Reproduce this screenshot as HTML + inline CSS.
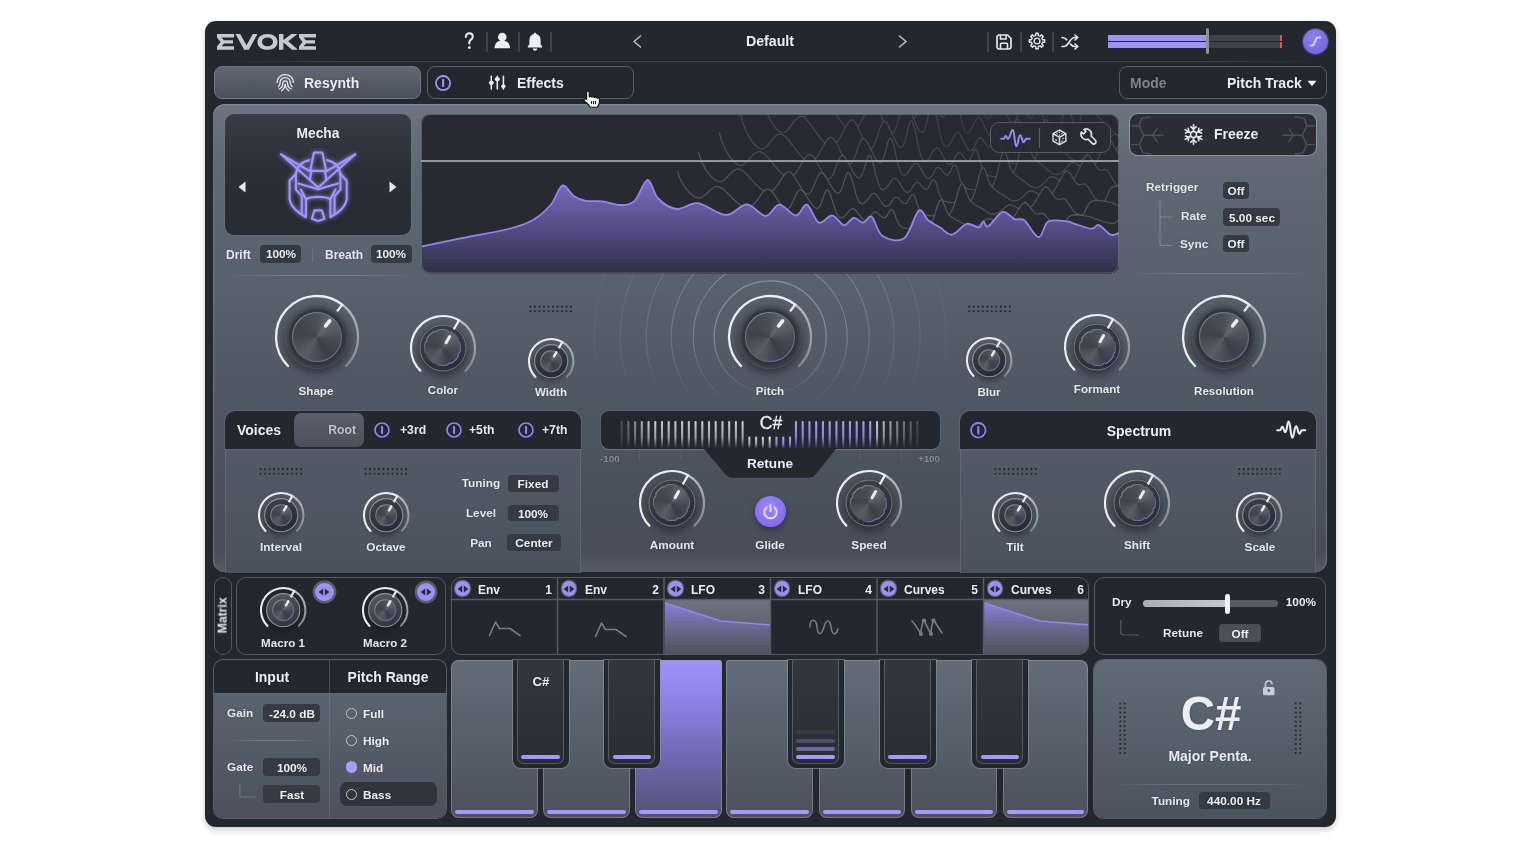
<!DOCTYPE html>
<html><head><meta charset="utf-8"><style>
*{box-sizing:border-box;margin:0;padding:0}
html,body{width:1540px;height:850px;background:#fff;overflow:hidden;font-family:"Liberation Sans",sans-serif;}
.a{position:absolute}
svg.a{overflow:visible}
.kb{border-radius:50%}
.t{position:absolute;color:#e8e9ee;font-weight:bold;white-space:nowrap;line-height:1;will-change:transform;text-shadow:0 0 2px rgba(20,22,28,.35)}
.hsep{position:absolute;width:1.6px;height:20px;background:#3f454e;top:31.5px}
.tab{position:absolute;top:66px;height:33px;border-radius:8px}
.dark{position:absolute;background:#2b2d34;border-radius:9px}
.mx{position:absolute;border:1.5px solid #555b64;border-radius:10px;background:#23272e}
</style></head><body>
<div id="win" class="a" style="left:205px;top:21px;width:1131px;height:806px;background:#23272e;border-radius:11px;box-shadow:0 3px 6px rgba(0,0,0,.2)"></div>
<div class="hsep" style="left:486px"></div>
<div class="hsep" style="left:518px"></div>
<div class="hsep" style="left:550px"></div>
<div class="hsep" style="left:987px"></div>
<div class="hsep" style="left:1020px"></div>
<div class="hsep" style="left:1052px"></div>
<div class="a" style="left:213px;top:60.8px;width:1114px;height:1.3px;background:linear-gradient(90deg,rgba(61,67,76,0),#3d434c 12%,#3d434c 88%,rgba(61,67,76,0))"></div>
<svg class="a" style="left:217px;top:33.8px;overflow:visible;" width="100" height="16" viewBox="0 0 100 16"><g fill="#c6c9d2"><path d="M0,0 H17 V3.6 H4.5 L7,6.2 H16 V9.6 H7 L4.5,12.2 H17 V15.8 H0 V12.4 L3.6,7.9 L0,3.4 Z"/><path d="M18.5,0 H23.2 L29.5,11.2 L35.8,0 H40.5 L31.8,15.8 H27.2 Z"/><path d="M50.5,0 C56.5,0 60.5,3.2 60.5,7.9 C60.5,12.6 56.5,15.8 50.5,15.8 C44.5,15.8 40.5,12.6 40.5,7.9 C40.5,3.2 44.5,0 50.5,0 Z M50.5,3.6 C47,3.6 45,5.4 45,7.9 C45,10.4 47,12.2 50.5,12.2 C54,12.2 56,10.4 56,7.9 C56,5.4 54,3.6 50.5,3.6 Z"/><path d="M62,0 H66.4 V6 L74.5,0 H80.5 L71.2,7.3 L81,15.8 H75 L66.4,8.6 V15.8 H62 Z"/><path d="M82,0 H99 V3.6 H86.5 L89,6.2 H98 V9.6 H89 L86.5,12.2 H99 V15.8 H82 V12.4 L85.6,7.9 L82,3.4 Z"/></g></svg>
<svg class="a" style="left:460px;top:30px;overflow:visible;" width="20" height="22" viewBox="0 0 20 22"><path d="M5.8,7 C5.8,4.5 7.5,3.3 9.3,3.3 C11.3,3.3 12.8,4.6 12.8,6.6 C12.8,8.6 11.3,9.3 10.3,10.2 C9.6,10.8 9.3,11.5 9.3,12.6 V13.6" fill="none" stroke="#eceef2" stroke-width="2" stroke-linecap="round"/><circle cx="9.3" cy="17.6" r="1.35" fill="#eceef2"/></svg>
<svg class="a" style="left:494px;top:32px;overflow:visible;" width="17" height="17" viewBox="0 0 17 17"><circle cx="8.3" cy="5" r="4.3" fill="#eceef2"/><path d="M0.5,16.3 C0.8,10.5 4,8.8 8.3,8.8 C12.6,8.8 15.8,10.5 16.1,16.3 Z" fill="#eceef2"/></svg>
<svg class="a" style="left:527px;top:32px;overflow:visible;" width="16" height="19" viewBox="0 0 16 19"><path d="M8,0.8 C8.9,0.8 9.3,1.4 9.3,2 C12.4,2.8 13.6,5.3 13.6,8.6 V12.2 L15.2,14.6 V15.6 H0.8 V14.6 L2.4,12.2 V8.6 C2.4,5.3 3.6,2.8 6.7,2 C6.7,1.4 7.1,0.8 8,0.8 Z" fill="#eceef2"/><path d="M5.8,16.6 H10.2 C10,18 9.2,18.8 8,18.8 C6.8,18.8 6,18 5.8,16.6 Z" fill="#eceef2"/></svg>
<svg class="a" style="left:632px;top:35px;overflow:visible;" width="10" height="13" viewBox="0 0 10 13"><path d="M8.5,1 L2,6.5 L8.5,12" fill="none" stroke="#b9bec6" stroke-width="1.6" stroke-linecap="round" stroke-linejoin="round"/></svg>
<svg class="a" style="left:898px;top:35px;overflow:visible;" width="10" height="13" viewBox="0 0 10 13"><path d="M1.5,1 L8,6.5 L1.5,12" fill="none" stroke="#b9bec6" stroke-width="1.6" stroke-linecap="round" stroke-linejoin="round"/></svg>
<div class="t" style="left:570.00px;width:400px;text-align:center;top:33.55px;font-size:14.2px;color:#eceef2;font-weight:bold;">Default</div>
<svg class="a" style="left:996px;top:34px;overflow:visible;" width="16" height="16" viewBox="0 0 16 16"><path d="M2.5,1 H11.5 L15,4.5 V12.8 C15,14.1 14.1,15 12.8,15 H3.2 C1.9,15 1,14.1 1,12.8 V3.2 C1,1.9 1.9,1 3.2,1 Z" fill="none" stroke="#e6e8ec" stroke-width="1.7" stroke-linejoin="round"/><path d="M4.5,1.2 V5 H10 V1.2" fill="none" stroke="#e6e8ec" stroke-width="1.6"/><path d="M4.5,15 V10.3 C4.5,9.7 5,9.3 5.5,9.3 H10.5 C11,9.3 11.5,9.7 11.5,10.3 V15" fill="none" stroke="#e6e8ec" stroke-width="1.6"/></svg>
<svg class="a" style="left:1028.7px;top:33.2px;overflow:visible;" width="17" height="17" viewBox="0 0 17 17"><path d="M13.17,5.86 L13.55,6.72 L15.70,6.78 L15.70,9.22 L13.55,9.28 L13.17,10.14 L12.83,11.02 L14.31,12.58 L12.58,14.31 L11.02,12.83 L10.14,13.17 L9.28,13.55 L9.22,15.70 L6.78,15.70 L6.72,13.55 L5.86,13.17 L4.98,12.83 L3.42,14.31 L1.69,12.58 L3.17,11.02 L2.83,10.14 L2.45,9.28 L0.30,9.22 L0.30,6.78 L2.45,6.72 L2.83,5.86 L3.17,4.98 L1.69,3.42 L3.42,1.69 L4.98,3.17 L5.86,2.83 L6.72,2.45 L6.78,0.30 L9.22,0.30 L9.28,2.45 L10.14,2.83 L11.02,3.17 L12.58,1.69 L14.31,3.42 L12.83,4.98 Z" fill="none" stroke="#e6e8ec" stroke-width="1.4" stroke-linejoin="round"/><circle cx="8" cy="8" r="2.9" fill="none" stroke="#e6e8ec" stroke-width="1.4"/></svg>
<svg class="a" style="left:1060.5px;top:34px;overflow:visible;" width="18" height="16" viewBox="0 0 18 16"><g fill="none" stroke="#e6e8ec" stroke-width="1.6" stroke-linecap="round" stroke-linejoin="round"><path d="M1,12.5 H3 C7.5,12.5 9,3.5 13.5,3.5 H16.5"/><path d="M1,3.5 C3,3.5 4.5,4 5.8,5.8"/><path d="M9.3,10 C10.5,11.8 12,12.5 14,12.5 H16.5"/><path d="M14,1 L16.8,3.5 L14,6"/><path d="M14,10 L16.8,12.5 L14,15"/></g></svg>
<div class="a" style="left:1108px;top:34.5px;width:174px;height:6px;background:#3c414a;border-radius:1px"></div>
<div class="a" style="left:1108px;top:42.3px;width:174px;height:6px;background:#3c414a;border-radius:1px"></div>
<div class="a" style="left:1108px;top:34.5px;width:101px;height:6px;background:#9d92f5"></div>
<div class="a" style="left:1108px;top:42.3px;width:101px;height:6px;background:#9d92f5"></div>
<div class="a" style="left:1279.5px;top:34.5px;width:2.5px;height:6px;background:#e0524f"></div>
<div class="a" style="left:1279.5px;top:42.3px;width:2.5px;height:6px;background:#e0524f"></div>
<div class="a" style="left:1205.8px;top:28px;width:3.4px;height:26.3px;background:#8b9199;border-radius:2px"></div>
<div class="a kb" style="left:1303px;top:29px;width:25px;height:25px;background:radial-gradient(circle at 40% 30%,#8c80ee,#6e60dc);box-shadow:0 0 0 1px rgba(120,110,220,.4)"></div>
<svg class="a" style="left:1308px;top:35px;overflow:visible;" width="15" height="13" viewBox="0 0 15 13"><path d="M2.5,10.5 H5.2 L9,2.5 H12.5" fill="none" stroke="#eceaff" stroke-width="1.6" stroke-linecap="round" stroke-linejoin="round"/></svg>
<div class="tab" style="left:214px;width:207px;background:linear-gradient(#606875,#49505c);border:1px solid #6f7783"></div>
<svg class="a" style="left:270px;top:70px;overflow:visible;" width="30" height="26" viewBox="0 0 30 26"><g fill="none" stroke="#e2e5ea" stroke-width="1.35" stroke-linecap="round"><path d="M7.2,12.4 C7.2,7.6 10.8,4.6 15.2,4.6 C19.6,4.6 23.4,7.6 23.4,12.4"/><path d="M8.4,16.6 C9.6,15.8 10,14.6 10,12.8 C10,9.8 12.2,7.6 15.2,7.6 C18.2,7.6 20.4,9.8 20.4,12.8 C20.4,14.6 20.9,15.8 22.2,16.6"/><path d="M9.2,19 C11.6,18 12.8,16.4 12.8,13.6 C12.8,12 13.8,10.8 15.2,10.8 C16.6,10.8 17.6,12 17.6,13.6 C17.6,16.4 18.8,18 21.2,19"/><path d="M11.6,20.8 C13.8,19.2 15.1,16.8 15.2,13.8 C15.3,16.8 16.6,19.2 18.8,20.8"/></g></svg>
<div class="t" style="left:304.00px;top:75.58px;font-size:14px;color:#eceef2;font-weight:bold;">Resynth</div>
<div class="tab" style="left:426.5px;width:207.5px;border:1.5px solid #5b616b"></div>
<svg class="a" style="left:433.896px;top:73.596px;overflow:visible;" width="18.208" height="18.208" viewBox="0 0 18.208 18.208"><circle cx="9.10" cy="9.10" r="7.10" fill="none" stroke="#a094fa" stroke-width="1.8"/><line x1="9.10" y1="5.20" x2="9.10" y2="13.01" stroke="#a094fa" stroke-width="2.1"/></svg>
<svg class="a" style="left:484px;top:70px;overflow:visible;" width="30" height="26" viewBox="0 0 30 26"><g stroke="#eceef2" stroke-width="1.5" stroke-linecap="round"><line x1="7.3" y1="6.2" x2="7.3" y2="19"/><line x1="13.3" y1="6.2" x2="13.3" y2="19"/><line x1="19.4" y1="6.2" x2="19.4" y2="19"/></g><g fill="#eceef2"><ellipse cx="7.3" cy="12.8" rx="2.5" ry="2.1"/><ellipse cx="13.3" cy="9.2" rx="2.5" ry="2.1"/><path d="M16.9,16.2 L19.4,13.6 L21.9,16.2 L19.4,19.2 Z"/></g></svg>
<div class="t" style="left:517.00px;top:75.58px;font-size:14px;color:#eceef2;font-weight:bold;">Effects</div>
<div class="tab" style="left:1118.7px;width:208px;border:1.5px solid #565c66"></div>
<div class="t" style="left:1130.00px;top:75.58px;font-size:14px;color:#7f858e;font-weight:bold;">Mode</div>
<div class="t" style="left:1227.00px;top:75.58px;font-size:14px;color:#eceef2;font-weight:bold;">Pitch Track</div>
<svg class="a" style="left:1307px;top:80px;overflow:visible;" width="10" height="7" viewBox="0 0 10 7"><path d="M0.5,0.8 H9.5 L5,6.2 Z" fill="#eceef2"/></svg>
<div class="a" style="left:213px;top:104px;width:1114px;height:468px;border-radius:12px;background:linear-gradient(#6d7582,#5f6875 14%,#57606d 40%,#4f5764 63%,#474e5a 96%,#565d69);box-shadow:inset 0 1.5px 0 #7f8793, inset 1.2px 0 0 #6a717d, inset -1.2px 0 0 #6a717d"></div>
<svg class="a" style="left:0;top:0" width="1540" height="850"><defs><clipPath id="sonar"><rect x="590" y="273" width="360" height="135"/></clipPath><linearGradient id="sfade" gradientUnits="userSpaceOnUse" x1="0" y1="273" x2="0" y2="405"><stop offset="0" stop-color="#fff"/><stop offset="0.45" stop-color="#fff"/><stop offset="1" stop-color="#000"/></linearGradient><mask id="smask"><rect x="590" y="273" width="360" height="135" fill="url(#sfade)"/></mask></defs><g clip-path="url(#sonar)" mask="url(#smask)"><circle cx="770.2" cy="336.8" r="56" fill="none" stroke="rgba(205,210,218,0.42)" stroke-width="1.2"/><circle cx="770.2" cy="336.8" r="77" fill="none" stroke="rgba(205,210,218,0.32)" stroke-width="1.2"/><circle cx="770.2" cy="336.8" r="99" fill="none" stroke="rgba(205,210,218,0.24)" stroke-width="1.2"/><circle cx="770.2" cy="336.8" r="124" fill="none" stroke="rgba(205,210,218,0.17)" stroke-width="1.2"/><circle cx="770.2" cy="336.8" r="150" fill="none" stroke="rgba(205,210,218,0.11)" stroke-width="1.2"/><circle cx="770.2" cy="336.8" r="176" fill="none" stroke="rgba(205,210,218,0.06)" stroke-width="1.2"/></g></svg>
<div class="dark" style="left:225px;top:114px;width:186px;height:121px;background:linear-gradient(#383c46,#2c2f37 45%,#282b32);box-shadow:0 0 0 1px rgba(120,128,138,.35)"></div>
<div class="t" style="left:117.50px;width:400px;text-align:center;top:127.31px;font-size:13.8px;color:#eceef2;font-weight:bold;">Mecha</div>
<svg class="a" style="left:238px;top:181px;overflow:visible;" width="8" height="12" viewBox="0 0 8 12"><path d="M7.5,0.5 V11.5 L0.5,6 Z" fill="#e6e8ec"/></svg>
<svg class="a" style="left:388.5px;top:181px;overflow:visible;" width="8" height="12" viewBox="0 0 8 12"><path d="M0.5,0.5 V11.5 L7.5,6 Z" fill="#e6e8ec"/></svg>
<svg class="a" style="left:270px;top:140px" width="96" height="90" viewBox="0 0 907 850"><defs><filter id="glow" x="-20%" y="-20%" width="140%" height="140%"><feGaussianBlur stdDeviation="22"/></filter></defs><g opacity=".9" filter="url(#glow)"><g fill="none" stroke="#a295ff" stroke-width="20" stroke-linejoin="round" stroke-linecap="round"><path d="M105,135 L455,448 L805,135"/><path d="M105,135 L385,300"/><path d="M805,135 L525,300"/><path d="M415,118 H495 L530,292 H380 Z"/><path d="M390,300 L378,372"/><path d="M520,300 L532,372"/><path d="M245,318 C255,250 300,205 370,190"/><path d="M665,318 C655,250 610,205 540,190"/><path d="M268,410 L455,465 L642,410"/><path d="M245,318 L185,385 V560 C195,625 260,690 340,730 V560 L292,468"/><path d="M665,318 L725,385 V560 C715,625 650,690 570,730 V560 L618,468"/><path d="M245,318 V470 L300,530 V700"/><path d="M665,318 V470 L610,530 V700"/><path d="M340,560 C380,530 530,530 570,560"/><path d="M420,665 H490 L515,745 L455,765 L395,745 Z"/></g></g><g fill="none" stroke="#a295ff" stroke-width="20" stroke-linejoin="round" stroke-linecap="round"><path d="M105,135 L455,448 L805,135"/><path d="M105,135 L385,300"/><path d="M805,135 L525,300"/><path d="M415,118 H495 L530,292 H380 Z"/><path d="M390,300 L378,372"/><path d="M520,300 L532,372"/><path d="M245,318 C255,250 300,205 370,190"/><path d="M665,318 C655,250 610,205 540,190"/><path d="M268,410 L455,465 L642,410"/><path d="M245,318 L185,385 V560 C195,625 260,690 340,730 V560 L292,468"/><path d="M665,318 L725,385 V560 C715,625 650,690 570,730 V560 L618,468"/><path d="M245,318 V470 L300,530 V700"/><path d="M665,318 V470 L610,530 V700"/><path d="M340,560 C380,530 530,530 570,560"/><path d="M420,665 H490 L515,745 L455,765 L395,745 Z"/></g></svg>
<div class="t" style="left:225.50px;top:248.60px;font-size:12px;color:#e6e8ec;font-weight:bold;">Drift</div>
<div class="a" style="left:260px;top:244.6px;width:41px;height:18.4px;background:#353a43;border-radius:4px"></div>
<div class="t" style="left:80.50px;width:400px;text-align:center;top:249.47px;font-size:11.8px;color:#eef0f3;font-weight:bold;">100%</div>
<div class="a" style="left:312px;top:247.5px;width:1px;height:14px;background:#6b727c"></div>
<div class="t" style="left:325.00px;top:248.60px;font-size:12px;color:#e6e8ec;font-weight:bold;">Breath</div>
<div class="a" style="left:371px;top:244.6px;width:40.5px;height:18.4px;background:#353a43;border-radius:4px"></div>
<div class="t" style="left:191.25px;width:400px;text-align:center;top:249.47px;font-size:11.8px;color:#eef0f3;font-weight:bold;">100%</div>
<div class="a" style="left:225px;top:274.5px;width:190px;height:1px;background:linear-gradient(90deg,rgba(150,157,167,0),rgba(150,157,167,.45) 30%,rgba(150,157,167,.45) 70%,rgba(150,157,167,0))"></div>
<div class="a" style="left:1130px;top:273px;width:180px;height:1px;background:linear-gradient(90deg,rgba(150,157,167,0),rgba(150,157,167,.4) 30%,rgba(150,157,167,.4) 70%,rgba(150,157,167,0))"></div>
<svg class="a" style="left:0;top:0" width="1540" height="850"><defs>
<clipPath id="spc"><rect x="421" y="114" width="698" height="159.5" rx="9"/></clipPath>
<linearGradient id="spg" gradientUnits="userSpaceOnUse" x1="0" y1="180" x2="0" y2="273"><stop offset="0" stop-color="#7a6cc2"/><stop offset="0.55" stop-color="#524a80"/><stop offset="1" stop-color="#302f46"/></linearGradient>
</defs>
<rect x="421" y="114" width="698" height="159.5" rx="9" fill="#292932"/>
<g clip-path="url(#spc)">
<path d="M824.4,36.9 L826.1,46.1 L828.0,53.2 L830.1,59.9 L832.4,66.0 L834.8,71.4 L837.3,75.9 L839.8,79.5 L842.3,82.1 L844.8,83.6 L847.3,83.4 L849.7,81.3 L852.2,78.0 L854.7,73.9 L857.3,69.7 L860.0,66.2 L862.8,64.0 L865.8,64.0 L869.0,66.8 L872.5,71.8 L876.1,78.1 L879.8,84.7 L883.6,90.8 L887.2,95.8 L890.7,99.2 L893.9,100.6 L896.9,99.5 L899.7,96.3 L902.4,91.4 L905.0,85.5 L907.5,79.2 L910.0,73.5 L912.4,69.4 L914.9,67.9 L917.4,69.9 L919.9,74.5 L922.3,80.6 L924.7,87.3 L927.1,93.5 L929.3,98.6 L931.5,102.1 L933.6,103.4 L935.5,102.2 L937.3,98.9 L938.9,94.0 L940.5,87.9 L942.1,81.5 L943.7,75.5 L945.4,71.1 L947.2,69.3 L949.2,70.9 L951.3,75.0 L953.5,80.7 L955.8,86.9 L958.0,92.8 L960.1,97.6 L962.2,100.9 L964.0,102.1 L965.6,100.8 L967.1,97.2 L968.5,91.9 L969.8,85.6 L971.0,79.1 L972.2,73.4 L973.5,69.8 L974.9,69.3 L976.3,73.0 L977.8,79.7 L979.3,88.0 L980.8,96.8 L982.3,104.7 L983.8,111.3 L985.3,115.9 L986.9,118.4 L988.5,118.7 L990.1,117.5 L991.8,115.2 L993.5,112.0 L995.2,108.5 L996.9,105.2 L998.5,102.8 L1000.1,102.1 L1001.7,103.4 L1003.2,106.2 L1004.8,109.7 L1006.3,113.5 L1007.8,117.0 L1009.3,119.9 L1010.7,121.9 L1012.1,122.7 L1013.4,122.4 L1014.7,121.2 L1015.9,119.1 L1017.1,116.6 L1018.2,113.8 L1019.4,111.2 L1020.5,109.1 L1021.7,108.1 L1022.9,108.3 L1024.1,109.5 L1025.4,111.3 L1026.6,113.3 L1027.8,115.3 L1029.0,116.9 L1030.2,118.0 L1031.3,118.4 L1032.4,117.6 L1033.4,115.7 L1034.4,113.1 L1035.4,110.1 L1036.4,107.3 L1037.5,105.1 L1038.5,104.2 L1039.7,105.2 L1040.9,108.3 L1042.0,113.1 L1043.1,118.6 L1044.3,124.0 L1045.5,128.6 L1047.0,132.1 L1048.6,134.5 L1050.5,135.9 L1052.7,136.7 L1055.3,137.2 L1058.2,137.6 L1061.1,137.8 L1064.1,137.8 L1067.0,137.8 L1069.8,137.6 L1072.2,137.1 L1074.4,135.9 L1076.4,133.0 L1078.3,128.1 L1080.2,120.9 L1081.9,112.0 L1083.5,102.6 L1085.1,94.2 L1086.6,88.8 L1088.0,87.1 L1089.3,88.3 L1090.4,91.7 L1091.6,96.3 L1092.6,101.5 L1093.7,106.4 L1094.9,110.5 L1096.2,113.5 L1097.6,115.6 L1099.0,117.5 L1100.5,119.3 L1102.1,120.9 L1103.6,122.4 L1105.1,123.9 L1106.7,125.2 L1108.2,126.6 L1109.7,128.1 L1111.1,129.7 L1112.6,131.2 L1114.1,132.6 L1115.5,133.7 L1117.0,134.5 L1118.6,134.9 L1120.2,134.9 L1121.9,134.4 L1123.7,133.3 L1125.5,131.6 L1127.4,129.4 L1129.3,126.9 L1131.1,124.3 L1132.9,122.0 L1134.6,120.6 L1136.3,120.3 L1137.9,120.8 L1139.6,121.9 L1141.2,123.3 L1142.7,124.6 L1144.2,125.7 L1145.5,126.5 L1146.6,126.6 L1147.5,126.0 L1148.3,124.9 L1148.9,123.4 L1149.4,121.6 L1149.9,119.7 L1150.4,117.9 L1150.8,116.6 L1151.4,116.0 L1151.9,116.4 L1152.4,117.8 L1152.8,119.6 L1153.2,121.6 L1153.8,123.3 L1154.4,124.6 L1155.2,125.1 L1156.3,124.7 L1157.7,123.0 L1159.3,120.0 L1161.1,115.7 L1163.1,110.5 L1165.1,104.8 L1167.0,99.3 L1168.9,94.9 L1170.7,92.3 L1172.3,92.1 L1173.9,93.5 L1175.5,96.2 L1177.0,99.6 L1178.5,103.1 L1179.9,106.4 L1181.3,109.1 L1182.7,110.8 L1184.0,111.6 L1185.2,111.6 L1186.3,111.3 L1187.3,110.8 L1188.5,110.5 L1189.6,110.7 L1190.9,111.6 L1192.3,113.5 L1193.9,116.8 L1195.7,121.1 L1197.6,125.7 L1199.5,129.8 L1201.4,133.0 L1203.3,135.1 L1205.1,136.2 L1206.7,136.6 L1208.1,136.3 L1209.2,135.3 L1210.2,133.4 L1211.2,130.5 L1212.2,126.9 L1213.3,122.7 L1214.7,118.8 L1216.3,116.0 L1218.3,114.4 L1220.7,113.6 L1223.3,113.4 L1226.0,113.6 L1228.7,114.2 L1231.3,114.9 L1233.6,115.5 L1235.5,116.0 L1236.9,116.3 L1237.9,116.7 L1238.7,117.2 L1239.3,117.8 L1239.9,118.4 L1240.6,119.1 L1241.5,119.8 L1242.8,120.6 L1244.5,121.6 L1246.6,122.8 L1248.8,124.1 L1251.2,125.3 L1253.6,126.5 L1255.9,127.4 L1257.9,128.0 L1259.6,128.3 L1260.9,128.1 L1262.0,127.5 L1262.8,126.4 L1263.5,125.2 L1264.2,124.0 L1264.9,123.0 L1265.7,122.5 L1266.8,122.7 L1268.1,123.8 L1269.6,125.6 L1271.1,127.7 L1272.7,129.8 L1274.4,131.7 L1276.0,133.2 L1277.4,134.3 L1278.8,134.9 L1280.1,135.2 L1281.3,135.2 L1282.5,135.0 L1283.6,134.7 L1284.7,134.3 L1285.6,133.9 L1286.4,133.6 L1286.4,300 L824.4,300 Z" fill="#292932" stroke="none"/><path d="M824.4,36.9 L826.1,46.1 L828.0,53.2 L830.1,59.9 L832.4,66.0 L834.8,71.4 L837.3,75.9 L839.8,79.5 L842.3,82.1 L844.8,83.6 L847.3,83.4 L849.7,81.3 L852.2,78.0 L854.7,73.9 L857.3,69.7 L860.0,66.2 L862.8,64.0 L865.8,64.0 L869.0,66.8 L872.5,71.8 L876.1,78.1 L879.8,84.7 L883.6,90.8 L887.2,95.8 L890.7,99.2 L893.9,100.6 L896.9,99.5 L899.7,96.3 L902.4,91.4 L905.0,85.5 L907.5,79.2 L910.0,73.5 L912.4,69.4 L914.9,67.9 L917.4,69.9 L919.9,74.5 L922.3,80.6 L924.7,87.3 L927.1,93.5 L929.3,98.6 L931.5,102.1 L933.6,103.4 L935.5,102.2 L937.3,98.9 L938.9,94.0 L940.5,87.9 L942.1,81.5 L943.7,75.5 L945.4,71.1 L947.2,69.3 L949.2,70.9 L951.3,75.0 L953.5,80.7 L955.8,86.9 L958.0,92.8 L960.1,97.6 L962.2,100.9 L964.0,102.1 L965.6,100.8 L967.1,97.2 L968.5,91.9 L969.8,85.6 L971.0,79.1 L972.2,73.4 L973.5,69.8 L974.9,69.3 L976.3,73.0 L977.8,79.7 L979.3,88.0 L980.8,96.8 L982.3,104.7 L983.8,111.3 L985.3,115.9 L986.9,118.4 L988.5,118.7 L990.1,117.5 L991.8,115.2 L993.5,112.0 L995.2,108.5 L996.9,105.2 L998.5,102.8 L1000.1,102.1 L1001.7,103.4 L1003.2,106.2 L1004.8,109.7 L1006.3,113.5 L1007.8,117.0 L1009.3,119.9 L1010.7,121.9 L1012.1,122.7 L1013.4,122.4 L1014.7,121.2 L1015.9,119.1 L1017.1,116.6 L1018.2,113.8 L1019.4,111.2 L1020.5,109.1 L1021.7,108.1 L1022.9,108.3 L1024.1,109.5 L1025.4,111.3 L1026.6,113.3 L1027.8,115.3 L1029.0,116.9 L1030.2,118.0 L1031.3,118.4 L1032.4,117.6 L1033.4,115.7 L1034.4,113.1 L1035.4,110.1 L1036.4,107.3 L1037.5,105.1 L1038.5,104.2 L1039.7,105.2 L1040.9,108.3 L1042.0,113.1 L1043.1,118.6 L1044.3,124.0 L1045.5,128.6 L1047.0,132.1 L1048.6,134.5 L1050.5,135.9 L1052.7,136.7 L1055.3,137.2 L1058.2,137.6 L1061.1,137.8 L1064.1,137.8 L1067.0,137.8 L1069.8,137.6 L1072.2,137.1 L1074.4,135.9 L1076.4,133.0 L1078.3,128.1 L1080.2,120.9 L1081.9,112.0 L1083.5,102.6 L1085.1,94.2 L1086.6,88.8 L1088.0,87.1 L1089.3,88.3 L1090.4,91.7 L1091.6,96.3 L1092.6,101.5 L1093.7,106.4 L1094.9,110.5 L1096.2,113.5 L1097.6,115.6 L1099.0,117.5 L1100.5,119.3 L1102.1,120.9 L1103.6,122.4 L1105.1,123.9 L1106.7,125.2 L1108.2,126.6 L1109.7,128.1 L1111.1,129.7 L1112.6,131.2 L1114.1,132.6 L1115.5,133.7 L1117.0,134.5 L1118.6,134.9 L1120.2,134.9 L1121.9,134.4 L1123.7,133.3 L1125.5,131.6 L1127.4,129.4 L1129.3,126.9 L1131.1,124.3 L1132.9,122.0 L1134.6,120.6 L1136.3,120.3 L1137.9,120.8 L1139.6,121.9 L1141.2,123.3 L1142.7,124.6 L1144.2,125.7 L1145.5,126.5 L1146.6,126.6 L1147.5,126.0 L1148.3,124.9 L1148.9,123.4 L1149.4,121.6 L1149.9,119.7 L1150.4,117.9 L1150.8,116.6 L1151.4,116.0 L1151.9,116.4 L1152.4,117.8 L1152.8,119.6 L1153.2,121.6 L1153.8,123.3 L1154.4,124.6 L1155.2,125.1 L1156.3,124.7 L1157.7,123.0 L1159.3,120.0 L1161.1,115.7 L1163.1,110.5 L1165.1,104.8 L1167.0,99.3 L1168.9,94.9 L1170.7,92.3 L1172.3,92.1 L1173.9,93.5 L1175.5,96.2 L1177.0,99.6 L1178.5,103.1 L1179.9,106.4 L1181.3,109.1 L1182.7,110.8 L1184.0,111.6 L1185.2,111.6 L1186.3,111.3 L1187.3,110.8 L1188.5,110.5 L1189.6,110.7 L1190.9,111.6 L1192.3,113.5 L1193.9,116.8 L1195.7,121.1 L1197.6,125.7 L1199.5,129.8 L1201.4,133.0 L1203.3,135.1 L1205.1,136.2 L1206.7,136.6 L1208.1,136.3 L1209.2,135.3 L1210.2,133.4 L1211.2,130.5 L1212.2,126.9 L1213.3,122.7 L1214.7,118.8 L1216.3,116.0 L1218.3,114.4 L1220.7,113.6 L1223.3,113.4 L1226.0,113.6 L1228.7,114.2 L1231.3,114.9 L1233.6,115.5 L1235.5,116.0 L1236.9,116.3 L1237.9,116.7 L1238.7,117.2 L1239.3,117.8 L1239.9,118.4 L1240.6,119.1 L1241.5,119.8 L1242.8,120.6 L1244.5,121.6 L1246.6,122.8 L1248.8,124.1 L1251.2,125.3 L1253.6,126.5 L1255.9,127.4 L1257.9,128.0 L1259.6,128.3 L1260.9,128.1 L1262.0,127.5 L1262.8,126.4 L1263.5,125.2 L1264.2,124.0 L1264.9,123.0 L1265.7,122.5 L1266.8,122.7 L1268.1,123.8 L1269.6,125.6 L1271.1,127.7 L1272.7,129.8 L1274.4,131.7 L1276.0,133.2 L1277.4,134.3 L1278.8,134.9 L1280.1,135.2 L1281.3,135.2 L1282.5,135.0 L1283.6,134.7 L1284.7,134.3 L1285.6,133.9 L1286.4,133.6" fill="none" stroke="rgba(128,131,139,0.20)" stroke-width="1.3" stroke-linejoin="round"/><path d="M803.4,56.1 L805.1,64.7 L807.0,71.4 L809.1,77.7 L811.4,83.4 L813.8,88.4 L816.3,92.7 L818.8,96.1 L821.3,98.5 L823.8,99.9 L826.3,99.7 L828.7,97.8 L831.2,94.7 L833.7,90.8 L836.3,86.9 L839.0,83.6 L841.8,81.5 L844.8,81.5 L848.0,84.2 L851.5,88.9 L855.1,94.8 L858.8,101.0 L862.6,106.7 L866.2,111.4 L869.7,114.6 L872.9,115.9 L875.9,114.9 L878.7,111.8 L881.4,107.2 L884.0,101.7 L886.5,95.8 L889.0,90.4 L891.4,86.6 L893.9,85.2 L896.4,87.1 L898.9,91.4 L901.3,97.1 L903.7,103.4 L906.1,109.2 L908.3,114.1 L910.5,117.3 L912.6,118.5 L914.5,117.4 L916.3,114.3 L917.9,109.7 L919.5,104.0 L921.1,97.9 L922.7,92.4 L924.4,88.2 L926.2,86.6 L928.2,88.0 L930.3,91.9 L932.5,97.2 L934.8,103.0 L937.0,108.6 L939.1,113.1 L941.2,116.2 L943.0,117.3 L944.6,116.1 L946.1,112.7 L947.5,107.8 L948.8,101.8 L950.0,95.7 L951.2,90.4 L952.5,86.9 L953.9,86.6 L955.3,89.9 L956.8,96.2 L958.3,104.1 L959.8,112.3 L961.3,119.8 L962.8,125.9 L964.3,130.3 L965.9,132.6 L967.5,132.9 L969.1,131.8 L970.8,129.6 L972.5,126.6 L974.2,123.3 L975.9,120.2 L977.5,118.0 L979.1,117.3 L980.7,118.6 L982.2,121.1 L983.8,124.4 L985.3,128.0 L986.8,131.3 L988.3,134.0 L989.7,135.8 L991.1,136.7 L992.4,136.4 L993.7,135.2 L994.9,133.3 L996.1,130.9 L997.2,128.3 L998.4,125.8 L999.5,123.9 L1000.7,122.9 L1001.9,123.1 L1003.1,124.2 L1004.4,125.9 L1005.6,127.8 L1006.8,129.7 L1008.0,131.2 L1009.2,132.3 L1010.3,132.6 L1011.4,131.8 L1012.4,130.1 L1013.4,127.6 L1014.4,124.8 L1015.4,122.2 L1016.5,120.1 L1017.5,119.3 L1018.7,120.2 L1019.9,123.2 L1021.0,127.7 L1022.1,132.8 L1023.3,137.8 L1024.5,142.2 L1026.0,145.5 L1027.6,147.7 L1029.5,149.0 L1031.7,149.7 L1034.3,150.3 L1037.2,150.6 L1040.1,150.8 L1043.1,150.8 L1046.0,150.8 L1048.8,150.6 L1051.2,150.2 L1053.4,149.0 L1055.4,146.3 L1057.3,141.7 L1059.2,134.9 L1060.9,126.6 L1062.5,117.8 L1064.1,109.9 L1065.6,104.8 L1067.0,103.2 L1068.3,104.4 L1069.4,107.5 L1070.6,111.9 L1071.6,116.7 L1072.7,121.3 L1073.9,125.2 L1075.2,128.0 L1076.6,130.0 L1078.0,131.8 L1079.5,133.4 L1081.1,134.9 L1082.6,136.4 L1084.1,137.7 L1085.7,139.0 L1087.2,140.3 L1088.7,141.7 L1090.1,143.2 L1091.6,144.7 L1093.1,145.9 L1094.5,147.0 L1096.0,147.7 L1097.6,148.1 L1099.2,148.1 L1100.9,147.6 L1102.7,146.6 L1104.5,145.0 L1106.4,143.0 L1108.3,140.6 L1110.1,138.1 L1111.9,136.0 L1113.6,134.7 L1115.3,134.4 L1116.9,134.9 L1118.6,135.9 L1120.2,137.2 L1121.7,138.4 L1123.2,139.5 L1124.5,140.2 L1125.6,140.3 L1126.5,139.8 L1127.3,138.7 L1127.9,137.3 L1128.4,135.6 L1128.9,133.8 L1129.4,132.1 L1129.8,130.9 L1130.4,130.3 L1130.9,130.7 L1131.4,132.0 L1131.8,133.7 L1132.2,135.6 L1132.8,137.2 L1133.4,138.4 L1134.2,138.9 L1135.3,138.5 L1136.7,137.0 L1138.3,134.1 L1140.1,130.1 L1142.1,125.2 L1144.1,119.9 L1146.0,114.7 L1147.9,110.5 L1149.7,108.1 L1151.3,107.9 L1152.9,109.3 L1154.5,111.8 L1156.0,114.9 L1157.5,118.3 L1158.9,121.4 L1160.3,123.9 L1161.7,125.5 L1163.0,126.2 L1164.2,126.2 L1165.3,125.9 L1166.3,125.5 L1167.5,125.2 L1168.6,125.4 L1169.9,126.2 L1171.3,128.0 L1172.9,131.1 L1174.7,135.2 L1176.6,139.5 L1178.5,143.3 L1180.4,146.3 L1182.3,148.2 L1184.1,149.3 L1185.7,149.7 L1187.1,149.4 L1188.2,148.5 L1189.2,146.7 L1190.2,144.0 L1191.2,140.5 L1192.3,136.7 L1193.7,133.0 L1195.3,130.3 L1197.3,128.8 L1199.7,128.1 L1202.3,127.9 L1205.0,128.1 L1207.7,128.6 L1210.3,129.3 L1212.6,129.9 L1214.5,130.3 L1215.9,130.7 L1216.9,131.0 L1217.7,131.5 L1218.3,132.0 L1218.9,132.6 L1219.6,133.2 L1220.5,133.9 L1221.8,134.7 L1223.5,135.6 L1225.6,136.7 L1227.8,137.9 L1230.2,139.1 L1232.6,140.2 L1234.9,141.0 L1236.9,141.6 L1238.6,141.9 L1239.9,141.7 L1241.0,141.1 L1241.8,140.1 L1242.5,139.0 L1243.2,137.9 L1243.9,137.0 L1244.7,136.5 L1245.8,136.7 L1247.1,137.7 L1248.6,139.3 L1250.1,141.3 L1251.7,143.3 L1253.4,145.0 L1255.0,146.5 L1256.4,147.5 L1257.8,148.1 L1259.1,148.3 L1260.3,148.3 L1261.5,148.2 L1262.6,147.9 L1263.7,147.5 L1264.6,147.2 L1265.4,146.9 L1265.4,300 L803.4,300 Z" fill="#292932" stroke="none"/><path d="M803.4,56.1 L805.1,64.7 L807.0,71.4 L809.1,77.7 L811.4,83.4 L813.8,88.4 L816.3,92.7 L818.8,96.1 L821.3,98.5 L823.8,99.9 L826.3,99.7 L828.7,97.8 L831.2,94.7 L833.7,90.8 L836.3,86.9 L839.0,83.6 L841.8,81.5 L844.8,81.5 L848.0,84.2 L851.5,88.9 L855.1,94.8 L858.8,101.0 L862.6,106.7 L866.2,111.4 L869.7,114.6 L872.9,115.9 L875.9,114.9 L878.7,111.8 L881.4,107.2 L884.0,101.7 L886.5,95.8 L889.0,90.4 L891.4,86.6 L893.9,85.2 L896.4,87.1 L898.9,91.4 L901.3,97.1 L903.7,103.4 L906.1,109.2 L908.3,114.1 L910.5,117.3 L912.6,118.5 L914.5,117.4 L916.3,114.3 L917.9,109.7 L919.5,104.0 L921.1,97.9 L922.7,92.4 L924.4,88.2 L926.2,86.6 L928.2,88.0 L930.3,91.9 L932.5,97.2 L934.8,103.0 L937.0,108.6 L939.1,113.1 L941.2,116.2 L943.0,117.3 L944.6,116.1 L946.1,112.7 L947.5,107.8 L948.8,101.8 L950.0,95.7 L951.2,90.4 L952.5,86.9 L953.9,86.6 L955.3,89.9 L956.8,96.2 L958.3,104.1 L959.8,112.3 L961.3,119.8 L962.8,125.9 L964.3,130.3 L965.9,132.6 L967.5,132.9 L969.1,131.8 L970.8,129.6 L972.5,126.6 L974.2,123.3 L975.9,120.2 L977.5,118.0 L979.1,117.3 L980.7,118.6 L982.2,121.1 L983.8,124.4 L985.3,128.0 L986.8,131.3 L988.3,134.0 L989.7,135.8 L991.1,136.7 L992.4,136.4 L993.7,135.2 L994.9,133.3 L996.1,130.9 L997.2,128.3 L998.4,125.8 L999.5,123.9 L1000.7,122.9 L1001.9,123.1 L1003.1,124.2 L1004.4,125.9 L1005.6,127.8 L1006.8,129.7 L1008.0,131.2 L1009.2,132.3 L1010.3,132.6 L1011.4,131.8 L1012.4,130.1 L1013.4,127.6 L1014.4,124.8 L1015.4,122.2 L1016.5,120.1 L1017.5,119.3 L1018.7,120.2 L1019.9,123.2 L1021.0,127.7 L1022.1,132.8 L1023.3,137.8 L1024.5,142.2 L1026.0,145.5 L1027.6,147.7 L1029.5,149.0 L1031.7,149.7 L1034.3,150.3 L1037.2,150.6 L1040.1,150.8 L1043.1,150.8 L1046.0,150.8 L1048.8,150.6 L1051.2,150.2 L1053.4,149.0 L1055.4,146.3 L1057.3,141.7 L1059.2,134.9 L1060.9,126.6 L1062.5,117.8 L1064.1,109.9 L1065.6,104.8 L1067.0,103.2 L1068.3,104.4 L1069.4,107.5 L1070.6,111.9 L1071.6,116.7 L1072.7,121.3 L1073.9,125.2 L1075.2,128.0 L1076.6,130.0 L1078.0,131.8 L1079.5,133.4 L1081.1,134.9 L1082.6,136.4 L1084.1,137.7 L1085.7,139.0 L1087.2,140.3 L1088.7,141.7 L1090.1,143.2 L1091.6,144.7 L1093.1,145.9 L1094.5,147.0 L1096.0,147.7 L1097.6,148.1 L1099.2,148.1 L1100.9,147.6 L1102.7,146.6 L1104.5,145.0 L1106.4,143.0 L1108.3,140.6 L1110.1,138.1 L1111.9,136.0 L1113.6,134.7 L1115.3,134.4 L1116.9,134.9 L1118.6,135.9 L1120.2,137.2 L1121.7,138.4 L1123.2,139.5 L1124.5,140.2 L1125.6,140.3 L1126.5,139.8 L1127.3,138.7 L1127.9,137.3 L1128.4,135.6 L1128.9,133.8 L1129.4,132.1 L1129.8,130.9 L1130.4,130.3 L1130.9,130.7 L1131.4,132.0 L1131.8,133.7 L1132.2,135.6 L1132.8,137.2 L1133.4,138.4 L1134.2,138.9 L1135.3,138.5 L1136.7,137.0 L1138.3,134.1 L1140.1,130.1 L1142.1,125.2 L1144.1,119.9 L1146.0,114.7 L1147.9,110.5 L1149.7,108.1 L1151.3,107.9 L1152.9,109.3 L1154.5,111.8 L1156.0,114.9 L1157.5,118.3 L1158.9,121.4 L1160.3,123.9 L1161.7,125.5 L1163.0,126.2 L1164.2,126.2 L1165.3,125.9 L1166.3,125.5 L1167.5,125.2 L1168.6,125.4 L1169.9,126.2 L1171.3,128.0 L1172.9,131.1 L1174.7,135.2 L1176.6,139.5 L1178.5,143.3 L1180.4,146.3 L1182.3,148.2 L1184.1,149.3 L1185.7,149.7 L1187.1,149.4 L1188.2,148.5 L1189.2,146.7 L1190.2,144.0 L1191.2,140.5 L1192.3,136.7 L1193.7,133.0 L1195.3,130.3 L1197.3,128.8 L1199.7,128.1 L1202.3,127.9 L1205.0,128.1 L1207.7,128.6 L1210.3,129.3 L1212.6,129.9 L1214.5,130.3 L1215.9,130.7 L1216.9,131.0 L1217.7,131.5 L1218.3,132.0 L1218.9,132.6 L1219.6,133.2 L1220.5,133.9 L1221.8,134.7 L1223.5,135.6 L1225.6,136.7 L1227.8,137.9 L1230.2,139.1 L1232.6,140.2 L1234.9,141.0 L1236.9,141.6 L1238.6,141.9 L1239.9,141.7 L1241.0,141.1 L1241.8,140.1 L1242.5,139.0 L1243.2,137.9 L1243.9,137.0 L1244.7,136.5 L1245.8,136.7 L1247.1,137.7 L1248.6,139.3 L1250.1,141.3 L1251.7,143.3 L1253.4,145.0 L1255.0,146.5 L1256.4,147.5 L1257.8,148.1 L1259.1,148.3 L1260.3,148.3 L1261.5,148.2 L1262.6,147.9 L1263.7,147.5 L1264.6,147.2 L1265.4,146.9" fill="none" stroke="rgba(128,131,139,0.24)" stroke-width="1.3" stroke-linejoin="round"/><path d="M782.4,75.3 L784.1,83.3 L786.0,89.6 L788.1,95.5 L790.4,100.8 L792.8,105.5 L795.3,109.5 L797.8,112.7 L800.3,114.9 L802.8,116.3 L805.3,116.1 L807.7,114.3 L810.2,111.3 L812.7,107.8 L815.3,104.1 L818.0,101.0 L820.8,99.1 L823.8,99.1 L827.0,101.5 L830.5,105.9 L834.1,111.4 L837.8,117.2 L841.6,122.6 L845.2,127.0 L848.7,130.0 L851.9,131.2 L854.9,130.2 L857.7,127.4 L860.4,123.1 L863.0,117.9 L865.5,112.4 L868.0,107.4 L870.4,103.8 L872.9,102.5 L875.4,104.2 L877.9,108.3 L880.3,113.7 L882.7,119.5 L885.1,125.0 L887.3,129.5 L889.5,132.5 L891.6,133.7 L893.5,132.6 L895.3,129.7 L896.9,125.4 L898.5,120.1 L900.1,114.4 L901.7,109.2 L903.4,105.3 L905.2,103.8 L907.2,105.1 L909.3,108.7 L911.5,113.7 L913.8,119.2 L916.0,124.3 L918.1,128.6 L920.2,131.5 L922.0,132.5 L923.6,131.4 L925.1,128.2 L926.5,123.6 L927.8,118.0 L929.0,112.3 L930.2,107.3 L931.5,104.1 L932.9,103.8 L934.3,106.9 L935.8,112.8 L937.3,120.2 L938.8,127.8 L940.3,134.8 L941.8,140.5 L943.3,144.6 L944.9,146.8 L946.5,147.1 L948.1,146.0 L949.8,144.0 L951.5,141.2 L953.2,138.1 L954.9,135.2 L956.5,133.1 L958.1,132.5 L959.7,133.7 L961.2,136.1 L962.8,139.2 L964.3,142.5 L965.8,145.6 L967.3,148.1 L968.7,149.8 L970.1,150.6 L971.4,150.3 L972.7,149.2 L973.9,147.4 L975.1,145.2 L976.2,142.8 L977.4,140.5 L978.5,138.6 L979.7,137.7 L980.9,137.9 L982.1,139.0 L983.4,140.5 L984.6,142.3 L985.8,144.1 L987.0,145.5 L988.2,146.5 L989.3,146.8 L990.4,146.1 L991.4,144.4 L992.4,142.2 L993.4,139.5 L994.4,137.0 L995.5,135.1 L996.5,134.3 L997.7,135.2 L998.9,138.0 L1000.0,142.2 L1001.1,147.0 L1002.3,151.7 L1003.5,155.7 L1005.0,158.8 L1006.6,160.9 L1008.5,162.1 L1010.7,162.8 L1013.3,163.3 L1016.2,163.6 L1019.1,163.8 L1022.1,163.8 L1025.0,163.8 L1027.8,163.7 L1030.2,163.3 L1032.4,162.1 L1034.4,159.6 L1036.3,155.3 L1038.2,149.0 L1039.9,141.2 L1041.5,133.0 L1043.1,125.6 L1044.6,120.8 L1046.0,119.3 L1047.3,120.4 L1048.4,123.4 L1049.6,127.4 L1050.6,131.9 L1051.7,136.3 L1052.9,139.9 L1054.2,142.5 L1055.6,144.3 L1057.0,146.0 L1058.5,147.6 L1060.1,149.0 L1061.6,150.3 L1063.1,151.6 L1064.7,152.8 L1066.2,154.0 L1067.7,155.3 L1069.1,156.7 L1070.6,158.1 L1072.1,159.3 L1073.5,160.2 L1075.0,160.9 L1076.6,161.3 L1078.2,161.3 L1079.9,160.9 L1081.7,159.9 L1083.5,158.4 L1085.4,156.5 L1087.3,154.2 L1089.1,151.9 L1090.9,150.0 L1092.6,148.8 L1094.3,148.5 L1095.9,148.9 L1097.6,149.9 L1099.2,151.1 L1100.7,152.2 L1102.2,153.2 L1103.5,153.9 L1104.6,154.0 L1105.5,153.5 L1106.3,152.5 L1106.9,151.2 L1107.4,149.6 L1107.9,147.9 L1108.4,146.4 L1108.8,145.2 L1109.4,144.7 L1109.9,145.1 L1110.4,146.2 L1110.8,147.9 L1111.2,149.6 L1111.8,151.1 L1112.4,152.2 L1113.2,152.7 L1114.3,152.4 L1115.7,150.9 L1117.3,148.2 L1119.1,144.4 L1121.1,139.9 L1123.1,134.9 L1125.0,130.1 L1126.9,126.2 L1128.7,123.9 L1130.3,123.7 L1131.9,125.0 L1133.5,127.3 L1135.0,130.3 L1136.5,133.4 L1137.9,136.3 L1139.3,138.6 L1140.7,140.2 L1142.0,140.8 L1143.2,140.9 L1144.3,140.6 L1145.3,140.1 L1146.5,139.9 L1147.6,140.0 L1148.9,140.8 L1150.3,142.5 L1151.9,145.4 L1153.7,149.2 L1155.6,153.2 L1157.5,156.8 L1159.4,159.6 L1161.3,161.4 L1163.1,162.4 L1164.7,162.8 L1166.1,162.5 L1167.2,161.6 L1168.2,160.0 L1169.2,157.5 L1170.2,154.2 L1171.3,150.6 L1172.7,147.2 L1174.3,144.7 L1176.3,143.3 L1178.7,142.5 L1181.3,142.4 L1184.0,142.6 L1186.7,143.1 L1189.3,143.7 L1191.6,144.3 L1193.5,144.7 L1194.9,145.0 L1195.9,145.3 L1196.7,145.8 L1197.3,146.3 L1197.9,146.8 L1198.6,147.4 L1199.5,148.1 L1200.8,148.8 L1202.5,149.6 L1204.6,150.7 L1206.8,151.8 L1209.2,152.9 L1211.6,153.9 L1213.9,154.7 L1215.9,155.2 L1217.6,155.5 L1218.9,155.3 L1220.0,154.7 L1220.8,153.8 L1221.5,152.8 L1222.2,151.7 L1222.9,150.9 L1223.7,150.4 L1224.8,150.6 L1226.1,151.6 L1227.6,153.1 L1229.1,154.9 L1230.7,156.8 L1232.4,158.4 L1234.0,159.8 L1235.4,160.7 L1236.8,161.3 L1238.1,161.5 L1239.3,161.5 L1240.5,161.4 L1241.6,161.1 L1242.7,160.8 L1243.6,160.4 L1244.4,160.1 L1244.4,300 L782.4,300 Z" fill="#292932" stroke="none"/><path d="M782.4,75.3 L784.1,83.3 L786.0,89.6 L788.1,95.5 L790.4,100.8 L792.8,105.5 L795.3,109.5 L797.8,112.7 L800.3,114.9 L802.8,116.3 L805.3,116.1 L807.7,114.3 L810.2,111.3 L812.7,107.8 L815.3,104.1 L818.0,101.0 L820.8,99.1 L823.8,99.1 L827.0,101.5 L830.5,105.9 L834.1,111.4 L837.8,117.2 L841.6,122.6 L845.2,127.0 L848.7,130.0 L851.9,131.2 L854.9,130.2 L857.7,127.4 L860.4,123.1 L863.0,117.9 L865.5,112.4 L868.0,107.4 L870.4,103.8 L872.9,102.5 L875.4,104.2 L877.9,108.3 L880.3,113.7 L882.7,119.5 L885.1,125.0 L887.3,129.5 L889.5,132.5 L891.6,133.7 L893.5,132.6 L895.3,129.7 L896.9,125.4 L898.5,120.1 L900.1,114.4 L901.7,109.2 L903.4,105.3 L905.2,103.8 L907.2,105.1 L909.3,108.7 L911.5,113.7 L913.8,119.2 L916.0,124.3 L918.1,128.6 L920.2,131.5 L922.0,132.5 L923.6,131.4 L925.1,128.2 L926.5,123.6 L927.8,118.0 L929.0,112.3 L930.2,107.3 L931.5,104.1 L932.9,103.8 L934.3,106.9 L935.8,112.8 L937.3,120.2 L938.8,127.8 L940.3,134.8 L941.8,140.5 L943.3,144.6 L944.9,146.8 L946.5,147.1 L948.1,146.0 L949.8,144.0 L951.5,141.2 L953.2,138.1 L954.9,135.2 L956.5,133.1 L958.1,132.5 L959.7,133.7 L961.2,136.1 L962.8,139.2 L964.3,142.5 L965.8,145.6 L967.3,148.1 L968.7,149.8 L970.1,150.6 L971.4,150.3 L972.7,149.2 L973.9,147.4 L975.1,145.2 L976.2,142.8 L977.4,140.5 L978.5,138.6 L979.7,137.7 L980.9,137.9 L982.1,139.0 L983.4,140.5 L984.6,142.3 L985.8,144.1 L987.0,145.5 L988.2,146.5 L989.3,146.8 L990.4,146.1 L991.4,144.4 L992.4,142.2 L993.4,139.5 L994.4,137.0 L995.5,135.1 L996.5,134.3 L997.7,135.2 L998.9,138.0 L1000.0,142.2 L1001.1,147.0 L1002.3,151.7 L1003.5,155.7 L1005.0,158.8 L1006.6,160.9 L1008.5,162.1 L1010.7,162.8 L1013.3,163.3 L1016.2,163.6 L1019.1,163.8 L1022.1,163.8 L1025.0,163.8 L1027.8,163.7 L1030.2,163.3 L1032.4,162.1 L1034.4,159.6 L1036.3,155.3 L1038.2,149.0 L1039.9,141.2 L1041.5,133.0 L1043.1,125.6 L1044.6,120.8 L1046.0,119.3 L1047.3,120.4 L1048.4,123.4 L1049.6,127.4 L1050.6,131.9 L1051.7,136.3 L1052.9,139.9 L1054.2,142.5 L1055.6,144.3 L1057.0,146.0 L1058.5,147.6 L1060.1,149.0 L1061.6,150.3 L1063.1,151.6 L1064.7,152.8 L1066.2,154.0 L1067.7,155.3 L1069.1,156.7 L1070.6,158.1 L1072.1,159.3 L1073.5,160.2 L1075.0,160.9 L1076.6,161.3 L1078.2,161.3 L1079.9,160.9 L1081.7,159.9 L1083.5,158.4 L1085.4,156.5 L1087.3,154.2 L1089.1,151.9 L1090.9,150.0 L1092.6,148.8 L1094.3,148.5 L1095.9,148.9 L1097.6,149.9 L1099.2,151.1 L1100.7,152.2 L1102.2,153.2 L1103.5,153.9 L1104.6,154.0 L1105.5,153.5 L1106.3,152.5 L1106.9,151.2 L1107.4,149.6 L1107.9,147.9 L1108.4,146.4 L1108.8,145.2 L1109.4,144.7 L1109.9,145.1 L1110.4,146.2 L1110.8,147.9 L1111.2,149.6 L1111.8,151.1 L1112.4,152.2 L1113.2,152.7 L1114.3,152.4 L1115.7,150.9 L1117.3,148.2 L1119.1,144.4 L1121.1,139.9 L1123.1,134.9 L1125.0,130.1 L1126.9,126.2 L1128.7,123.9 L1130.3,123.7 L1131.9,125.0 L1133.5,127.3 L1135.0,130.3 L1136.5,133.4 L1137.9,136.3 L1139.3,138.6 L1140.7,140.2 L1142.0,140.8 L1143.2,140.9 L1144.3,140.6 L1145.3,140.1 L1146.5,139.9 L1147.6,140.0 L1148.9,140.8 L1150.3,142.5 L1151.9,145.4 L1153.7,149.2 L1155.6,153.2 L1157.5,156.8 L1159.4,159.6 L1161.3,161.4 L1163.1,162.4 L1164.7,162.8 L1166.1,162.5 L1167.2,161.6 L1168.2,160.0 L1169.2,157.5 L1170.2,154.2 L1171.3,150.6 L1172.7,147.2 L1174.3,144.7 L1176.3,143.3 L1178.7,142.5 L1181.3,142.4 L1184.0,142.6 L1186.7,143.1 L1189.3,143.7 L1191.6,144.3 L1193.5,144.7 L1194.9,145.0 L1195.9,145.3 L1196.7,145.8 L1197.3,146.3 L1197.9,146.8 L1198.6,147.4 L1199.5,148.1 L1200.8,148.8 L1202.5,149.6 L1204.6,150.7 L1206.8,151.8 L1209.2,152.9 L1211.6,153.9 L1213.9,154.7 L1215.9,155.2 L1217.6,155.5 L1218.9,155.3 L1220.0,154.7 L1220.8,153.8 L1221.5,152.8 L1222.2,151.7 L1222.9,150.9 L1223.7,150.4 L1224.8,150.6 L1226.1,151.6 L1227.6,153.1 L1229.1,154.9 L1230.7,156.8 L1232.4,158.4 L1234.0,159.8 L1235.4,160.7 L1236.8,161.3 L1238.1,161.5 L1239.3,161.5 L1240.5,161.4 L1241.6,161.1 L1242.7,160.8 L1243.6,160.4 L1244.4,160.1" fill="none" stroke="rgba(128,131,139,0.28)" stroke-width="1.3" stroke-linejoin="round"/><path d="M761.4,94.5 L763.1,101.9 L765.0,107.8 L767.1,113.3 L769.4,118.2 L771.8,122.6 L774.3,126.3 L776.8,129.2 L779.3,131.4 L781.8,132.6 L784.3,132.4 L786.7,130.8 L789.2,128.0 L791.7,124.7 L794.3,121.3 L797.0,118.4 L799.8,116.6 L802.8,116.6 L806.0,118.9 L809.5,123.0 L813.1,128.1 L816.8,133.5 L820.6,138.5 L824.2,142.6 L827.7,145.3 L830.9,146.5 L833.9,145.6 L836.7,142.9 L839.4,139.0 L842.0,134.1 L844.5,129.0 L847.0,124.3 L849.4,121.0 L851.9,119.8 L854.4,121.4 L856.9,125.2 L859.3,130.2 L861.7,135.6 L864.1,140.7 L866.3,144.9 L868.5,147.7 L870.6,148.8 L872.5,147.8 L874.3,145.1 L875.9,141.1 L877.5,136.1 L879.1,130.9 L880.7,126.0 L882.4,122.4 L884.2,121.0 L886.2,122.2 L888.3,125.6 L890.5,130.2 L892.8,135.3 L895.0,140.1 L897.1,144.1 L899.2,146.7 L901.0,147.7 L902.6,146.6 L904.1,143.7 L905.5,139.4 L906.8,134.2 L908.0,128.9 L909.2,124.3 L910.5,121.3 L911.9,121.0 L913.3,123.9 L914.8,129.4 L916.3,136.2 L917.8,143.3 L919.3,149.9 L920.8,155.2 L922.3,159.0 L923.9,161.0 L925.5,161.3 L927.1,160.3 L928.8,158.4 L930.5,155.8 L932.2,152.9 L933.9,150.2 L935.5,148.3 L937.1,147.7 L938.7,148.8 L940.2,151.0 L941.8,153.9 L943.3,157.0 L944.8,159.8 L946.3,162.2 L947.7,163.8 L949.1,164.5 L950.4,164.3 L951.7,163.3 L952.9,161.6 L954.1,159.5 L955.2,157.3 L956.4,155.1 L957.5,153.4 L958.7,152.6 L959.9,152.8 L961.1,153.7 L962.4,155.2 L963.6,156.8 L964.8,158.5 L966.0,159.8 L967.2,160.7 L968.3,161.0 L969.4,160.3 L970.4,158.8 L971.4,156.7 L972.4,154.3 L973.4,151.9 L974.5,150.1 L975.5,149.4 L976.7,150.2 L977.9,152.8 L979.0,156.7 L980.1,161.2 L981.3,165.6 L982.5,169.3 L984.0,172.2 L985.6,174.2 L987.5,175.3 L989.7,175.9 L992.3,176.4 L995.2,176.7 L998.1,176.8 L1001.1,176.9 L1004.0,176.8 L1006.8,176.7 L1009.2,176.3 L1011.4,175.3 L1013.4,172.9 L1015.3,168.9 L1017.2,163.0 L1018.9,155.8 L1020.5,148.1 L1022.1,141.3 L1023.6,136.8 L1025.0,135.5 L1026.3,136.4 L1027.4,139.2 L1028.6,143.0 L1029.6,147.2 L1030.7,151.2 L1031.9,154.6 L1033.2,157.0 L1034.6,158.7 L1036.0,160.3 L1037.5,161.7 L1039.1,163.0 L1040.6,164.3 L1042.1,165.5 L1043.7,166.6 L1045.2,167.7 L1046.7,168.9 L1048.1,170.2 L1049.6,171.5 L1051.1,172.6 L1052.5,173.5 L1054.0,174.1 L1055.6,174.4 L1057.2,174.5 L1058.9,174.1 L1060.7,173.2 L1062.5,171.8 L1064.4,170.0 L1066.3,167.9 L1068.1,165.8 L1069.9,164.0 L1071.6,162.8 L1073.3,162.6 L1074.9,163.0 L1076.6,163.9 L1078.2,165.0 L1079.7,166.1 L1081.2,167.0 L1082.5,167.6 L1083.6,167.7 L1084.5,167.2 L1085.3,166.3 L1085.9,165.1 L1086.4,163.6 L1086.9,162.0 L1087.4,160.6 L1087.8,159.5 L1088.4,159.0 L1088.9,159.4 L1089.4,160.5 L1089.8,162.0 L1090.2,163.6 L1090.8,165.0 L1091.4,166.0 L1092.2,166.5 L1093.3,166.2 L1094.7,164.8 L1096.3,162.3 L1098.1,158.8 L1100.1,154.5 L1102.1,149.9 L1104.0,145.4 L1105.9,141.8 L1107.7,139.7 L1109.3,139.5 L1110.9,140.7 L1112.5,142.9 L1114.0,145.6 L1115.5,148.5 L1116.9,151.2 L1118.3,153.4 L1119.7,154.8 L1121.0,155.4 L1122.2,155.5 L1123.3,155.2 L1124.3,154.8 L1125.5,154.6 L1126.6,154.7 L1127.9,155.4 L1129.3,157.0 L1130.9,159.7 L1132.7,163.2 L1134.6,167.0 L1136.5,170.3 L1138.4,172.9 L1140.3,174.6 L1142.1,175.5 L1143.7,175.9 L1145.1,175.6 L1146.2,174.8 L1147.2,173.2 L1148.2,170.9 L1149.2,167.9 L1150.3,164.5 L1151.7,161.3 L1153.3,159.0 L1155.3,157.7 L1157.7,157.0 L1160.3,156.9 L1163.0,157.1 L1165.7,157.6 L1168.3,158.1 L1170.6,158.7 L1172.5,159.0 L1173.9,159.3 L1174.9,159.6 L1175.7,160.0 L1176.3,160.5 L1176.9,161.0 L1177.6,161.6 L1178.5,162.2 L1179.8,162.8 L1181.5,163.6 L1183.6,164.6 L1185.8,165.6 L1188.2,166.7 L1190.6,167.6 L1192.9,168.3 L1194.9,168.9 L1196.6,169.1 L1197.9,168.9 L1199.0,168.4 L1199.8,167.6 L1200.5,166.6 L1201.2,165.6 L1201.9,164.8 L1202.7,164.4 L1203.8,164.5 L1205.1,165.4 L1206.6,166.9 L1208.1,168.6 L1209.7,170.3 L1211.4,171.8 L1213.0,173.1 L1214.4,174.0 L1215.8,174.5 L1217.1,174.7 L1218.3,174.7 L1219.5,174.5 L1220.6,174.3 L1221.7,174.0 L1222.6,173.7 L1223.4,173.4 L1223.4,300 L761.4,300 Z" fill="#292932" stroke="none"/><path d="M761.4,94.5 L763.1,101.9 L765.0,107.8 L767.1,113.3 L769.4,118.2 L771.8,122.6 L774.3,126.3 L776.8,129.2 L779.3,131.4 L781.8,132.6 L784.3,132.4 L786.7,130.8 L789.2,128.0 L791.7,124.7 L794.3,121.3 L797.0,118.4 L799.8,116.6 L802.8,116.6 L806.0,118.9 L809.5,123.0 L813.1,128.1 L816.8,133.5 L820.6,138.5 L824.2,142.6 L827.7,145.3 L830.9,146.5 L833.9,145.6 L836.7,142.9 L839.4,139.0 L842.0,134.1 L844.5,129.0 L847.0,124.3 L849.4,121.0 L851.9,119.8 L854.4,121.4 L856.9,125.2 L859.3,130.2 L861.7,135.6 L864.1,140.7 L866.3,144.9 L868.5,147.7 L870.6,148.8 L872.5,147.8 L874.3,145.1 L875.9,141.1 L877.5,136.1 L879.1,130.9 L880.7,126.0 L882.4,122.4 L884.2,121.0 L886.2,122.2 L888.3,125.6 L890.5,130.2 L892.8,135.3 L895.0,140.1 L897.1,144.1 L899.2,146.7 L901.0,147.7 L902.6,146.6 L904.1,143.7 L905.5,139.4 L906.8,134.2 L908.0,128.9 L909.2,124.3 L910.5,121.3 L911.9,121.0 L913.3,123.9 L914.8,129.4 L916.3,136.2 L917.8,143.3 L919.3,149.9 L920.8,155.2 L922.3,159.0 L923.9,161.0 L925.5,161.3 L927.1,160.3 L928.8,158.4 L930.5,155.8 L932.2,152.9 L933.9,150.2 L935.5,148.3 L937.1,147.7 L938.7,148.8 L940.2,151.0 L941.8,153.9 L943.3,157.0 L944.8,159.8 L946.3,162.2 L947.7,163.8 L949.1,164.5 L950.4,164.3 L951.7,163.3 L952.9,161.6 L954.1,159.5 L955.2,157.3 L956.4,155.1 L957.5,153.4 L958.7,152.6 L959.9,152.8 L961.1,153.7 L962.4,155.2 L963.6,156.8 L964.8,158.5 L966.0,159.8 L967.2,160.7 L968.3,161.0 L969.4,160.3 L970.4,158.8 L971.4,156.7 L972.4,154.3 L973.4,151.9 L974.5,150.1 L975.5,149.4 L976.7,150.2 L977.9,152.8 L979.0,156.7 L980.1,161.2 L981.3,165.6 L982.5,169.3 L984.0,172.2 L985.6,174.2 L987.5,175.3 L989.7,175.9 L992.3,176.4 L995.2,176.7 L998.1,176.8 L1001.1,176.9 L1004.0,176.8 L1006.8,176.7 L1009.2,176.3 L1011.4,175.3 L1013.4,172.9 L1015.3,168.9 L1017.2,163.0 L1018.9,155.8 L1020.5,148.1 L1022.1,141.3 L1023.6,136.8 L1025.0,135.5 L1026.3,136.4 L1027.4,139.2 L1028.6,143.0 L1029.6,147.2 L1030.7,151.2 L1031.9,154.6 L1033.2,157.0 L1034.6,158.7 L1036.0,160.3 L1037.5,161.7 L1039.1,163.0 L1040.6,164.3 L1042.1,165.5 L1043.7,166.6 L1045.2,167.7 L1046.7,168.9 L1048.1,170.2 L1049.6,171.5 L1051.1,172.6 L1052.5,173.5 L1054.0,174.1 L1055.6,174.4 L1057.2,174.5 L1058.9,174.1 L1060.7,173.2 L1062.5,171.8 L1064.4,170.0 L1066.3,167.9 L1068.1,165.8 L1069.9,164.0 L1071.6,162.8 L1073.3,162.6 L1074.9,163.0 L1076.6,163.9 L1078.2,165.0 L1079.7,166.1 L1081.2,167.0 L1082.5,167.6 L1083.6,167.7 L1084.5,167.2 L1085.3,166.3 L1085.9,165.1 L1086.4,163.6 L1086.9,162.0 L1087.4,160.6 L1087.8,159.5 L1088.4,159.0 L1088.9,159.4 L1089.4,160.5 L1089.8,162.0 L1090.2,163.6 L1090.8,165.0 L1091.4,166.0 L1092.2,166.5 L1093.3,166.2 L1094.7,164.8 L1096.3,162.3 L1098.1,158.8 L1100.1,154.5 L1102.1,149.9 L1104.0,145.4 L1105.9,141.8 L1107.7,139.7 L1109.3,139.5 L1110.9,140.7 L1112.5,142.9 L1114.0,145.6 L1115.5,148.5 L1116.9,151.2 L1118.3,153.4 L1119.7,154.8 L1121.0,155.4 L1122.2,155.5 L1123.3,155.2 L1124.3,154.8 L1125.5,154.6 L1126.6,154.7 L1127.9,155.4 L1129.3,157.0 L1130.9,159.7 L1132.7,163.2 L1134.6,167.0 L1136.5,170.3 L1138.4,172.9 L1140.3,174.6 L1142.1,175.5 L1143.7,175.9 L1145.1,175.6 L1146.2,174.8 L1147.2,173.2 L1148.2,170.9 L1149.2,167.9 L1150.3,164.5 L1151.7,161.3 L1153.3,159.0 L1155.3,157.7 L1157.7,157.0 L1160.3,156.9 L1163.0,157.1 L1165.7,157.6 L1168.3,158.1 L1170.6,158.7 L1172.5,159.0 L1173.9,159.3 L1174.9,159.6 L1175.7,160.0 L1176.3,160.5 L1176.9,161.0 L1177.6,161.6 L1178.5,162.2 L1179.8,162.8 L1181.5,163.6 L1183.6,164.6 L1185.8,165.6 L1188.2,166.7 L1190.6,167.6 L1192.9,168.3 L1194.9,168.9 L1196.6,169.1 L1197.9,168.9 L1199.0,168.4 L1199.8,167.6 L1200.5,166.6 L1201.2,165.6 L1201.9,164.8 L1202.7,164.4 L1203.8,164.5 L1205.1,165.4 L1206.6,166.9 L1208.1,168.6 L1209.7,170.3 L1211.4,171.8 L1213.0,173.1 L1214.4,174.0 L1215.8,174.5 L1217.1,174.7 L1218.3,174.7 L1219.5,174.5 L1220.6,174.3 L1221.7,174.0 L1222.6,173.7 L1223.4,173.4" fill="none" stroke="rgba(128,131,139,0.32)" stroke-width="1.3" stroke-linejoin="round"/><path d="M740.4,113.7 L742.1,120.6 L744.0,126.0 L746.1,131.0 L748.4,135.6 L750.8,139.7 L753.3,143.1 L755.8,145.8 L758.3,147.8 L760.8,148.9 L763.3,148.8 L765.7,147.2 L768.2,144.7 L770.7,141.6 L773.3,138.5 L776.0,135.8 L778.8,134.1 L781.8,134.1 L785.0,136.2 L788.5,140.0 L792.1,144.8 L795.8,149.7 L799.6,154.4 L803.2,158.1 L806.7,160.7 L809.9,161.7 L812.9,160.9 L815.7,158.5 L818.4,154.8 L821.0,150.3 L823.5,145.6 L826.0,141.3 L828.4,138.2 L830.9,137.1 L833.4,138.6 L835.9,142.0 L838.3,146.7 L840.7,151.7 L843.1,156.4 L845.3,160.3 L847.5,162.9 L849.6,163.9 L851.5,163.0 L853.3,160.5 L854.9,156.8 L856.5,152.2 L858.1,147.3 L859.7,142.8 L861.4,139.5 L863.2,138.2 L865.2,139.3 L867.3,142.4 L869.5,146.7 L871.8,151.4 L874.0,155.9 L876.1,159.5 L878.2,162.0 L880.0,162.9 L881.6,161.9 L883.1,159.2 L884.5,155.2 L885.8,150.4 L887.0,145.5 L888.2,141.2 L889.5,138.5 L890.9,138.2 L892.3,140.9 L893.8,146.0 L895.3,152.3 L896.8,158.9 L898.3,164.9 L899.8,169.8 L901.3,173.3 L902.9,175.2 L904.5,175.5 L906.1,174.6 L907.8,172.8 L909.5,170.4 L911.2,167.7 L912.9,165.2 L914.5,163.4 L916.1,162.9 L917.7,163.9 L919.2,166.0 L920.8,168.6 L922.3,171.5 L923.8,174.1 L925.3,176.3 L926.7,177.8 L928.1,178.5 L929.4,178.2 L930.7,177.3 L931.9,175.8 L933.1,173.8 L934.2,171.7 L935.4,169.7 L936.5,168.2 L937.7,167.4 L938.9,167.6 L940.1,168.5 L941.4,169.8 L942.6,171.4 L943.8,172.9 L945.0,174.1 L946.2,174.9 L947.3,175.2 L948.4,174.6 L949.4,173.2 L950.4,171.2 L951.4,169.0 L952.4,166.8 L953.5,165.2 L954.5,164.5 L955.7,165.2 L956.9,167.6 L958.0,171.2 L959.1,175.4 L960.3,179.4 L961.5,182.9 L963.0,185.6 L964.6,187.4 L966.5,188.4 L968.7,189.0 L971.3,189.4 L974.2,189.7 L977.1,189.8 L980.1,189.9 L983.0,189.8 L985.8,189.7 L988.2,189.4 L990.4,188.4 L992.4,186.2 L994.3,182.5 L996.2,177.1 L997.9,170.4 L999.5,163.3 L1001.1,157.0 L1002.6,152.9 L1004.0,151.6 L1005.3,152.5 L1006.4,155.0 L1007.6,158.5 L1008.6,162.4 L1009.7,166.1 L1010.9,169.2 L1012.2,171.5 L1013.6,173.1 L1015.0,174.5 L1016.5,175.9 L1018.1,177.1 L1019.6,178.2 L1021.1,179.3 L1022.7,180.4 L1024.2,181.4 L1025.7,182.5 L1027.1,183.7 L1028.6,184.9 L1030.1,185.9 L1031.5,186.8 L1033.0,187.3 L1034.6,187.6 L1036.2,187.7 L1037.9,187.3 L1039.7,186.5 L1041.5,185.2 L1043.4,183.5 L1045.3,181.6 L1047.1,179.6 L1048.9,177.9 L1050.6,176.9 L1052.3,176.6 L1053.9,177.0 L1055.6,177.8 L1057.2,178.9 L1058.7,179.9 L1060.2,180.7 L1061.5,181.3 L1062.6,181.4 L1063.5,181.0 L1064.3,180.1 L1064.9,179.0 L1065.4,177.6 L1065.9,176.2 L1066.4,174.8 L1066.8,173.8 L1067.4,173.4 L1067.9,173.7 L1068.4,174.7 L1068.8,176.1 L1069.2,177.6 L1069.8,178.9 L1070.4,179.9 L1071.2,180.3 L1072.3,180.0 L1073.7,178.7 L1075.3,176.4 L1077.1,173.2 L1079.1,169.2 L1081.1,164.9 L1083.0,160.8 L1084.9,157.4 L1086.7,155.5 L1088.3,155.3 L1089.9,156.4 L1091.5,158.5 L1093.0,161.0 L1094.5,163.7 L1095.9,166.2 L1097.3,168.2 L1098.7,169.5 L1100.0,170.0 L1101.2,170.1 L1102.3,169.8 L1103.3,169.5 L1104.5,169.3 L1105.6,169.4 L1106.9,170.1 L1108.3,171.5 L1109.9,174.0 L1111.7,177.3 L1113.6,180.7 L1115.5,183.8 L1117.4,186.2 L1119.3,187.8 L1121.1,188.7 L1122.7,188.9 L1124.1,188.7 L1125.2,188.0 L1126.2,186.5 L1127.2,184.4 L1128.2,181.6 L1129.3,178.5 L1130.7,175.5 L1132.3,173.4 L1134.3,172.2 L1136.7,171.5 L1139.3,171.4 L1142.0,171.6 L1144.7,172.0 L1147.3,172.5 L1149.6,173.0 L1151.5,173.4 L1152.9,173.6 L1153.9,173.9 L1154.7,174.3 L1155.3,174.7 L1155.9,175.2 L1156.6,175.7 L1157.5,176.3 L1158.8,176.9 L1160.5,177.6 L1162.6,178.5 L1164.8,179.5 L1167.2,180.4 L1169.6,181.3 L1171.9,182.0 L1173.9,182.5 L1175.6,182.7 L1176.9,182.5 L1178.0,182.0 L1178.8,181.3 L1179.5,180.3 L1180.2,179.4 L1180.9,178.7 L1181.7,178.3 L1182.8,178.5 L1184.1,179.3 L1185.6,180.6 L1187.1,182.2 L1188.7,183.8 L1190.4,185.2 L1192.0,186.4 L1193.4,187.2 L1194.8,187.7 L1196.1,187.9 L1197.3,187.9 L1198.5,187.7 L1199.6,187.5 L1200.7,187.2 L1201.6,186.9 L1202.4,186.7 L1202.4,300 L740.4,300 Z" fill="#292932" stroke="none"/><path d="M740.4,113.7 L742.1,120.6 L744.0,126.0 L746.1,131.0 L748.4,135.6 L750.8,139.7 L753.3,143.1 L755.8,145.8 L758.3,147.8 L760.8,148.9 L763.3,148.8 L765.7,147.2 L768.2,144.7 L770.7,141.6 L773.3,138.5 L776.0,135.8 L778.8,134.1 L781.8,134.1 L785.0,136.2 L788.5,140.0 L792.1,144.8 L795.8,149.7 L799.6,154.4 L803.2,158.1 L806.7,160.7 L809.9,161.7 L812.9,160.9 L815.7,158.5 L818.4,154.8 L821.0,150.3 L823.5,145.6 L826.0,141.3 L828.4,138.2 L830.9,137.1 L833.4,138.6 L835.9,142.0 L838.3,146.7 L840.7,151.7 L843.1,156.4 L845.3,160.3 L847.5,162.9 L849.6,163.9 L851.5,163.0 L853.3,160.5 L854.9,156.8 L856.5,152.2 L858.1,147.3 L859.7,142.8 L861.4,139.5 L863.2,138.2 L865.2,139.3 L867.3,142.4 L869.5,146.7 L871.8,151.4 L874.0,155.9 L876.1,159.5 L878.2,162.0 L880.0,162.9 L881.6,161.9 L883.1,159.2 L884.5,155.2 L885.8,150.4 L887.0,145.5 L888.2,141.2 L889.5,138.5 L890.9,138.2 L892.3,140.9 L893.8,146.0 L895.3,152.3 L896.8,158.9 L898.3,164.9 L899.8,169.8 L901.3,173.3 L902.9,175.2 L904.5,175.5 L906.1,174.6 L907.8,172.8 L909.5,170.4 L911.2,167.7 L912.9,165.2 L914.5,163.4 L916.1,162.9 L917.7,163.9 L919.2,166.0 L920.8,168.6 L922.3,171.5 L923.8,174.1 L925.3,176.3 L926.7,177.8 L928.1,178.5 L929.4,178.2 L930.7,177.3 L931.9,175.8 L933.1,173.8 L934.2,171.7 L935.4,169.7 L936.5,168.2 L937.7,167.4 L938.9,167.6 L940.1,168.5 L941.4,169.8 L942.6,171.4 L943.8,172.9 L945.0,174.1 L946.2,174.9 L947.3,175.2 L948.4,174.6 L949.4,173.2 L950.4,171.2 L951.4,169.0 L952.4,166.8 L953.5,165.2 L954.5,164.5 L955.7,165.2 L956.9,167.6 L958.0,171.2 L959.1,175.4 L960.3,179.4 L961.5,182.9 L963.0,185.6 L964.6,187.4 L966.5,188.4 L968.7,189.0 L971.3,189.4 L974.2,189.7 L977.1,189.8 L980.1,189.9 L983.0,189.8 L985.8,189.7 L988.2,189.4 L990.4,188.4 L992.4,186.2 L994.3,182.5 L996.2,177.1 L997.9,170.4 L999.5,163.3 L1001.1,157.0 L1002.6,152.9 L1004.0,151.6 L1005.3,152.5 L1006.4,155.0 L1007.6,158.5 L1008.6,162.4 L1009.7,166.1 L1010.9,169.2 L1012.2,171.5 L1013.6,173.1 L1015.0,174.5 L1016.5,175.9 L1018.1,177.1 L1019.6,178.2 L1021.1,179.3 L1022.7,180.4 L1024.2,181.4 L1025.7,182.5 L1027.1,183.7 L1028.6,184.9 L1030.1,185.9 L1031.5,186.8 L1033.0,187.3 L1034.6,187.6 L1036.2,187.7 L1037.9,187.3 L1039.7,186.5 L1041.5,185.2 L1043.4,183.5 L1045.3,181.6 L1047.1,179.6 L1048.9,177.9 L1050.6,176.9 L1052.3,176.6 L1053.9,177.0 L1055.6,177.8 L1057.2,178.9 L1058.7,179.9 L1060.2,180.7 L1061.5,181.3 L1062.6,181.4 L1063.5,181.0 L1064.3,180.1 L1064.9,179.0 L1065.4,177.6 L1065.9,176.2 L1066.4,174.8 L1066.8,173.8 L1067.4,173.4 L1067.9,173.7 L1068.4,174.7 L1068.8,176.1 L1069.2,177.6 L1069.8,178.9 L1070.4,179.9 L1071.2,180.3 L1072.3,180.0 L1073.7,178.7 L1075.3,176.4 L1077.1,173.2 L1079.1,169.2 L1081.1,164.9 L1083.0,160.8 L1084.9,157.4 L1086.7,155.5 L1088.3,155.3 L1089.9,156.4 L1091.5,158.5 L1093.0,161.0 L1094.5,163.7 L1095.9,166.2 L1097.3,168.2 L1098.7,169.5 L1100.0,170.0 L1101.2,170.1 L1102.3,169.8 L1103.3,169.5 L1104.5,169.3 L1105.6,169.4 L1106.9,170.1 L1108.3,171.5 L1109.9,174.0 L1111.7,177.3 L1113.6,180.7 L1115.5,183.8 L1117.4,186.2 L1119.3,187.8 L1121.1,188.7 L1122.7,188.9 L1124.1,188.7 L1125.2,188.0 L1126.2,186.5 L1127.2,184.4 L1128.2,181.6 L1129.3,178.5 L1130.7,175.5 L1132.3,173.4 L1134.3,172.2 L1136.7,171.5 L1139.3,171.4 L1142.0,171.6 L1144.7,172.0 L1147.3,172.5 L1149.6,173.0 L1151.5,173.4 L1152.9,173.6 L1153.9,173.9 L1154.7,174.3 L1155.3,174.7 L1155.9,175.2 L1156.6,175.7 L1157.5,176.3 L1158.8,176.9 L1160.5,177.6 L1162.6,178.5 L1164.8,179.5 L1167.2,180.4 L1169.6,181.3 L1171.9,182.0 L1173.9,182.5 L1175.6,182.7 L1176.9,182.5 L1178.0,182.0 L1178.8,181.3 L1179.5,180.3 L1180.2,179.4 L1180.9,178.7 L1181.7,178.3 L1182.8,178.5 L1184.1,179.3 L1185.6,180.6 L1187.1,182.2 L1188.7,183.8 L1190.4,185.2 L1192.0,186.4 L1193.4,187.2 L1194.8,187.7 L1196.1,187.9 L1197.3,187.9 L1198.5,187.7 L1199.6,187.5 L1200.7,187.2 L1201.6,186.9 L1202.4,186.7" fill="none" stroke="rgba(128,131,139,0.36)" stroke-width="1.3" stroke-linejoin="round"/><path d="M719.4,132.9 L721.1,139.2 L723.0,144.2 L725.1,148.8 L727.4,153.0 L729.8,156.8 L732.3,159.9 L734.8,162.4 L737.3,164.2 L739.8,165.3 L742.3,165.1 L744.7,163.7 L747.2,161.4 L749.7,158.5 L752.3,155.6 L755.0,153.2 L757.8,151.7 L760.8,151.7 L764.0,153.6 L767.5,157.1 L771.1,161.4 L774.8,166.0 L778.6,170.3 L782.2,173.7 L785.7,176.1 L788.9,177.0 L791.9,176.3 L794.7,174.0 L797.4,170.7 L800.0,166.5 L802.5,162.2 L805.0,158.2 L807.4,155.4 L809.9,154.4 L812.4,155.7 L814.9,158.9 L817.3,163.2 L819.7,167.8 L822.1,172.1 L824.3,175.7 L826.5,178.1 L828.6,179.0 L830.5,178.2 L832.3,175.9 L833.9,172.4 L835.5,168.3 L837.1,163.8 L838.7,159.7 L840.4,156.6 L842.2,155.4 L844.2,156.4 L846.3,159.3 L848.5,163.2 L850.8,167.5 L853.0,171.6 L855.1,175.0 L857.2,177.3 L859.0,178.1 L860.6,177.2 L862.1,174.7 L863.5,171.0 L864.8,166.7 L866.0,162.1 L867.2,158.2 L868.5,155.7 L869.9,155.4 L871.3,157.9 L872.8,162.5 L874.3,168.3 L875.8,174.4 L877.3,179.9 L878.8,184.5 L880.3,187.7 L881.9,189.4 L883.5,189.6 L885.1,188.8 L886.8,187.2 L888.5,185.0 L890.2,182.5 L891.9,180.2 L893.5,178.6 L895.1,178.1 L896.7,179.0 L898.2,180.9 L899.8,183.4 L901.3,186.0 L902.8,188.4 L904.3,190.4 L905.7,191.8 L907.1,192.4 L908.4,192.2 L909.7,191.3 L910.9,189.9 L912.1,188.1 L913.2,186.2 L914.4,184.4 L915.5,182.9 L916.7,182.2 L917.9,182.4 L919.1,183.2 L920.4,184.5 L921.6,185.9 L922.8,187.2 L924.0,188.4 L925.2,189.2 L926.3,189.4 L927.4,188.8 L928.4,187.5 L929.4,185.7 L930.4,183.7 L931.4,181.7 L932.5,180.2 L933.5,179.6 L934.7,180.2 L935.9,182.4 L937.0,185.7 L938.1,189.6 L939.3,193.3 L940.5,196.5 L942.0,198.9 L943.6,200.6 L945.5,201.5 L947.7,202.1 L950.3,202.5 L953.2,202.7 L956.1,202.8 L959.1,202.9 L962.0,202.9 L964.8,202.7 L967.2,202.4 L969.4,201.5 L971.4,199.5 L973.3,196.1 L975.2,191.1 L976.9,185.0 L978.5,178.4 L980.1,172.6 L981.6,168.9 L983.0,167.7 L984.3,168.5 L985.4,170.9 L986.6,174.1 L987.6,177.7 L988.7,181.1 L989.9,183.9 L991.2,186.0 L992.6,187.5 L994.0,188.8 L995.5,190.0 L997.1,191.1 L998.6,192.2 L1000.1,193.2 L1001.7,194.1 L1003.2,195.1 L1004.7,196.1 L1006.1,197.2 L1007.6,198.3 L1009.1,199.3 L1010.5,200.0 L1012.0,200.5 L1013.6,200.8 L1015.2,200.9 L1016.9,200.5 L1018.7,199.8 L1020.5,198.6 L1022.4,197.1 L1024.3,195.3 L1026.1,193.5 L1027.9,191.9 L1029.6,190.9 L1031.3,190.7 L1032.9,191.1 L1034.6,191.8 L1036.2,192.8 L1037.7,193.7 L1039.2,194.5 L1040.5,195.0 L1041.6,195.1 L1042.5,194.7 L1043.3,193.9 L1043.9,192.9 L1044.4,191.6 L1044.9,190.3 L1045.4,189.1 L1045.8,188.1 L1046.4,187.7 L1046.9,188.0 L1047.4,189.0 L1047.8,190.2 L1048.2,191.6 L1048.8,192.8 L1049.4,193.7 L1050.2,194.1 L1051.3,193.8 L1052.7,192.6 L1054.3,190.5 L1056.1,187.5 L1058.1,183.9 L1060.1,180.0 L1062.0,176.2 L1063.9,173.1 L1065.7,171.3 L1067.3,171.1 L1068.9,172.1 L1070.5,174.0 L1072.0,176.4 L1073.5,178.8 L1074.9,181.1 L1076.3,182.9 L1077.7,184.1 L1079.0,184.7 L1080.2,184.7 L1081.3,184.5 L1082.3,184.1 L1083.5,183.9 L1084.6,184.0 L1085.9,184.7 L1087.3,186.0 L1088.9,188.3 L1090.7,191.3 L1092.6,194.5 L1094.5,197.3 L1096.4,199.5 L1098.3,201.0 L1100.1,201.8 L1101.7,202.0 L1103.1,201.8 L1104.2,201.1 L1105.2,199.8 L1106.2,197.8 L1107.2,195.3 L1108.3,192.4 L1109.7,189.7 L1111.3,187.7 L1113.3,186.6 L1115.7,186.0 L1118.3,185.9 L1121.0,186.1 L1123.7,186.5 L1126.3,187.0 L1128.6,187.4 L1130.5,187.7 L1131.9,188.0 L1132.9,188.3 L1133.7,188.6 L1134.3,189.0 L1134.9,189.4 L1135.6,189.9 L1136.5,190.4 L1137.8,190.9 L1139.5,191.6 L1141.6,192.4 L1143.8,193.3 L1146.2,194.2 L1148.6,195.0 L1150.9,195.6 L1152.9,196.1 L1154.6,196.3 L1155.9,196.2 L1157.0,195.7 L1157.8,195.0 L1158.5,194.1 L1159.2,193.3 L1159.9,192.6 L1160.7,192.3 L1161.8,192.4 L1163.1,193.2 L1164.6,194.4 L1166.1,195.8 L1167.7,197.3 L1169.4,198.6 L1171.0,199.7 L1172.4,200.4 L1173.8,200.9 L1175.1,201.0 L1176.3,201.0 L1177.5,200.9 L1178.6,200.7 L1179.7,200.4 L1180.6,200.2 L1181.4,199.9 L1181.4,300 L719.4,300 Z" fill="#292932" stroke="none"/><path d="M719.4,132.9 L721.1,139.2 L723.0,144.2 L725.1,148.8 L727.4,153.0 L729.8,156.8 L732.3,159.9 L734.8,162.4 L737.3,164.2 L739.8,165.3 L742.3,165.1 L744.7,163.7 L747.2,161.4 L749.7,158.5 L752.3,155.6 L755.0,153.2 L757.8,151.7 L760.8,151.7 L764.0,153.6 L767.5,157.1 L771.1,161.4 L774.8,166.0 L778.6,170.3 L782.2,173.7 L785.7,176.1 L788.9,177.0 L791.9,176.3 L794.7,174.0 L797.4,170.7 L800.0,166.5 L802.5,162.2 L805.0,158.2 L807.4,155.4 L809.9,154.4 L812.4,155.7 L814.9,158.9 L817.3,163.2 L819.7,167.8 L822.1,172.1 L824.3,175.7 L826.5,178.1 L828.6,179.0 L830.5,178.2 L832.3,175.9 L833.9,172.4 L835.5,168.3 L837.1,163.8 L838.7,159.7 L840.4,156.6 L842.2,155.4 L844.2,156.4 L846.3,159.3 L848.5,163.2 L850.8,167.5 L853.0,171.6 L855.1,175.0 L857.2,177.3 L859.0,178.1 L860.6,177.2 L862.1,174.7 L863.5,171.0 L864.8,166.7 L866.0,162.1 L867.2,158.2 L868.5,155.7 L869.9,155.4 L871.3,157.9 L872.8,162.5 L874.3,168.3 L875.8,174.4 L877.3,179.9 L878.8,184.5 L880.3,187.7 L881.9,189.4 L883.5,189.6 L885.1,188.8 L886.8,187.2 L888.5,185.0 L890.2,182.5 L891.9,180.2 L893.5,178.6 L895.1,178.1 L896.7,179.0 L898.2,180.9 L899.8,183.4 L901.3,186.0 L902.8,188.4 L904.3,190.4 L905.7,191.8 L907.1,192.4 L908.4,192.2 L909.7,191.3 L910.9,189.9 L912.1,188.1 L913.2,186.2 L914.4,184.4 L915.5,182.9 L916.7,182.2 L917.9,182.4 L919.1,183.2 L920.4,184.5 L921.6,185.9 L922.8,187.2 L924.0,188.4 L925.2,189.2 L926.3,189.4 L927.4,188.8 L928.4,187.5 L929.4,185.7 L930.4,183.7 L931.4,181.7 L932.5,180.2 L933.5,179.6 L934.7,180.2 L935.9,182.4 L937.0,185.7 L938.1,189.6 L939.3,193.3 L940.5,196.5 L942.0,198.9 L943.6,200.6 L945.5,201.5 L947.7,202.1 L950.3,202.5 L953.2,202.7 L956.1,202.8 L959.1,202.9 L962.0,202.9 L964.8,202.7 L967.2,202.4 L969.4,201.5 L971.4,199.5 L973.3,196.1 L975.2,191.1 L976.9,185.0 L978.5,178.4 L980.1,172.6 L981.6,168.9 L983.0,167.7 L984.3,168.5 L985.4,170.9 L986.6,174.1 L987.6,177.7 L988.7,181.1 L989.9,183.9 L991.2,186.0 L992.6,187.5 L994.0,188.8 L995.5,190.0 L997.1,191.1 L998.6,192.2 L1000.1,193.2 L1001.7,194.1 L1003.2,195.1 L1004.7,196.1 L1006.1,197.2 L1007.6,198.3 L1009.1,199.3 L1010.5,200.0 L1012.0,200.5 L1013.6,200.8 L1015.2,200.9 L1016.9,200.5 L1018.7,199.8 L1020.5,198.6 L1022.4,197.1 L1024.3,195.3 L1026.1,193.5 L1027.9,191.9 L1029.6,190.9 L1031.3,190.7 L1032.9,191.1 L1034.6,191.8 L1036.2,192.8 L1037.7,193.7 L1039.2,194.5 L1040.5,195.0 L1041.6,195.1 L1042.5,194.7 L1043.3,193.9 L1043.9,192.9 L1044.4,191.6 L1044.9,190.3 L1045.4,189.1 L1045.8,188.1 L1046.4,187.7 L1046.9,188.0 L1047.4,189.0 L1047.8,190.2 L1048.2,191.6 L1048.8,192.8 L1049.4,193.7 L1050.2,194.1 L1051.3,193.8 L1052.7,192.6 L1054.3,190.5 L1056.1,187.5 L1058.1,183.9 L1060.1,180.0 L1062.0,176.2 L1063.9,173.1 L1065.7,171.3 L1067.3,171.1 L1068.9,172.1 L1070.5,174.0 L1072.0,176.4 L1073.5,178.8 L1074.9,181.1 L1076.3,182.9 L1077.7,184.1 L1079.0,184.7 L1080.2,184.7 L1081.3,184.5 L1082.3,184.1 L1083.5,183.9 L1084.6,184.0 L1085.9,184.7 L1087.3,186.0 L1088.9,188.3 L1090.7,191.3 L1092.6,194.5 L1094.5,197.3 L1096.4,199.5 L1098.3,201.0 L1100.1,201.8 L1101.7,202.0 L1103.1,201.8 L1104.2,201.1 L1105.2,199.8 L1106.2,197.8 L1107.2,195.3 L1108.3,192.4 L1109.7,189.7 L1111.3,187.7 L1113.3,186.6 L1115.7,186.0 L1118.3,185.9 L1121.0,186.1 L1123.7,186.5 L1126.3,187.0 L1128.6,187.4 L1130.5,187.7 L1131.9,188.0 L1132.9,188.3 L1133.7,188.6 L1134.3,189.0 L1134.9,189.4 L1135.6,189.9 L1136.5,190.4 L1137.8,190.9 L1139.5,191.6 L1141.6,192.4 L1143.8,193.3 L1146.2,194.2 L1148.6,195.0 L1150.9,195.6 L1152.9,196.1 L1154.6,196.3 L1155.9,196.2 L1157.0,195.7 L1157.8,195.0 L1158.5,194.1 L1159.2,193.3 L1159.9,192.6 L1160.7,192.3 L1161.8,192.4 L1163.1,193.2 L1164.6,194.4 L1166.1,195.8 L1167.7,197.3 L1169.4,198.6 L1171.0,199.7 L1172.4,200.4 L1173.8,200.9 L1175.1,201.0 L1176.3,201.0 L1177.5,200.9 L1178.6,200.7 L1179.7,200.4 L1180.6,200.2 L1181.4,199.9" fill="none" stroke="rgba(128,131,139,0.40)" stroke-width="1.3" stroke-linejoin="round"/><path d="M698.4,152.1 L700.1,157.8 L702.0,162.4 L704.1,166.6 L706.4,170.5 L708.8,173.8 L711.3,176.7 L713.8,179.0 L716.3,180.6 L718.8,181.6 L721.3,181.5 L723.7,180.2 L726.2,178.0 L728.7,175.5 L731.3,172.8 L734.0,170.6 L736.8,169.2 L739.8,169.2 L743.0,171.0 L746.5,174.1 L750.1,178.1 L753.8,182.3 L757.6,186.1 L761.2,189.3 L764.7,191.5 L767.9,192.3 L770.9,191.6 L773.7,189.6 L776.4,186.5 L779.0,182.8 L781.5,178.8 L784.0,175.2 L786.4,172.6 L788.9,171.7 L791.4,172.9 L793.9,175.8 L796.3,179.7 L798.7,183.9 L801.1,187.9 L803.3,191.1 L805.5,193.3 L807.6,194.1 L809.5,193.4 L811.3,191.3 L812.9,188.1 L814.5,184.3 L816.1,180.2 L817.7,176.5 L819.4,173.7 L821.2,172.6 L823.2,173.5 L825.3,176.2 L827.5,179.7 L829.8,183.7 L832.0,187.4 L834.1,190.5 L836.2,192.5 L838.0,193.3 L839.6,192.5 L841.1,190.2 L842.5,186.9 L843.8,182.9 L845.0,178.7 L846.2,175.1 L847.5,172.8 L848.9,172.6 L850.3,174.8 L851.8,179.1 L853.3,184.4 L854.8,189.9 L856.3,195.0 L857.8,199.1 L859.3,202.0 L860.9,203.6 L862.5,203.8 L864.1,203.1 L865.8,201.6 L867.5,199.6 L869.2,197.3 L870.9,195.2 L872.5,193.7 L874.1,193.3 L875.7,194.1 L877.2,195.9 L878.8,198.1 L880.3,200.5 L881.8,202.7 L883.3,204.5 L884.7,205.8 L886.1,206.3 L887.4,206.2 L888.7,205.3 L889.9,204.1 L891.1,202.5 L892.2,200.7 L893.4,199.0 L894.5,197.7 L895.7,197.1 L896.9,197.2 L898.1,198.0 L899.4,199.1 L900.6,200.4 L901.8,201.6 L903.0,202.7 L904.2,203.4 L905.3,203.6 L906.4,203.1 L907.4,201.9 L908.4,200.2 L909.4,198.4 L910.4,196.6 L911.5,195.2 L912.5,194.6 L913.7,195.2 L914.9,197.2 L916.0,200.3 L917.1,203.7 L918.3,207.1 L919.5,210.0 L921.0,212.3 L922.6,213.8 L924.5,214.7 L926.7,215.2 L929.3,215.5 L932.2,215.7 L935.1,215.8 L938.1,215.9 L941.0,215.9 L943.8,215.8 L946.2,215.5 L948.4,214.7 L950.4,212.9 L952.3,209.7 L954.2,205.2 L955.9,199.6 L957.5,193.6 L959.1,188.3 L960.6,184.9 L962.0,183.8 L963.3,184.6 L964.4,186.7 L965.6,189.6 L966.6,192.9 L967.7,196.0 L968.9,198.6 L970.2,200.5 L971.6,201.8 L973.0,203.0 L974.5,204.2 L976.1,205.2 L977.6,206.1 L979.1,207.0 L980.7,207.9 L982.2,208.8 L983.7,209.7 L985.1,210.7 L986.6,211.7 L988.1,212.6 L989.5,213.3 L991.0,213.8 L992.6,214.0 L994.2,214.0 L995.9,213.7 L997.7,213.0 L999.5,212.0 L1001.4,210.6 L1003.3,209.0 L1005.1,207.3 L1006.9,205.9 L1008.6,205.0 L1010.3,204.8 L1011.9,205.1 L1013.6,205.8 L1015.2,206.7 L1016.7,207.5 L1018.2,208.2 L1019.5,208.7 L1020.6,208.8 L1021.5,208.4 L1022.3,207.7 L1022.9,206.8 L1023.4,205.6 L1023.9,204.4 L1024.4,203.3 L1024.8,202.5 L1025.4,202.1 L1025.9,202.3 L1026.4,203.2 L1026.8,204.4 L1027.2,205.6 L1027.8,206.7 L1028.4,207.5 L1029.2,207.9 L1030.3,207.6 L1031.7,206.5 L1033.3,204.6 L1035.1,201.9 L1037.1,198.6 L1039.1,195.0 L1041.0,191.5 L1042.9,188.7 L1044.7,187.1 L1046.3,186.9 L1047.9,187.9 L1049.5,189.6 L1051.0,191.7 L1052.5,193.9 L1053.9,196.0 L1055.3,197.7 L1056.7,198.8 L1058.0,199.3 L1059.2,199.3 L1060.3,199.1 L1061.3,198.8 L1062.5,198.6 L1063.6,198.7 L1064.9,199.3 L1066.3,200.5 L1067.9,202.6 L1069.7,205.3 L1071.6,208.2 L1073.5,210.8 L1075.4,212.8 L1077.3,214.1 L1079.1,214.9 L1080.7,215.1 L1082.1,214.9 L1083.2,214.3 L1084.2,213.1 L1085.2,211.3 L1086.2,208.9 L1087.3,206.3 L1088.7,203.9 L1090.3,202.1 L1092.3,201.1 L1094.7,200.5 L1097.3,200.4 L1100.0,200.6 L1102.7,200.9 L1105.3,201.4 L1107.6,201.8 L1109.5,202.1 L1110.9,202.3 L1111.9,202.6 L1112.7,202.9 L1113.3,203.2 L1113.9,203.6 L1114.6,204.0 L1115.5,204.5 L1116.8,205.0 L1118.5,205.6 L1120.6,206.4 L1122.8,207.2 L1125.2,208.0 L1127.6,208.7 L1129.9,209.3 L1131.9,209.7 L1133.6,209.9 L1134.9,209.8 L1136.0,209.3 L1136.8,208.7 L1137.5,207.9 L1138.2,207.1 L1138.9,206.5 L1139.7,206.2 L1140.8,206.3 L1142.1,207.0 L1143.6,208.1 L1145.1,209.5 L1146.7,210.8 L1148.4,212.0 L1150.0,213.0 L1151.4,213.6 L1152.8,214.0 L1154.1,214.2 L1155.3,214.2 L1156.5,214.1 L1157.6,213.9 L1158.7,213.7 L1159.6,213.4 L1160.4,213.2 L1160.4,300 L698.4,300 Z" fill="#292932" stroke="none"/><path d="M698.4,152.1 L700.1,157.8 L702.0,162.4 L704.1,166.6 L706.4,170.5 L708.8,173.8 L711.3,176.7 L713.8,179.0 L716.3,180.6 L718.8,181.6 L721.3,181.5 L723.7,180.2 L726.2,178.0 L728.7,175.5 L731.3,172.8 L734.0,170.6 L736.8,169.2 L739.8,169.2 L743.0,171.0 L746.5,174.1 L750.1,178.1 L753.8,182.3 L757.6,186.1 L761.2,189.3 L764.7,191.5 L767.9,192.3 L770.9,191.6 L773.7,189.6 L776.4,186.5 L779.0,182.8 L781.5,178.8 L784.0,175.2 L786.4,172.6 L788.9,171.7 L791.4,172.9 L793.9,175.8 L796.3,179.7 L798.7,183.9 L801.1,187.9 L803.3,191.1 L805.5,193.3 L807.6,194.1 L809.5,193.4 L811.3,191.3 L812.9,188.1 L814.5,184.3 L816.1,180.2 L817.7,176.5 L819.4,173.7 L821.2,172.6 L823.2,173.5 L825.3,176.2 L827.5,179.7 L829.8,183.7 L832.0,187.4 L834.1,190.5 L836.2,192.5 L838.0,193.3 L839.6,192.5 L841.1,190.2 L842.5,186.9 L843.8,182.9 L845.0,178.7 L846.2,175.1 L847.5,172.8 L848.9,172.6 L850.3,174.8 L851.8,179.1 L853.3,184.4 L854.8,189.9 L856.3,195.0 L857.8,199.1 L859.3,202.0 L860.9,203.6 L862.5,203.8 L864.1,203.1 L865.8,201.6 L867.5,199.6 L869.2,197.3 L870.9,195.2 L872.5,193.7 L874.1,193.3 L875.7,194.1 L877.2,195.9 L878.8,198.1 L880.3,200.5 L881.8,202.7 L883.3,204.5 L884.7,205.8 L886.1,206.3 L887.4,206.2 L888.7,205.3 L889.9,204.1 L891.1,202.5 L892.2,200.7 L893.4,199.0 L894.5,197.7 L895.7,197.1 L896.9,197.2 L898.1,198.0 L899.4,199.1 L900.6,200.4 L901.8,201.6 L903.0,202.7 L904.2,203.4 L905.3,203.6 L906.4,203.1 L907.4,201.9 L908.4,200.2 L909.4,198.4 L910.4,196.6 L911.5,195.2 L912.5,194.6 L913.7,195.2 L914.9,197.2 L916.0,200.3 L917.1,203.7 L918.3,207.1 L919.5,210.0 L921.0,212.3 L922.6,213.8 L924.5,214.7 L926.7,215.2 L929.3,215.5 L932.2,215.7 L935.1,215.8 L938.1,215.9 L941.0,215.9 L943.8,215.8 L946.2,215.5 L948.4,214.7 L950.4,212.9 L952.3,209.7 L954.2,205.2 L955.9,199.6 L957.5,193.6 L959.1,188.3 L960.6,184.9 L962.0,183.8 L963.3,184.6 L964.4,186.7 L965.6,189.6 L966.6,192.9 L967.7,196.0 L968.9,198.6 L970.2,200.5 L971.6,201.8 L973.0,203.0 L974.5,204.2 L976.1,205.2 L977.6,206.1 L979.1,207.0 L980.7,207.9 L982.2,208.8 L983.7,209.7 L985.1,210.7 L986.6,211.7 L988.1,212.6 L989.5,213.3 L991.0,213.8 L992.6,214.0 L994.2,214.0 L995.9,213.7 L997.7,213.0 L999.5,212.0 L1001.4,210.6 L1003.3,209.0 L1005.1,207.3 L1006.9,205.9 L1008.6,205.0 L1010.3,204.8 L1011.9,205.1 L1013.6,205.8 L1015.2,206.7 L1016.7,207.5 L1018.2,208.2 L1019.5,208.7 L1020.6,208.8 L1021.5,208.4 L1022.3,207.7 L1022.9,206.8 L1023.4,205.6 L1023.9,204.4 L1024.4,203.3 L1024.8,202.5 L1025.4,202.1 L1025.9,202.3 L1026.4,203.2 L1026.8,204.4 L1027.2,205.6 L1027.8,206.7 L1028.4,207.5 L1029.2,207.9 L1030.3,207.6 L1031.7,206.5 L1033.3,204.6 L1035.1,201.9 L1037.1,198.6 L1039.1,195.0 L1041.0,191.5 L1042.9,188.7 L1044.7,187.1 L1046.3,186.9 L1047.9,187.9 L1049.5,189.6 L1051.0,191.7 L1052.5,193.9 L1053.9,196.0 L1055.3,197.7 L1056.7,198.8 L1058.0,199.3 L1059.2,199.3 L1060.3,199.1 L1061.3,198.8 L1062.5,198.6 L1063.6,198.7 L1064.9,199.3 L1066.3,200.5 L1067.9,202.6 L1069.7,205.3 L1071.6,208.2 L1073.5,210.8 L1075.4,212.8 L1077.3,214.1 L1079.1,214.9 L1080.7,215.1 L1082.1,214.9 L1083.2,214.3 L1084.2,213.1 L1085.2,211.3 L1086.2,208.9 L1087.3,206.3 L1088.7,203.9 L1090.3,202.1 L1092.3,201.1 L1094.7,200.5 L1097.3,200.4 L1100.0,200.6 L1102.7,200.9 L1105.3,201.4 L1107.6,201.8 L1109.5,202.1 L1110.9,202.3 L1111.9,202.6 L1112.7,202.9 L1113.3,203.2 L1113.9,203.6 L1114.6,204.0 L1115.5,204.5 L1116.8,205.0 L1118.5,205.6 L1120.6,206.4 L1122.8,207.2 L1125.2,208.0 L1127.6,208.7 L1129.9,209.3 L1131.9,209.7 L1133.6,209.9 L1134.9,209.8 L1136.0,209.3 L1136.8,208.7 L1137.5,207.9 L1138.2,207.1 L1138.9,206.5 L1139.7,206.2 L1140.8,206.3 L1142.1,207.0 L1143.6,208.1 L1145.1,209.5 L1146.7,210.8 L1148.4,212.0 L1150.0,213.0 L1151.4,213.6 L1152.8,214.0 L1154.1,214.2 L1155.3,214.2 L1156.5,214.1 L1157.6,213.9 L1158.7,213.7 L1159.6,213.4 L1160.4,213.2" fill="none" stroke="rgba(128,131,139,0.44)" stroke-width="1.3" stroke-linejoin="round"/><path d="M677.4,171.3 L679.1,176.5 L681.0,180.5 L683.1,184.4 L685.4,187.9 L687.8,190.9 L690.3,193.5 L692.8,195.6 L695.3,197.1 L697.8,197.9 L700.3,197.8 L702.7,196.6 L705.2,194.7 L707.7,192.4 L710.3,190.0 L713.0,188.0 L715.8,186.7 L718.8,186.7 L722.0,188.3 L725.5,191.2 L729.1,194.8 L732.8,198.5 L736.6,202.0 L740.2,204.9 L743.7,206.8 L746.9,207.6 L749.9,207.0 L752.7,205.2 L755.4,202.4 L758.0,199.0 L760.5,195.4 L763.0,192.1 L765.4,189.8 L767.9,189.0 L770.4,190.1 L772.9,192.7 L775.3,196.2 L777.7,200.0 L780.1,203.6 L782.3,206.5 L784.5,208.5 L786.6,209.2 L788.5,208.6 L790.3,206.7 L791.9,203.8 L793.5,200.4 L795.1,196.7 L796.7,193.3 L798.4,190.8 L800.2,189.8 L802.2,190.6 L804.3,193.0 L806.5,196.2 L808.8,199.8 L811.0,203.2 L813.1,205.9 L815.2,207.8 L817.0,208.5 L818.6,207.7 L820.1,205.7 L821.5,202.7 L822.8,199.1 L824.0,195.3 L825.2,192.1 L826.5,190.0 L827.9,189.8 L829.3,191.8 L830.8,195.7 L832.3,200.5 L833.8,205.4 L835.3,210.0 L836.8,213.7 L838.3,216.4 L839.9,217.8 L841.5,218.0 L843.1,217.3 L844.8,216.0 L846.5,214.1 L848.2,212.1 L849.9,210.3 L851.5,208.9 L853.1,208.5 L854.7,209.3 L856.2,210.8 L857.8,212.8 L859.3,215.0 L860.8,217.0 L862.3,218.6 L863.7,219.8 L865.1,220.3 L866.4,220.1 L867.7,219.4 L868.9,218.2 L870.1,216.8 L871.2,215.2 L872.4,213.7 L873.5,212.5 L874.7,211.9 L875.9,212.0 L877.1,212.7 L878.4,213.7 L879.6,214.9 L880.8,216.0 L882.0,217.0 L883.2,217.6 L884.3,217.8 L885.4,217.3 L886.4,216.3 L887.4,214.8 L888.4,213.1 L889.4,211.4 L890.5,210.2 L891.5,209.7 L892.7,210.2 L893.9,212.1 L895.0,214.8 L896.1,217.9 L897.3,221.0 L898.5,223.6 L900.0,225.6 L901.6,227.0 L903.5,227.8 L905.7,228.2 L908.3,228.6 L911.2,228.8 L914.1,228.9 L917.1,228.9 L920.0,228.9 L922.8,228.8 L925.2,228.5 L927.4,227.8 L929.4,226.2 L931.3,223.3 L933.2,219.2 L934.9,214.2 L936.5,208.8 L938.1,204.0 L939.6,200.9 L941.0,199.9 L942.3,200.6 L943.4,202.5 L944.6,205.2 L945.6,208.1 L946.7,210.9 L947.9,213.3 L949.2,215.0 L950.6,216.2 L952.0,217.3 L953.5,218.3 L955.1,219.2 L956.6,220.1 L958.1,220.9 L959.7,221.7 L961.2,222.5 L962.7,223.3 L964.1,224.2 L965.6,225.1 L967.1,225.9 L968.5,226.5 L970.0,227.0 L971.6,227.2 L973.2,227.2 L974.9,227.0 L976.7,226.3 L978.5,225.4 L980.4,224.1 L982.3,222.6 L984.1,221.2 L985.9,219.9 L987.6,219.1 L989.3,218.9 L990.9,219.2 L992.6,219.8 L994.2,220.6 L995.7,221.3 L997.2,222.0 L998.5,222.4 L999.6,222.5 L1000.5,222.2 L1001.3,221.5 L1001.9,220.7 L1002.4,219.6 L1002.9,218.5 L1003.4,217.5 L1003.8,216.8 L1004.4,216.4 L1004.9,216.7 L1005.4,217.4 L1005.8,218.5 L1006.3,219.6 L1006.8,220.6 L1007.4,221.3 L1008.2,221.6 L1009.3,221.4 L1010.7,220.5 L1012.3,218.7 L1014.1,216.3 L1016.1,213.3 L1018.1,210.0 L1020.0,206.9 L1021.9,204.4 L1023.7,202.9 L1025.3,202.7 L1026.9,203.6 L1028.5,205.1 L1030.0,207.1 L1031.5,209.1 L1032.9,211.0 L1034.3,212.5 L1035.7,213.5 L1037.0,213.9 L1038.2,213.9 L1039.3,213.7 L1040.3,213.5 L1041.5,213.3 L1042.6,213.4 L1043.9,213.9 L1045.3,215.0 L1046.9,216.9 L1048.7,219.4 L1050.6,222.0 L1052.5,224.3 L1054.4,226.1 L1056.3,227.3 L1058.1,228.0 L1059.7,228.2 L1061.1,228.0 L1062.2,227.5 L1063.2,226.4 L1064.2,224.7 L1065.2,222.6 L1066.3,220.3 L1067.7,218.0 L1069.3,216.4 L1071.3,215.5 L1073.7,215.0 L1076.3,214.9 L1079.0,215.1 L1081.7,215.4 L1084.3,215.8 L1086.6,216.2 L1088.5,216.4 L1089.9,216.6 L1090.9,216.9 L1091.7,217.1 L1092.3,217.4 L1092.9,217.8 L1093.6,218.2 L1094.5,218.6 L1095.8,219.1 L1097.5,219.6 L1099.6,220.3 L1101.8,221.0 L1104.2,221.8 L1106.6,222.4 L1108.9,222.9 L1110.9,223.3 L1112.6,223.5 L1113.9,223.4 L1115.0,223.0 L1115.8,222.4 L1116.5,221.7 L1117.2,221.0 L1117.9,220.4 L1118.7,220.2 L1119.8,220.3 L1121.1,220.9 L1122.6,221.9 L1124.1,223.1 L1125.7,224.3 L1127.4,225.4 L1129.0,226.2 L1130.4,226.9 L1131.8,227.2 L1133.1,227.4 L1134.3,227.4 L1135.5,227.3 L1136.6,227.1 L1137.7,226.9 L1138.6,226.7 L1139.4,226.5 L1139.4,300 L677.4,300 Z" fill="#292932" stroke="none"/><path d="M677.4,171.3 L679.1,176.5 L681.0,180.5 L683.1,184.4 L685.4,187.9 L687.8,190.9 L690.3,193.5 L692.8,195.6 L695.3,197.1 L697.8,197.9 L700.3,197.8 L702.7,196.6 L705.2,194.7 L707.7,192.4 L710.3,190.0 L713.0,188.0 L715.8,186.7 L718.8,186.7 L722.0,188.3 L725.5,191.2 L729.1,194.8 L732.8,198.5 L736.6,202.0 L740.2,204.9 L743.7,206.8 L746.9,207.6 L749.9,207.0 L752.7,205.2 L755.4,202.4 L758.0,199.0 L760.5,195.4 L763.0,192.1 L765.4,189.8 L767.9,189.0 L770.4,190.1 L772.9,192.7 L775.3,196.2 L777.7,200.0 L780.1,203.6 L782.3,206.5 L784.5,208.5 L786.6,209.2 L788.5,208.6 L790.3,206.7 L791.9,203.8 L793.5,200.4 L795.1,196.7 L796.7,193.3 L798.4,190.8 L800.2,189.8 L802.2,190.6 L804.3,193.0 L806.5,196.2 L808.8,199.8 L811.0,203.2 L813.1,205.9 L815.2,207.8 L817.0,208.5 L818.6,207.7 L820.1,205.7 L821.5,202.7 L822.8,199.1 L824.0,195.3 L825.2,192.1 L826.5,190.0 L827.9,189.8 L829.3,191.8 L830.8,195.7 L832.3,200.5 L833.8,205.4 L835.3,210.0 L836.8,213.7 L838.3,216.4 L839.9,217.8 L841.5,218.0 L843.1,217.3 L844.8,216.0 L846.5,214.1 L848.2,212.1 L849.9,210.3 L851.5,208.9 L853.1,208.5 L854.7,209.3 L856.2,210.8 L857.8,212.8 L859.3,215.0 L860.8,217.0 L862.3,218.6 L863.7,219.8 L865.1,220.3 L866.4,220.1 L867.7,219.4 L868.9,218.2 L870.1,216.8 L871.2,215.2 L872.4,213.7 L873.5,212.5 L874.7,211.9 L875.9,212.0 L877.1,212.7 L878.4,213.7 L879.6,214.9 L880.8,216.0 L882.0,217.0 L883.2,217.6 L884.3,217.8 L885.4,217.3 L886.4,216.3 L887.4,214.8 L888.4,213.1 L889.4,211.4 L890.5,210.2 L891.5,209.7 L892.7,210.2 L893.9,212.1 L895.0,214.8 L896.1,217.9 L897.3,221.0 L898.5,223.6 L900.0,225.6 L901.6,227.0 L903.5,227.8 L905.7,228.2 L908.3,228.6 L911.2,228.8 L914.1,228.9 L917.1,228.9 L920.0,228.9 L922.8,228.8 L925.2,228.5 L927.4,227.8 L929.4,226.2 L931.3,223.3 L933.2,219.2 L934.9,214.2 L936.5,208.8 L938.1,204.0 L939.6,200.9 L941.0,199.9 L942.3,200.6 L943.4,202.5 L944.6,205.2 L945.6,208.1 L946.7,210.9 L947.9,213.3 L949.2,215.0 L950.6,216.2 L952.0,217.3 L953.5,218.3 L955.1,219.2 L956.6,220.1 L958.1,220.9 L959.7,221.7 L961.2,222.5 L962.7,223.3 L964.1,224.2 L965.6,225.1 L967.1,225.9 L968.5,226.5 L970.0,227.0 L971.6,227.2 L973.2,227.2 L974.9,227.0 L976.7,226.3 L978.5,225.4 L980.4,224.1 L982.3,222.6 L984.1,221.2 L985.9,219.9 L987.6,219.1 L989.3,218.9 L990.9,219.2 L992.6,219.8 L994.2,220.6 L995.7,221.3 L997.2,222.0 L998.5,222.4 L999.6,222.5 L1000.5,222.2 L1001.3,221.5 L1001.9,220.7 L1002.4,219.6 L1002.9,218.5 L1003.4,217.5 L1003.8,216.8 L1004.4,216.4 L1004.9,216.7 L1005.4,217.4 L1005.8,218.5 L1006.3,219.6 L1006.8,220.6 L1007.4,221.3 L1008.2,221.6 L1009.3,221.4 L1010.7,220.5 L1012.3,218.7 L1014.1,216.3 L1016.1,213.3 L1018.1,210.0 L1020.0,206.9 L1021.9,204.4 L1023.7,202.9 L1025.3,202.7 L1026.9,203.6 L1028.5,205.1 L1030.0,207.1 L1031.5,209.1 L1032.9,211.0 L1034.3,212.5 L1035.7,213.5 L1037.0,213.9 L1038.2,213.9 L1039.3,213.7 L1040.3,213.5 L1041.5,213.3 L1042.6,213.4 L1043.9,213.9 L1045.3,215.0 L1046.9,216.9 L1048.7,219.4 L1050.6,222.0 L1052.5,224.3 L1054.4,226.1 L1056.3,227.3 L1058.1,228.0 L1059.7,228.2 L1061.1,228.0 L1062.2,227.5 L1063.2,226.4 L1064.2,224.7 L1065.2,222.6 L1066.3,220.3 L1067.7,218.0 L1069.3,216.4 L1071.3,215.5 L1073.7,215.0 L1076.3,214.9 L1079.0,215.1 L1081.7,215.4 L1084.3,215.8 L1086.6,216.2 L1088.5,216.4 L1089.9,216.6 L1090.9,216.9 L1091.7,217.1 L1092.3,217.4 L1092.9,217.8 L1093.6,218.2 L1094.5,218.6 L1095.8,219.1 L1097.5,219.6 L1099.6,220.3 L1101.8,221.0 L1104.2,221.8 L1106.6,222.4 L1108.9,222.9 L1110.9,223.3 L1112.6,223.5 L1113.9,223.4 L1115.0,223.0 L1115.8,222.4 L1116.5,221.7 L1117.2,221.0 L1117.9,220.4 L1118.7,220.2 L1119.8,220.3 L1121.1,220.9 L1122.6,221.9 L1124.1,223.1 L1125.7,224.3 L1127.4,225.4 L1129.0,226.2 L1130.4,226.9 L1131.8,227.2 L1133.1,227.4 L1134.3,227.4 L1135.5,227.3 L1136.6,227.1 L1137.7,226.9 L1138.6,226.7 L1139.4,226.5" fill="none" stroke="rgba(128,131,139,0.48)" stroke-width="1.3" stroke-linejoin="round"/>
<path d="M422.0,246.4 C428.6,245.0 447.4,241.1 461.8,238.2 C476.2,235.3 496.6,232.0 508.5,229.0 C520.4,226.0 525.9,224.1 533.0,220.0 C540.1,215.9 546.1,210.2 551.0,204.5 C555.9,198.8 558.5,187.0 562.3,185.6 C566.1,184.2 570.1,193.7 574.0,196.2 C577.9,198.7 580.9,200.0 585.6,200.8 C590.3,201.7 596.1,200.6 602.0,201.3 C607.9,202.0 615.2,205.1 620.7,205.0 C626.2,204.9 630.2,205.0 634.7,200.8 C639.2,196.6 643.7,180.2 647.6,179.8 C651.5,179.4 653.2,193.6 658.1,198.5 C663.0,203.4 670.2,208.2 676.8,209.0 C683.4,209.8 689.6,202.2 697.8,203.2 C706.0,204.2 717.7,214.7 725.9,214.9 C734.1,215.1 740.3,204.1 746.9,204.3 C753.5,204.5 760.2,215.9 765.6,216.0 C771.0,216.1 774.1,204.8 779.2,204.7 C784.3,204.6 791.4,215.5 796.0,215.5 C800.6,215.5 803.1,203.5 806.9,204.7 C810.7,205.9 814.7,220.9 818.9,222.7 C823.1,224.5 827.9,215.1 832.1,215.5 C836.3,215.9 840.5,224.7 844.1,225.1 C847.7,225.5 850.5,218.3 853.7,217.9 C856.9,217.5 860.3,222.9 863.3,222.7 C866.3,222.5 868.5,214.5 871.7,216.7 C874.9,218.9 877.1,232.4 882.5,236.0 C887.9,239.6 898.2,242.5 904.2,238.3 C910.2,234.1 914.6,213.7 918.6,210.7 C922.6,207.7 924.6,217.5 928.2,220.3 C931.8,223.1 936.2,225.1 940.2,227.5 C944.2,229.9 947.8,235.3 952.2,234.7 C956.6,234.1 962.2,225.1 966.6,223.9 C971.0,222.7 975.8,227.9 978.6,227.5 C981.4,227.1 981.8,221.7 983.4,221.5 C985.0,221.3 985.1,227.9 988.3,226.3 C991.5,224.7 998.3,213.1 1002.7,211.9 C1007.1,210.7 1011.1,217.7 1014.7,219.1 C1018.3,220.5 1020.3,217.3 1024.3,220.3 C1028.3,223.3 1034.7,237.0 1038.7,237.2 C1042.7,237.4 1043.5,224.1 1048.3,221.5 C1053.1,218.9 1063.1,221.1 1067.5,221.5 C1071.9,221.9 1070.8,222.7 1074.8,223.9 C1078.8,225.1 1087.6,228.5 1091.6,228.7 C1095.6,228.9 1095.6,224.1 1098.8,225.1 C1102.0,226.1 1107.4,233.4 1110.8,234.7 C1114.2,236.0 1117.6,233.3 1119.0,233.0 L1119,274 L421,274 Z" fill="url(#spg)"/>
<path d="M422.0,246.4 C428.6,245.0 447.4,241.1 461.8,238.2 C476.2,235.3 496.6,232.0 508.5,229.0 C520.4,226.0 525.9,224.1 533.0,220.0 C540.1,215.9 546.1,210.2 551.0,204.5 C555.9,198.8 558.5,187.0 562.3,185.6 C566.1,184.2 570.1,193.7 574.0,196.2 C577.9,198.7 580.9,200.0 585.6,200.8 C590.3,201.7 596.1,200.6 602.0,201.3 C607.9,202.0 615.2,205.1 620.7,205.0 C626.2,204.9 630.2,205.0 634.7,200.8 C639.2,196.6 643.7,180.2 647.6,179.8 C651.5,179.4 653.2,193.6 658.1,198.5 C663.0,203.4 670.2,208.2 676.8,209.0 C683.4,209.8 689.6,202.2 697.8,203.2 C706.0,204.2 717.7,214.7 725.9,214.9 C734.1,215.1 740.3,204.1 746.9,204.3 C753.5,204.5 760.2,215.9 765.6,216.0 C771.0,216.1 774.1,204.8 779.2,204.7 C784.3,204.6 791.4,215.5 796.0,215.5 C800.6,215.5 803.1,203.5 806.9,204.7 C810.7,205.9 814.7,220.9 818.9,222.7 C823.1,224.5 827.9,215.1 832.1,215.5 C836.3,215.9 840.5,224.7 844.1,225.1 C847.7,225.5 850.5,218.3 853.7,217.9 C856.9,217.5 860.3,222.9 863.3,222.7 C866.3,222.5 868.5,214.5 871.7,216.7 C874.9,218.9 877.1,232.4 882.5,236.0 C887.9,239.6 898.2,242.5 904.2,238.3 C910.2,234.1 914.6,213.7 918.6,210.7 C922.6,207.7 924.6,217.5 928.2,220.3 C931.8,223.1 936.2,225.1 940.2,227.5 C944.2,229.9 947.8,235.3 952.2,234.7 C956.6,234.1 962.2,225.1 966.6,223.9 C971.0,222.7 975.8,227.9 978.6,227.5 C981.4,227.1 981.8,221.7 983.4,221.5 C985.0,221.3 985.1,227.9 988.3,226.3 C991.5,224.7 998.3,213.1 1002.7,211.9 C1007.1,210.7 1011.1,217.7 1014.7,219.1 C1018.3,220.5 1020.3,217.3 1024.3,220.3 C1028.3,223.3 1034.7,237.0 1038.7,237.2 C1042.7,237.4 1043.5,224.1 1048.3,221.5 C1053.1,218.9 1063.1,221.1 1067.5,221.5 C1071.9,221.9 1070.8,222.7 1074.8,223.9 C1078.8,225.1 1087.6,228.5 1091.6,228.7 C1095.6,228.9 1095.6,224.1 1098.8,225.1 C1102.0,226.1 1107.4,233.4 1110.8,234.7 C1114.2,236.0 1117.6,233.3 1119.0,233.0" fill="none" stroke="#9486f2" stroke-width="1.8"/>
<rect x="421" y="160.2" width="698" height="1.7" fill="#a9aeb6"/>
</g>
<rect x="421.5" y="114.5" width="697" height="158.5" rx="9" fill="none" stroke="rgba(140,148,158,.5)" stroke-width="1"/>
</svg>
<div class="a" style="left:989.5px;top:122.3px;width:121px;height:30.5px;border-radius:9px;border:1.2px solid #555a63;background:rgba(42,43,50,.85)"></div>
<svg class="a" style="left:1001px;top:128px;overflow:visible;" width="29" height="20" viewBox="0 0 29 20"><path d="M0.30,10.70 L2.70,10.70 C3.75,10.70 3.75,8.00 4.80,8.00 C5.85,8.00 5.85,10.90 6.90,10.90 C9.35,10.90 9.35,2.10 11.80,2.10 C13.55,2.10 13.55,18.20 15.30,18.20 C17.25,18.20 17.25,7.30 19.20,7.30 C20.95,7.30 20.95,14.30 22.70,14.30 C23.95,14.30 23.95,10.70 25.20,10.70 L28.70,10.70" fill="none" stroke="#978af4" stroke-width="2" stroke-linecap="round" stroke-linejoin="round"/></svg>
<div class="a" style="left:1039px;top:128px;width:1.2px;height:20px;background:#5a5f68"></div>
<svg class="a" style="left:1051px;top:128px;overflow:visible;" width="18" height="20" viewBox="0 0 18 20"><g transform="translate(1.1,1.2) scale(0.87)"><g fill="none" stroke="#e0e3e8" stroke-width="1.6" stroke-linejoin="round"><path d="M8.5,1 L15.8,5.2 V13.6 L8.5,17.8 L1.1,13.6 V5.2 Z"/><path d="M1.1,5.2 L8.5,9.4 L15.8,5.2 M8.5,9.4 V17.8"/></g><g fill="#e0e3e8"><circle cx="8.5" cy="3.4" r=".85"/><circle cx="5.6" cy="5.2" r=".85"/><circle cx="11.4" cy="5.2" r=".85"/><circle cx="8.5" cy="6.9" r=".85"/><circle cx="4.6" cy="12.3" r="1"/><circle cx="12.6" cy="10.6" r=".9"/><circle cx="11.2" cy="13.9" r=".9"/></g></g></svg>
<svg class="a" style="left:1078px;top:126px;overflow:visible;" width="20" height="20" viewBox="0 0 20 20"><path d="M5.95,3.41 L7.91,5.37 L5.37,7.91 L3.41,5.95 A5.3,5.3 0 0 0 10.05,13.17 L14.24,17.36 A2.2,2.2 0 0 0 17.36,14.24 L13.17,10.05 A5.3,5.3 0 0 0 5.95,3.41 Z" fill="none" stroke="#e0e3e8" stroke-width="1.6" stroke-linejoin="round"/></svg>
<div class="dark" style="left:1128.5px;top:113.3px;width:188.5px;height:43px;background:linear-gradient(#2c2e35,#2a2c32);border:1.5px solid #8f96a1;border-radius:9px;overflow:hidden"></div>
<svg class="a" style="left:1129px;top:113.5px;overflow:visible;" width="188" height="42.5" viewBox="0 0 188 42.5"><defs><clipPath id="frc"><rect x="1" y="1" width="186" height="40.5" rx="8"/></clipPath></defs><g clip-path="url(#frc)" fill="none" stroke="rgba(125,131,141,.42)" stroke-width="1.4" stroke-linejoin="round"><path d="M12.9,4.1 L10.2,11.8 L1.7,12.1 M10.2,11.8 L14.6,21.2 L10.2,30.6 L1.7,30.6 M10.2,30.6 L14,38.9 L22.3,40 M12.9,4.1 L22.3,3 M14.6,21.2 H34.6 M28.2,14.7 L23.5,21.2 L28.8,28.3"/><path d="M 175.1,4.1 L 177.8,11.8 L 186.3,12.1 M 177.8,11.8 L 173.4,21.2 L 177.8,30.6 L 186.3,30.6 M 177.8,30.6 L 174.0,38.9 L 165.7,40 M 175.1,4.1 L 165.7,3 M 173.4,21.2 H 153.4 M 159.8,14.7 L 164.5,21.2 L 159.2,28.3"/></g></svg>
<svg class="a" style="left:1182.5px;top:123.5px;overflow:visible;" width="21" height="21" viewBox="0 0 21 21"><g fill="none" stroke="#eceef2" stroke-width="1.6" stroke-linecap="round" stroke-linejoin="round"><g transform="rotate(0 10.5 10.5)"><line x1="10.5" y1="10.5" x2="10.5" y2="0.8"/><path d="M7.8,2.8 L10.5,5 L13.2,2.8"/></g><g transform="rotate(60 10.5 10.5)"><line x1="10.5" y1="10.5" x2="10.5" y2="0.8"/><path d="M7.8,2.8 L10.5,5 L13.2,2.8"/></g><g transform="rotate(120 10.5 10.5)"><line x1="10.5" y1="10.5" x2="10.5" y2="0.8"/><path d="M7.8,2.8 L10.5,5 L13.2,2.8"/></g><g transform="rotate(180 10.5 10.5)"><line x1="10.5" y1="10.5" x2="10.5" y2="0.8"/><path d="M7.8,2.8 L10.5,5 L13.2,2.8"/></g><g transform="rotate(240 10.5 10.5)"><line x1="10.5" y1="10.5" x2="10.5" y2="0.8"/><path d="M7.8,2.8 L10.5,5 L13.2,2.8"/></g><g transform="rotate(300 10.5 10.5)"><line x1="10.5" y1="10.5" x2="10.5" y2="0.8"/><path d="M7.8,2.8 L10.5,5 L13.2,2.8"/></g></g><circle cx="10.5" cy="10.5" r="3" fill="#2b2d34" stroke="#eceef2" stroke-width="1.5"/></svg>
<div class="t" style="left:1214.00px;top:127.28px;font-size:14px;color:#eceef2;font-weight:bold;">Freeze</div>
<div class="t" style="left:1146.40px;top:181.73px;font-size:11.8px;color:#e4e6ea;font-weight:bold;">Retrigger</div>
<div class="a" style="left:1222.9px;top:181.6px;width:26.3px;height:17px;background:#353a43;border-radius:4px"></div>
<div class="t" style="left:1036.05px;width:400px;text-align:center;top:185.77px;font-size:11.8px;color:#eef0f3;font-weight:bold;">Off</div>
<div class="t" style="left:1181.00px;top:211.43px;font-size:11.8px;color:#e4e6ea;font-weight:bold;">Rate</div>
<div class="a" style="left:1222.9px;top:208.4px;width:57.6px;height:17.2px;background:#353a43;border-radius:4px"></div>
<div class="t" style="left:1051.70px;width:400px;text-align:center;top:212.67px;font-size:11.8px;color:#eef0f3;font-weight:bold;">5.00 sec</div>
<div class="t" style="left:1180.00px;top:239.33px;font-size:11.8px;color:#e4e6ea;font-weight:bold;">Sync</div>
<div class="a" style="left:1222.9px;top:235.2px;width:26.3px;height:17.2px;background:#353a43;border-radius:4px"></div>
<div class="t" style="left:1036.05px;width:400px;text-align:center;top:239.47px;font-size:11.8px;color:#eef0f3;font-weight:bold;">Off</div>
<svg class="a" style="left:1158.5px;top:200px;overflow:visible;" width="14" height="47" viewBox="0 0 14 47"><path d="M1,0 V16 C1,16.5 1.5,17 2,17 H13 M1,16 V43.5 C1,44.5 2,45.5 3,45.5 H13" fill="none" stroke="rgba(160,167,176,.5)" stroke-width="1.2"/></svg>
<div class="a" style="left:265.60px;top:285.60px;width:102px;height:102px">
<div class="a kb" style="left:19px;top:19px;width:64px;height:64px;box-shadow:0 4px 9px rgba(12,14,18,.5)"></div>
<svg class="a" style="left:0;top:0" width="102" height="102"><defs><linearGradient id="kb1" x1="0.3" y1="0" x2="0.7" y2="1"><stop offset="0" stop-color="#474b53"/><stop offset="1" stop-color="#383b42"/></linearGradient></defs><circle cx="51" cy="51" r="32" fill="url(#kb1)"/><circle cx="51" cy="51" r="31.4" fill="none" stroke="rgba(130,137,147,.2)" stroke-width="1"/><circle cx="51" cy="51" r="28.2" fill="#32353c"/></svg>
<div class="a" style="left:26px;top:26px;width:50px;height:50px;border-radius:50%;background:conic-gradient(from 0deg,#4a4f58 0deg,#626872 40deg,#474c55 95deg,#3a3e46 150deg,#585e67 215deg,#3e434b 280deg,#4a4f58 360deg)"></div>
<svg class="a" style="left:0;top:0" width="102" height="102"><defs><linearGradient id="kr1" x1="0.15" y1="0.1" x2="0.85" y2="0.9"><stop offset="0" stop-color="rgba(200,206,216,.5)"/><stop offset=".55" stop-color="rgba(110,115,125,.35)"/><stop offset="1" stop-color="rgba(135,122,235,.7)"/></linearGradient></defs><circle cx="51" cy="51" r="24.5" fill="none" stroke="url(#kr1)" stroke-width="1.1"/></svg>
<svg class="a" style="left:0;top:0" width="102" height="102"><defs><linearGradient id="ka1" gradientUnits="userSpaceOnUse" x1="76.2" y1="18.7" x2="80.0" y2="80.0"><stop offset="0" stop-color="#b9bec5"/><stop offset="1" stop-color="#80878f"/></linearGradient></defs><path d="M22.01,79.99 A41,41 0 0 1 76.24,18.69" fill="none" stroke="#eceef1" stroke-width="2.3" stroke-linecap="round"/><path d="M76.24,18.69 A41,41 0 0 1 79.99,79.99" fill="none" stroke="url(#ka1)" stroke-width="2.3" stroke-linecap="round"/><line x1="71.01" y1="25.39" x2="76.86" y2="17.90" stroke="#eceef1" stroke-width="2.3"/><line x1="59.62" y1="39.97" x2="63.62" y2="34.85" stroke="#eceef2" stroke-width="3.6" stroke-linecap="round"/></svg>
</div>
<div class="a" style="left:400.90px;top:305.50px;width:84px;height:84px">
<div class="a kb" style="left:18px;top:18px;width:48px;height:48px;box-shadow:0 4px 9px rgba(12,14,18,.5)"></div>
<svg class="a" style="left:0;top:0" width="84" height="84"><defs><linearGradient id="kb2" x1="0.3" y1="0" x2="0.7" y2="1"><stop offset="0" stop-color="#3b3f47"/><stop offset="1" stop-color="#2a2d33"/></linearGradient></defs><circle cx="42" cy="42" r="24" fill="url(#kb2)"/><circle cx="42" cy="42" r="23" fill="none" stroke="rgba(150,157,167,.68)" stroke-width="1"/></svg>
<div class="a" style="left:22.5px;top:22.5px;width:39px;height:39px;background:conic-gradient(from 0deg,#4a4f58 0deg,#626872 40deg,#474c55 95deg,#3a3e46 150deg,#585e67 215deg,#3e434b 280deg,#4a4f58 360deg);clip-path:path('M37.50,19.50 L37.49,20.21 L37.44,20.91 L37.38,21.62 L37.28,22.32 L37.15,23.01 L37.00,23.70 L36.82,24.39 L36.30,24.96 L35.53,25.42 L35.11,25.97 L35.02,26.66 L35.24,27.52 L35.20,28.30 L34.85,28.90 L34.47,29.50 L34.06,30.08 L33.64,30.64 L33.19,31.19 L32.72,31.72 L32.23,32.23 L31.72,32.72 L31.19,33.19 L30.64,33.64 L30.08,34.06 L29.50,34.47 L28.90,34.85 L28.30,35.20 L27.52,35.24 L26.66,35.02 L25.97,35.11 L25.42,35.53 L24.96,36.30 L24.39,36.82 L23.70,37.00 L23.01,37.15 L22.32,37.28 L21.62,37.38 L20.91,37.44 L20.21,37.49 L19.50,37.50 L18.79,37.49 L18.09,37.44 L17.38,37.38 L16.68,37.28 L15.99,37.15 L15.30,37.00 L14.61,36.82 L14.04,36.30 L13.58,35.53 L13.03,35.11 L12.34,35.02 L11.48,35.24 L10.70,35.20 L10.10,34.85 L9.50,34.47 L8.92,34.06 L8.36,33.64 L7.81,33.19 L7.28,32.72 L6.77,32.23 L6.28,31.72 L5.81,31.19 L5.36,30.64 L4.94,30.08 L4.53,29.50 L4.15,28.90 L3.80,28.30 L3.76,27.52 L3.98,26.66 L3.89,25.97 L3.47,25.42 L2.70,24.96 L2.18,24.39 L2.00,23.70 L1.85,23.01 L1.72,22.32 L1.62,21.62 L1.56,20.91 L1.51,20.21 L1.50,19.50 L1.51,18.79 L1.56,18.09 L1.62,17.38 L1.72,16.68 L1.85,15.99 L2.00,15.30 L2.18,14.61 L2.70,14.04 L3.47,13.58 L3.89,13.03 L3.98,12.34 L3.76,11.48 L3.80,10.70 L4.15,10.10 L4.53,9.50 L4.94,8.92 L5.36,8.36 L5.81,7.81 L6.28,7.28 L6.77,6.77 L7.28,6.28 L7.81,5.81 L8.36,5.36 L8.92,4.94 L9.50,4.53 L10.10,4.15 L10.70,3.80 L11.48,3.76 L12.34,3.98 L13.03,3.89 L13.58,3.47 L14.04,2.70 L14.61,2.18 L15.30,2.00 L15.99,1.85 L16.68,1.72 L17.38,1.62 L18.09,1.56 L18.79,1.51 L19.50,1.50 L20.21,1.51 L20.91,1.56 L21.62,1.62 L22.32,1.72 L23.01,1.85 L23.70,2.00 L24.39,2.18 L24.96,2.70 L25.42,3.47 L25.97,3.89 L26.66,3.98 L27.52,3.76 L28.30,3.80 L28.90,4.15 L29.50,4.53 L30.08,4.94 L30.64,5.36 L31.19,5.81 L31.72,6.28 L32.23,6.77 L32.72,7.28 L33.19,7.81 L33.64,8.36 L34.06,8.92 L34.47,9.50 L34.85,10.10 L35.20,10.70 L35.24,11.48 L35.02,12.34 L35.11,13.03 L35.53,13.58 L36.30,14.04 L36.82,14.61 L37.00,15.30 L37.15,15.99 L37.28,16.68 L37.38,17.38 L37.44,18.09 L37.49,18.79 Z')"></div>
<svg class="a" style="left:22.5px;top:22.5px" width="39" height="39"><defs><linearGradient id="kr2" x1="0.15" y1="0.1" x2="0.85" y2="0.9"><stop offset="0" stop-color="rgba(200,206,216,.55)"/><stop offset=".5" stop-color="rgba(90,95,105,.3)"/><stop offset="1" stop-color="rgba(140,125,240,.95)"/></linearGradient></defs><path d="M37.50,19.50 L37.49,20.21 L37.44,20.91 L37.38,21.62 L37.28,22.32 L37.15,23.01 L37.00,23.70 L36.82,24.39 L36.30,24.96 L35.53,25.42 L35.11,25.97 L35.02,26.66 L35.24,27.52 L35.20,28.30 L34.85,28.90 L34.47,29.50 L34.06,30.08 L33.64,30.64 L33.19,31.19 L32.72,31.72 L32.23,32.23 L31.72,32.72 L31.19,33.19 L30.64,33.64 L30.08,34.06 L29.50,34.47 L28.90,34.85 L28.30,35.20 L27.52,35.24 L26.66,35.02 L25.97,35.11 L25.42,35.53 L24.96,36.30 L24.39,36.82 L23.70,37.00 L23.01,37.15 L22.32,37.28 L21.62,37.38 L20.91,37.44 L20.21,37.49 L19.50,37.50 L18.79,37.49 L18.09,37.44 L17.38,37.38 L16.68,37.28 L15.99,37.15 L15.30,37.00 L14.61,36.82 L14.04,36.30 L13.58,35.53 L13.03,35.11 L12.34,35.02 L11.48,35.24 L10.70,35.20 L10.10,34.85 L9.50,34.47 L8.92,34.06 L8.36,33.64 L7.81,33.19 L7.28,32.72 L6.77,32.23 L6.28,31.72 L5.81,31.19 L5.36,30.64 L4.94,30.08 L4.53,29.50 L4.15,28.90 L3.80,28.30 L3.76,27.52 L3.98,26.66 L3.89,25.97 L3.47,25.42 L2.70,24.96 L2.18,24.39 L2.00,23.70 L1.85,23.01 L1.72,22.32 L1.62,21.62 L1.56,20.91 L1.51,20.21 L1.50,19.50 L1.51,18.79 L1.56,18.09 L1.62,17.38 L1.72,16.68 L1.85,15.99 L2.00,15.30 L2.18,14.61 L2.70,14.04 L3.47,13.58 L3.89,13.03 L3.98,12.34 L3.76,11.48 L3.80,10.70 L4.15,10.10 L4.53,9.50 L4.94,8.92 L5.36,8.36 L5.81,7.81 L6.28,7.28 L6.77,6.77 L7.28,6.28 L7.81,5.81 L8.36,5.36 L8.92,4.94 L9.50,4.53 L10.10,4.15 L10.70,3.80 L11.48,3.76 L12.34,3.98 L13.03,3.89 L13.58,3.47 L14.04,2.70 L14.61,2.18 L15.30,2.00 L15.99,1.85 L16.68,1.72 L17.38,1.62 L18.09,1.56 L18.79,1.51 L19.50,1.50 L20.21,1.51 L20.91,1.56 L21.62,1.62 L22.32,1.72 L23.01,1.85 L23.70,2.00 L24.39,2.18 L24.96,2.70 L25.42,3.47 L25.97,3.89 L26.66,3.98 L27.52,3.76 L28.30,3.80 L28.90,4.15 L29.50,4.53 L30.08,4.94 L30.64,5.36 L31.19,5.81 L31.72,6.28 L32.23,6.77 L32.72,7.28 L33.19,7.81 L33.64,8.36 L34.06,8.92 L34.47,9.50 L34.85,10.10 L35.20,10.70 L35.24,11.48 L35.02,12.34 L35.11,13.03 L35.53,13.58 L36.30,14.04 L36.82,14.61 L37.00,15.30 L37.15,15.99 L37.28,16.68 L37.38,17.38 L37.44,18.09 L37.49,18.79 Z" fill="none" stroke="url(#kr2)" stroke-width="1.1"/></svg>
<svg class="a" style="left:0;top:0" width="84" height="84"><defs><linearGradient id="ka2" gradientUnits="userSpaceOnUse" x1="58.0" y1="14.3" x2="64.6" y2="64.6"><stop offset="0" stop-color="#b9bec5"/><stop offset="1" stop-color="#80878f"/></linearGradient></defs><path d="M19.37,64.63 A32,32 0 0 1 58.00,14.29" fill="none" stroke="#eceef1" stroke-width="2.15" stroke-linecap="round"/><path d="M58.00,14.29 A32,32 0 0 1 64.63,64.63" fill="none" stroke="url(#ka2)" stroke-width="2.15" stroke-linecap="round"/><line x1="52.75" y1="23.38" x2="58.40" y2="13.59" stroke="#eceef1" stroke-width="2.15"/><line x1="45.10" y1="36.63" x2="48.60" y2="30.57" stroke="#eceef2" stroke-width="3.0" stroke-linecap="round"/></svg>
</div>
<div class="a" style="left:518.50px;top:328.50px;width:64.4px;height:64.4px">
<div class="a kb" style="left:15.600000000000001px;top:15.600000000000001px;width:33.2px;height:33.2px;box-shadow:0 3px 6px rgba(12,14,18,.5)"></div>
<svg class="a" style="left:0;top:0" width="64.4" height="64.4"><defs><linearGradient id="kb3" x1="0.3" y1="0" x2="0.7" y2="1"><stop offset="0" stop-color="#3c4048"/><stop offset="1" stop-color="#26292e"/></linearGradient></defs><circle cx="32.2" cy="32.2" r="16.6" fill="url(#kb3)" stroke="#8c929a" stroke-width="1.1"/></svg>
<div class="a" style="left:21.200000000000003px;top:21.200000000000003px;width:22px;height:22px;border-radius:50%;background:conic-gradient(from 0deg,#4a4f58 0deg,#626872 40deg,#474c55 95deg,#3a3e46 150deg,#585e67 215deg,#3e434b 280deg,#4a4f58 360deg)"></div>
<svg class="a" style="left:0;top:0" width="64.4" height="64.4"><defs><linearGradient id="kr3" x1="0.15" y1="0.1" x2="0.85" y2="0.9"><stop offset="0" stop-color="rgba(200,206,216,.5)"/><stop offset=".55" stop-color="rgba(110,115,125,.35)"/><stop offset="1" stop-color="rgba(135,122,235,.7)"/></linearGradient></defs><circle cx="32.2" cy="32.2" r="10.5" fill="none" stroke="url(#kr3)" stroke-width="1.1"/></svg>
<svg class="a" style="left:0;top:0" width="64.4" height="64.4"><defs><linearGradient id="ka3" gradientUnits="userSpaceOnUse" x1="43.3" y1="13.0" x2="47.9" y2="47.9"><stop offset="0" stop-color="#b9bec5"/><stop offset="1" stop-color="#80878f"/></linearGradient></defs><path d="M16.50,47.90 A22.2,22.2 0 0 1 43.30,12.97" fill="none" stroke="#eceef1" stroke-width="2.05" stroke-linecap="round"/><path d="M43.30,12.97 A22.2,22.2 0 0 1 47.90,47.90" fill="none" stroke="url(#ka3)" stroke-width="2.05" stroke-linecap="round"/><line x1="39.70" y1="19.21" x2="43.65" y2="12.37" stroke="#eceef1" stroke-width="2.05"/><line x1="35.00" y1="27.35" x2="37.30" y2="23.37" stroke="#eceef2" stroke-width="2.4" stroke-linecap="round"/></svg>
</div>
<div class="a" style="left:719.20px;top:285.80px;width:102px;height:102px">
<div class="a kb" style="left:19px;top:19px;width:64px;height:64px;box-shadow:0 4px 9px rgba(12,14,18,.5)"></div>
<svg class="a" style="left:0;top:0" width="102" height="102"><defs><linearGradient id="kb4" x1="0.3" y1="0" x2="0.7" y2="1"><stop offset="0" stop-color="#474b53"/><stop offset="1" stop-color="#383b42"/></linearGradient></defs><circle cx="51" cy="51" r="32" fill="url(#kb4)"/><circle cx="51" cy="51" r="31.4" fill="none" stroke="rgba(130,137,147,.2)" stroke-width="1"/><circle cx="51" cy="51" r="28.2" fill="#32353c"/></svg>
<div class="a" style="left:26px;top:26px;width:50px;height:50px;border-radius:50%;background:conic-gradient(from 0deg,#4a4f58 0deg,#626872 40deg,#474c55 95deg,#3a3e46 150deg,#585e67 215deg,#3e434b 280deg,#4a4f58 360deg)"></div>
<svg class="a" style="left:0;top:0" width="102" height="102"><defs><linearGradient id="kr4" x1="0.15" y1="0.1" x2="0.85" y2="0.9"><stop offset="0" stop-color="rgba(200,206,216,.5)"/><stop offset=".55" stop-color="rgba(110,115,125,.35)"/><stop offset="1" stop-color="rgba(135,122,235,.7)"/></linearGradient></defs><circle cx="51" cy="51" r="24.5" fill="none" stroke="url(#kr4)" stroke-width="1.1"/></svg>
<svg class="a" style="left:0;top:0" width="102" height="102"><defs><linearGradient id="ka4" gradientUnits="userSpaceOnUse" x1="76.2" y1="18.7" x2="80.0" y2="80.0"><stop offset="0" stop-color="#b9bec5"/><stop offset="1" stop-color="#80878f"/></linearGradient></defs><path d="M22.01,79.99 A41,41 0 0 1 76.24,18.69" fill="none" stroke="#eceef1" stroke-width="2.3" stroke-linecap="round"/><path d="M76.24,18.69 A41,41 0 0 1 79.99,79.99" fill="none" stroke="url(#ka4)" stroke-width="2.3" stroke-linecap="round"/><line x1="71.01" y1="25.39" x2="76.86" y2="17.90" stroke="#eceef1" stroke-width="2.3"/><line x1="59.62" y1="39.97" x2="63.62" y2="34.85" stroke="#eceef2" stroke-width="3.6" stroke-linecap="round"/></svg>
</div>
<div class="a" style="left:957.20px;top:328.10px;width:64.4px;height:64.4px">
<div class="a kb" style="left:15.600000000000001px;top:15.600000000000001px;width:33.2px;height:33.2px;box-shadow:0 3px 6px rgba(12,14,18,.5)"></div>
<svg class="a" style="left:0;top:0" width="64.4" height="64.4"><defs><linearGradient id="kb5" x1="0.3" y1="0" x2="0.7" y2="1"><stop offset="0" stop-color="#3c4048"/><stop offset="1" stop-color="#26292e"/></linearGradient></defs><circle cx="32.2" cy="32.2" r="16.6" fill="url(#kb5)" stroke="#8c929a" stroke-width="1.1"/></svg>
<div class="a" style="left:21.200000000000003px;top:21.200000000000003px;width:22px;height:22px;border-radius:50%;background:conic-gradient(from 0deg,#4a4f58 0deg,#626872 40deg,#474c55 95deg,#3a3e46 150deg,#585e67 215deg,#3e434b 280deg,#4a4f58 360deg)"></div>
<svg class="a" style="left:0;top:0" width="64.4" height="64.4"><defs><linearGradient id="kr5" x1="0.15" y1="0.1" x2="0.85" y2="0.9"><stop offset="0" stop-color="rgba(200,206,216,.5)"/><stop offset=".55" stop-color="rgba(110,115,125,.35)"/><stop offset="1" stop-color="rgba(135,122,235,.7)"/></linearGradient></defs><circle cx="32.2" cy="32.2" r="10.5" fill="none" stroke="url(#kr5)" stroke-width="1.1"/></svg>
<svg class="a" style="left:0;top:0" width="64.4" height="64.4"><defs><linearGradient id="ka5" gradientUnits="userSpaceOnUse" x1="43.3" y1="13.0" x2="47.9" y2="47.9"><stop offset="0" stop-color="#b9bec5"/><stop offset="1" stop-color="#80878f"/></linearGradient></defs><path d="M16.50,47.90 A22.2,22.2 0 0 1 43.30,12.97" fill="none" stroke="#eceef1" stroke-width="2.05" stroke-linecap="round"/><path d="M43.30,12.97 A22.2,22.2 0 0 1 47.90,47.90" fill="none" stroke="url(#ka5)" stroke-width="2.05" stroke-linecap="round"/><line x1="39.70" y1="19.21" x2="43.65" y2="12.37" stroke="#eceef1" stroke-width="2.05"/><line x1="35.00" y1="27.35" x2="37.30" y2="23.37" stroke="#eceef2" stroke-width="2.4" stroke-linecap="round"/></svg>
</div>
<div class="a" style="left:1055.00px;top:305.00px;width:84px;height:84px">
<div class="a kb" style="left:18px;top:18px;width:48px;height:48px;box-shadow:0 4px 9px rgba(12,14,18,.5)"></div>
<svg class="a" style="left:0;top:0" width="84" height="84"><defs><linearGradient id="kb6" x1="0.3" y1="0" x2="0.7" y2="1"><stop offset="0" stop-color="#3b3f47"/><stop offset="1" stop-color="#2a2d33"/></linearGradient></defs><circle cx="42" cy="42" r="24" fill="url(#kb6)"/><circle cx="42" cy="42" r="23" fill="none" stroke="rgba(150,157,167,.68)" stroke-width="1"/></svg>
<div class="a" style="left:22.5px;top:22.5px;width:39px;height:39px;background:conic-gradient(from 0deg,#4a4f58 0deg,#626872 40deg,#474c55 95deg,#3a3e46 150deg,#585e67 215deg,#3e434b 280deg,#4a4f58 360deg);clip-path:path('M37.50,19.50 L37.49,20.21 L37.44,20.91 L37.38,21.62 L37.28,22.32 L37.15,23.01 L37.00,23.70 L36.82,24.39 L36.30,24.96 L35.53,25.42 L35.11,25.97 L35.02,26.66 L35.24,27.52 L35.20,28.30 L34.85,28.90 L34.47,29.50 L34.06,30.08 L33.64,30.64 L33.19,31.19 L32.72,31.72 L32.23,32.23 L31.72,32.72 L31.19,33.19 L30.64,33.64 L30.08,34.06 L29.50,34.47 L28.90,34.85 L28.30,35.20 L27.52,35.24 L26.66,35.02 L25.97,35.11 L25.42,35.53 L24.96,36.30 L24.39,36.82 L23.70,37.00 L23.01,37.15 L22.32,37.28 L21.62,37.38 L20.91,37.44 L20.21,37.49 L19.50,37.50 L18.79,37.49 L18.09,37.44 L17.38,37.38 L16.68,37.28 L15.99,37.15 L15.30,37.00 L14.61,36.82 L14.04,36.30 L13.58,35.53 L13.03,35.11 L12.34,35.02 L11.48,35.24 L10.70,35.20 L10.10,34.85 L9.50,34.47 L8.92,34.06 L8.36,33.64 L7.81,33.19 L7.28,32.72 L6.77,32.23 L6.28,31.72 L5.81,31.19 L5.36,30.64 L4.94,30.08 L4.53,29.50 L4.15,28.90 L3.80,28.30 L3.76,27.52 L3.98,26.66 L3.89,25.97 L3.47,25.42 L2.70,24.96 L2.18,24.39 L2.00,23.70 L1.85,23.01 L1.72,22.32 L1.62,21.62 L1.56,20.91 L1.51,20.21 L1.50,19.50 L1.51,18.79 L1.56,18.09 L1.62,17.38 L1.72,16.68 L1.85,15.99 L2.00,15.30 L2.18,14.61 L2.70,14.04 L3.47,13.58 L3.89,13.03 L3.98,12.34 L3.76,11.48 L3.80,10.70 L4.15,10.10 L4.53,9.50 L4.94,8.92 L5.36,8.36 L5.81,7.81 L6.28,7.28 L6.77,6.77 L7.28,6.28 L7.81,5.81 L8.36,5.36 L8.92,4.94 L9.50,4.53 L10.10,4.15 L10.70,3.80 L11.48,3.76 L12.34,3.98 L13.03,3.89 L13.58,3.47 L14.04,2.70 L14.61,2.18 L15.30,2.00 L15.99,1.85 L16.68,1.72 L17.38,1.62 L18.09,1.56 L18.79,1.51 L19.50,1.50 L20.21,1.51 L20.91,1.56 L21.62,1.62 L22.32,1.72 L23.01,1.85 L23.70,2.00 L24.39,2.18 L24.96,2.70 L25.42,3.47 L25.97,3.89 L26.66,3.98 L27.52,3.76 L28.30,3.80 L28.90,4.15 L29.50,4.53 L30.08,4.94 L30.64,5.36 L31.19,5.81 L31.72,6.28 L32.23,6.77 L32.72,7.28 L33.19,7.81 L33.64,8.36 L34.06,8.92 L34.47,9.50 L34.85,10.10 L35.20,10.70 L35.24,11.48 L35.02,12.34 L35.11,13.03 L35.53,13.58 L36.30,14.04 L36.82,14.61 L37.00,15.30 L37.15,15.99 L37.28,16.68 L37.38,17.38 L37.44,18.09 L37.49,18.79 Z')"></div>
<svg class="a" style="left:22.5px;top:22.5px" width="39" height="39"><defs><linearGradient id="kr6" x1="0.15" y1="0.1" x2="0.85" y2="0.9"><stop offset="0" stop-color="rgba(200,206,216,.55)"/><stop offset=".5" stop-color="rgba(90,95,105,.3)"/><stop offset="1" stop-color="rgba(140,125,240,.95)"/></linearGradient></defs><path d="M37.50,19.50 L37.49,20.21 L37.44,20.91 L37.38,21.62 L37.28,22.32 L37.15,23.01 L37.00,23.70 L36.82,24.39 L36.30,24.96 L35.53,25.42 L35.11,25.97 L35.02,26.66 L35.24,27.52 L35.20,28.30 L34.85,28.90 L34.47,29.50 L34.06,30.08 L33.64,30.64 L33.19,31.19 L32.72,31.72 L32.23,32.23 L31.72,32.72 L31.19,33.19 L30.64,33.64 L30.08,34.06 L29.50,34.47 L28.90,34.85 L28.30,35.20 L27.52,35.24 L26.66,35.02 L25.97,35.11 L25.42,35.53 L24.96,36.30 L24.39,36.82 L23.70,37.00 L23.01,37.15 L22.32,37.28 L21.62,37.38 L20.91,37.44 L20.21,37.49 L19.50,37.50 L18.79,37.49 L18.09,37.44 L17.38,37.38 L16.68,37.28 L15.99,37.15 L15.30,37.00 L14.61,36.82 L14.04,36.30 L13.58,35.53 L13.03,35.11 L12.34,35.02 L11.48,35.24 L10.70,35.20 L10.10,34.85 L9.50,34.47 L8.92,34.06 L8.36,33.64 L7.81,33.19 L7.28,32.72 L6.77,32.23 L6.28,31.72 L5.81,31.19 L5.36,30.64 L4.94,30.08 L4.53,29.50 L4.15,28.90 L3.80,28.30 L3.76,27.52 L3.98,26.66 L3.89,25.97 L3.47,25.42 L2.70,24.96 L2.18,24.39 L2.00,23.70 L1.85,23.01 L1.72,22.32 L1.62,21.62 L1.56,20.91 L1.51,20.21 L1.50,19.50 L1.51,18.79 L1.56,18.09 L1.62,17.38 L1.72,16.68 L1.85,15.99 L2.00,15.30 L2.18,14.61 L2.70,14.04 L3.47,13.58 L3.89,13.03 L3.98,12.34 L3.76,11.48 L3.80,10.70 L4.15,10.10 L4.53,9.50 L4.94,8.92 L5.36,8.36 L5.81,7.81 L6.28,7.28 L6.77,6.77 L7.28,6.28 L7.81,5.81 L8.36,5.36 L8.92,4.94 L9.50,4.53 L10.10,4.15 L10.70,3.80 L11.48,3.76 L12.34,3.98 L13.03,3.89 L13.58,3.47 L14.04,2.70 L14.61,2.18 L15.30,2.00 L15.99,1.85 L16.68,1.72 L17.38,1.62 L18.09,1.56 L18.79,1.51 L19.50,1.50 L20.21,1.51 L20.91,1.56 L21.62,1.62 L22.32,1.72 L23.01,1.85 L23.70,2.00 L24.39,2.18 L24.96,2.70 L25.42,3.47 L25.97,3.89 L26.66,3.98 L27.52,3.76 L28.30,3.80 L28.90,4.15 L29.50,4.53 L30.08,4.94 L30.64,5.36 L31.19,5.81 L31.72,6.28 L32.23,6.77 L32.72,7.28 L33.19,7.81 L33.64,8.36 L34.06,8.92 L34.47,9.50 L34.85,10.10 L35.20,10.70 L35.24,11.48 L35.02,12.34 L35.11,13.03 L35.53,13.58 L36.30,14.04 L36.82,14.61 L37.00,15.30 L37.15,15.99 L37.28,16.68 L37.38,17.38 L37.44,18.09 L37.49,18.79 Z" fill="none" stroke="url(#kr6)" stroke-width="1.1"/></svg>
<svg class="a" style="left:0;top:0" width="84" height="84"><defs><linearGradient id="ka6" gradientUnits="userSpaceOnUse" x1="58.0" y1="14.3" x2="64.6" y2="64.6"><stop offset="0" stop-color="#b9bec5"/><stop offset="1" stop-color="#80878f"/></linearGradient></defs><path d="M19.37,64.63 A32,32 0 0 1 58.00,14.29" fill="none" stroke="#eceef1" stroke-width="2.15" stroke-linecap="round"/><path d="M58.00,14.29 A32,32 0 0 1 64.63,64.63" fill="none" stroke="url(#ka6)" stroke-width="2.15" stroke-linecap="round"/><line x1="52.75" y1="23.38" x2="58.40" y2="13.59" stroke="#eceef1" stroke-width="2.15"/><line x1="45.10" y1="36.63" x2="48.60" y2="30.57" stroke="#eceef2" stroke-width="3.0" stroke-linecap="round"/></svg>
</div>
<div class="a" style="left:1172.50px;top:286.00px;width:102px;height:102px">
<div class="a kb" style="left:19px;top:19px;width:64px;height:64px;box-shadow:0 4px 9px rgba(12,14,18,.5)"></div>
<svg class="a" style="left:0;top:0" width="102" height="102"><defs><linearGradient id="kb7" x1="0.3" y1="0" x2="0.7" y2="1"><stop offset="0" stop-color="#474b53"/><stop offset="1" stop-color="#383b42"/></linearGradient></defs><circle cx="51" cy="51" r="32" fill="url(#kb7)"/><circle cx="51" cy="51" r="31.4" fill="none" stroke="rgba(130,137,147,.2)" stroke-width="1"/><circle cx="51" cy="51" r="28.2" fill="#32353c"/></svg>
<div class="a" style="left:26px;top:26px;width:50px;height:50px;border-radius:50%;background:conic-gradient(from 0deg,#4a4f58 0deg,#626872 40deg,#474c55 95deg,#3a3e46 150deg,#585e67 215deg,#3e434b 280deg,#4a4f58 360deg)"></div>
<svg class="a" style="left:0;top:0" width="102" height="102"><defs><linearGradient id="kr7" x1="0.15" y1="0.1" x2="0.85" y2="0.9"><stop offset="0" stop-color="rgba(200,206,216,.5)"/><stop offset=".55" stop-color="rgba(110,115,125,.35)"/><stop offset="1" stop-color="rgba(135,122,235,.7)"/></linearGradient></defs><circle cx="51" cy="51" r="24.5" fill="none" stroke="url(#kr7)" stroke-width="1.1"/></svg>
<svg class="a" style="left:0;top:0" width="102" height="102"><defs><linearGradient id="ka7" gradientUnits="userSpaceOnUse" x1="76.2" y1="18.7" x2="80.0" y2="80.0"><stop offset="0" stop-color="#b9bec5"/><stop offset="1" stop-color="#80878f"/></linearGradient></defs><path d="M22.01,79.99 A41,41 0 0 1 76.24,18.69" fill="none" stroke="#eceef1" stroke-width="2.3" stroke-linecap="round"/><path d="M76.24,18.69 A41,41 0 0 1 79.99,79.99" fill="none" stroke="url(#ka7)" stroke-width="2.3" stroke-linecap="round"/><line x1="71.01" y1="25.39" x2="76.86" y2="17.90" stroke="#eceef1" stroke-width="2.3"/><line x1="59.62" y1="39.97" x2="63.62" y2="34.85" stroke="#eceef2" stroke-width="3.6" stroke-linecap="round"/></svg>
</div>
<svg class="a" style="left:0;top:0" width="1540" height="850"><g fill="#262a31"><circle cx="530.45" cy="306.70" r="1.1"/><circle cx="534.95" cy="306.70" r="1.1"/><circle cx="539.45" cy="306.70" r="1.1"/><circle cx="543.95" cy="306.70" r="1.1"/><circle cx="548.45" cy="306.70" r="1.1"/><circle cx="552.95" cy="306.70" r="1.1"/><circle cx="557.45" cy="306.70" r="1.1"/><circle cx="561.95" cy="306.70" r="1.1"/><circle cx="566.45" cy="306.70" r="1.1"/><circle cx="570.95" cy="306.70" r="1.1"/><circle cx="530.45" cy="311.25" r="1.1"/><circle cx="534.95" cy="311.25" r="1.1"/><circle cx="539.45" cy="311.25" r="1.1"/><circle cx="543.95" cy="311.25" r="1.1"/><circle cx="548.45" cy="311.25" r="1.1"/><circle cx="552.95" cy="311.25" r="1.1"/><circle cx="557.45" cy="311.25" r="1.1"/><circle cx="561.95" cy="311.25" r="1.1"/><circle cx="566.45" cy="311.25" r="1.1"/><circle cx="570.95" cy="311.25" r="1.1"/></g></svg>
<svg class="a" style="left:0;top:0" width="1540" height="850"><g fill="#262a31"><circle cx="969.25" cy="306.70" r="1.1"/><circle cx="973.75" cy="306.70" r="1.1"/><circle cx="978.25" cy="306.70" r="1.1"/><circle cx="982.75" cy="306.70" r="1.1"/><circle cx="987.25" cy="306.70" r="1.1"/><circle cx="991.75" cy="306.70" r="1.1"/><circle cx="996.25" cy="306.70" r="1.1"/><circle cx="1000.75" cy="306.70" r="1.1"/><circle cx="1005.25" cy="306.70" r="1.1"/><circle cx="1009.75" cy="306.70" r="1.1"/><circle cx="969.25" cy="311.25" r="1.1"/><circle cx="973.75" cy="311.25" r="1.1"/><circle cx="978.25" cy="311.25" r="1.1"/><circle cx="982.75" cy="311.25" r="1.1"/><circle cx="987.25" cy="311.25" r="1.1"/><circle cx="991.75" cy="311.25" r="1.1"/><circle cx="996.25" cy="311.25" r="1.1"/><circle cx="1000.75" cy="311.25" r="1.1"/><circle cx="1005.25" cy="311.25" r="1.1"/><circle cx="1009.75" cy="311.25" r="1.1"/></g></svg>
<div class="t" style="left:116.40px;width:400px;text-align:center;top:385.06px;font-size:11.6px;color:#e6e8ec;font-weight:bold;">Shape</div>
<div class="t" style="left:243.00px;width:400px;text-align:center;top:383.66px;font-size:11.6px;color:#e6e8ec;font-weight:bold;">Color</div>
<div class="t" style="left:350.50px;width:400px;text-align:center;top:386.26px;font-size:11.6px;color:#e6e8ec;font-weight:bold;">Width</div>
<div class="t" style="left:570.00px;width:400px;text-align:center;top:385.06px;font-size:11.6px;color:#e6e8ec;font-weight:bold;">Pitch</div>
<div class="t" style="left:789.40px;width:400px;text-align:center;top:386.26px;font-size:11.6px;color:#e6e8ec;font-weight:bold;">Blur</div>
<div class="t" style="left:897.00px;width:400px;text-align:center;top:383.26px;font-size:11.6px;color:#e6e8ec;font-weight:bold;">Formant</div>
<div class="t" style="left:1023.60px;width:400px;text-align:center;top:385.06px;font-size:11.6px;color:#e6e8ec;font-weight:bold;">Resolution</div>
<div class="a" style="left:224.5px;top:410.5px;width:356.5px;height:162px;border-radius:10px 10px 0 0;background:linear-gradient(#545d6a,#4a525e);box-shadow:inset 1px 0 0 rgba(130,137,147,.35), inset -1px 0 0 rgba(130,137,147,.35)"></div>
<div class="a" style="left:224.5px;top:410.5px;width:356.5px;height:38px;border-radius:10px 10px 0 0;background:#24272d;box-shadow:0 0 0 1px rgba(120,127,137,.35)"></div>
<div class="t" style="left:237.00px;top:422.58px;font-size:14px;color:#eceef2;font-weight:bold;">Voices</div>
<div class="a" style="left:294px;top:413px;width:70px;height:34px;border-radius:7px;background:linear-gradient(#5a616c,#4b515b)"></div>
<div class="t" style="left:-44.50px;width:400px;text-align:right;top:424.37px;font-size:12.2px;color:#bfc3cb;font-weight:bold;">Root</div>
<svg class="a" style="left:373.492px;top:421.492px;overflow:visible;" width="18.016" height="18.016" viewBox="0 0 18.016 18.016"><circle cx="9.01" cy="9.01" r="7.01" fill="none" stroke="#8f83f2" stroke-width="1.7"/><line x1="9.01" y1="5.15" x2="9.01" y2="12.86" stroke="#8f83f2" stroke-width="2.1"/></svg>
<div class="t" style="left:399.50px;top:424.37px;font-size:12.2px;color:#e6e8ec;font-weight:bold;">+3rd</div>
<svg class="a" style="left:444.992px;top:421.492px;overflow:visible;" width="18.016" height="18.016" viewBox="0 0 18.016 18.016"><circle cx="9.01" cy="9.01" r="7.01" fill="none" stroke="#8f83f2" stroke-width="1.7"/><line x1="9.01" y1="5.15" x2="9.01" y2="12.86" stroke="#8f83f2" stroke-width="2.1"/></svg>
<div class="t" style="left:468.75px;top:424.37px;font-size:12.2px;color:#e6e8ec;font-weight:bold;">+5th</div>
<svg class="a" style="left:516.8919999999999px;top:421.492px;overflow:visible;" width="18.016" height="18.016" viewBox="0 0 18.016 18.016"><circle cx="9.01" cy="9.01" r="7.01" fill="none" stroke="#8f83f2" stroke-width="1.7"/><line x1="9.01" y1="5.15" x2="9.01" y2="12.86" stroke="#8f83f2" stroke-width="2.1"/></svg>
<div class="t" style="left:542.00px;top:424.37px;font-size:12.2px;color:#e6e8ec;font-weight:bold;">+7th</div>
<svg class="a" style="left:0;top:0" width="1540" height="850"><g fill="#262a31"><circle cx="260.55" cy="469.20" r="1.1"/><circle cx="265.05" cy="469.20" r="1.1"/><circle cx="269.55" cy="469.20" r="1.1"/><circle cx="274.05" cy="469.20" r="1.1"/><circle cx="278.55" cy="469.20" r="1.1"/><circle cx="283.05" cy="469.20" r="1.1"/><circle cx="287.55" cy="469.20" r="1.1"/><circle cx="292.05" cy="469.20" r="1.1"/><circle cx="296.55" cy="469.20" r="1.1"/><circle cx="301.05" cy="469.20" r="1.1"/><circle cx="260.55" cy="473.75" r="1.1"/><circle cx="265.05" cy="473.75" r="1.1"/><circle cx="269.55" cy="473.75" r="1.1"/><circle cx="274.05" cy="473.75" r="1.1"/><circle cx="278.55" cy="473.75" r="1.1"/><circle cx="283.05" cy="473.75" r="1.1"/><circle cx="287.55" cy="473.75" r="1.1"/><circle cx="292.05" cy="473.75" r="1.1"/><circle cx="296.55" cy="473.75" r="1.1"/><circle cx="301.05" cy="473.75" r="1.1"/></g></svg>
<svg class="a" style="left:0;top:0" width="1540" height="850"><g fill="#262a31"><circle cx="365.55" cy="469.20" r="1.1"/><circle cx="370.05" cy="469.20" r="1.1"/><circle cx="374.55" cy="469.20" r="1.1"/><circle cx="379.05" cy="469.20" r="1.1"/><circle cx="383.55" cy="469.20" r="1.1"/><circle cx="388.05" cy="469.20" r="1.1"/><circle cx="392.55" cy="469.20" r="1.1"/><circle cx="397.05" cy="469.20" r="1.1"/><circle cx="401.55" cy="469.20" r="1.1"/><circle cx="406.05" cy="469.20" r="1.1"/><circle cx="365.55" cy="473.75" r="1.1"/><circle cx="370.05" cy="473.75" r="1.1"/><circle cx="374.55" cy="473.75" r="1.1"/><circle cx="379.05" cy="473.75" r="1.1"/><circle cx="383.55" cy="473.75" r="1.1"/><circle cx="388.05" cy="473.75" r="1.1"/><circle cx="392.55" cy="473.75" r="1.1"/><circle cx="397.05" cy="473.75" r="1.1"/><circle cx="401.55" cy="473.75" r="1.1"/><circle cx="406.05" cy="473.75" r="1.1"/></g></svg>
<div class="a" style="left:248.60px;top:483.00px;width:64.4px;height:64.4px">
<div class="a kb" style="left:15.600000000000001px;top:15.600000000000001px;width:33.2px;height:33.2px;box-shadow:0 3px 6px rgba(12,14,18,.5)"></div>
<svg class="a" style="left:0;top:0" width="64.4" height="64.4"><defs><linearGradient id="kb8" x1="0.3" y1="0" x2="0.7" y2="1"><stop offset="0" stop-color="#3c4048"/><stop offset="1" stop-color="#26292e"/></linearGradient></defs><circle cx="32.2" cy="32.2" r="16.6" fill="url(#kb8)" stroke="#8c929a" stroke-width="1.1"/></svg>
<div class="a" style="left:21.200000000000003px;top:21.200000000000003px;width:22px;height:22px;border-radius:50%;background:conic-gradient(from 0deg,#4a4f58 0deg,#626872 40deg,#474c55 95deg,#3a3e46 150deg,#585e67 215deg,#3e434b 280deg,#4a4f58 360deg)"></div>
<svg class="a" style="left:0;top:0" width="64.4" height="64.4"><defs><linearGradient id="kr8" x1="0.15" y1="0.1" x2="0.85" y2="0.9"><stop offset="0" stop-color="rgba(200,206,216,.5)"/><stop offset=".55" stop-color="rgba(110,115,125,.35)"/><stop offset="1" stop-color="rgba(135,122,235,.7)"/></linearGradient></defs><circle cx="32.2" cy="32.2" r="10.5" fill="none" stroke="url(#kr8)" stroke-width="1.1"/></svg>
<svg class="a" style="left:0;top:0" width="64.4" height="64.4"><defs><linearGradient id="ka8" gradientUnits="userSpaceOnUse" x1="43.3" y1="13.0" x2="47.9" y2="47.9"><stop offset="0" stop-color="#b9bec5"/><stop offset="1" stop-color="#80878f"/></linearGradient></defs><path d="M16.50,47.90 A22.2,22.2 0 0 1 43.30,12.97" fill="none" stroke="#eceef1" stroke-width="2.05" stroke-linecap="round"/><path d="M43.30,12.97 A22.2,22.2 0 0 1 47.90,47.90" fill="none" stroke="url(#ka8)" stroke-width="2.05" stroke-linecap="round"/><line x1="39.70" y1="19.21" x2="43.65" y2="12.37" stroke="#eceef1" stroke-width="2.05"/><line x1="35.00" y1="27.35" x2="37.30" y2="23.37" stroke="#eceef2" stroke-width="2.4" stroke-linecap="round"/></svg>
</div>
<div class="a" style="left:353.60px;top:483.00px;width:64.4px;height:64.4px">
<div class="a kb" style="left:15.600000000000001px;top:15.600000000000001px;width:33.2px;height:33.2px;box-shadow:0 3px 6px rgba(12,14,18,.5)"></div>
<svg class="a" style="left:0;top:0" width="64.4" height="64.4"><defs><linearGradient id="kb9" x1="0.3" y1="0" x2="0.7" y2="1"><stop offset="0" stop-color="#3c4048"/><stop offset="1" stop-color="#26292e"/></linearGradient></defs><circle cx="32.2" cy="32.2" r="16.6" fill="url(#kb9)" stroke="#8c929a" stroke-width="1.1"/></svg>
<div class="a" style="left:21.200000000000003px;top:21.200000000000003px;width:22px;height:22px;border-radius:50%;background:conic-gradient(from 0deg,#4a4f58 0deg,#626872 40deg,#474c55 95deg,#3a3e46 150deg,#585e67 215deg,#3e434b 280deg,#4a4f58 360deg)"></div>
<svg class="a" style="left:0;top:0" width="64.4" height="64.4"><defs><linearGradient id="kr9" x1="0.15" y1="0.1" x2="0.85" y2="0.9"><stop offset="0" stop-color="rgba(200,206,216,.5)"/><stop offset=".55" stop-color="rgba(110,115,125,.35)"/><stop offset="1" stop-color="rgba(135,122,235,.7)"/></linearGradient></defs><circle cx="32.2" cy="32.2" r="10.5" fill="none" stroke="url(#kr9)" stroke-width="1.1"/></svg>
<svg class="a" style="left:0;top:0" width="64.4" height="64.4"><defs><linearGradient id="ka9" gradientUnits="userSpaceOnUse" x1="43.3" y1="13.0" x2="47.9" y2="47.9"><stop offset="0" stop-color="#b9bec5"/><stop offset="1" stop-color="#80878f"/></linearGradient></defs><path d="M16.50,47.90 A22.2,22.2 0 0 1 43.30,12.97" fill="none" stroke="#eceef1" stroke-width="2.05" stroke-linecap="round"/><path d="M43.30,12.97 A22.2,22.2 0 0 1 47.90,47.90" fill="none" stroke="url(#ka9)" stroke-width="2.05" stroke-linecap="round"/><line x1="39.70" y1="19.21" x2="43.65" y2="12.37" stroke="#eceef1" stroke-width="2.05"/><line x1="35.00" y1="27.35" x2="37.30" y2="23.37" stroke="#eceef2" stroke-width="2.4" stroke-linecap="round"/></svg>
</div>
<div class="t" style="left:80.50px;width:400px;text-align:center;top:541.63px;font-size:11.8px;color:#e6e8ec;font-weight:bold;">Interval</div>
<div class="t" style="left:185.50px;width:400px;text-align:center;top:541.63px;font-size:11.8px;color:#e6e8ec;font-weight:bold;">Octave</div>
<div class="t" style="left:280.50px;width:400px;text-align:center;top:478.43px;font-size:11.8px;color:#e4e6ea;font-weight:bold;">Tuning</div>
<div class="t" style="left:280.50px;width:400px;text-align:center;top:508.23px;font-size:11.8px;color:#e4e6ea;font-weight:bold;">Level</div>
<div class="t" style="left:280.50px;width:400px;text-align:center;top:537.83px;font-size:11.8px;color:#e4e6ea;font-weight:bold;">Pan</div>
<div class="a" style="left:507.5px;top:475px;width:51.3px;height:17px;background:#353a43;border-radius:4px"></div>
<div class="t" style="left:333.15px;width:400px;text-align:center;top:479.17px;font-size:11.8px;color:#eef0f3;font-weight:bold;">Fixed</div>
<div class="a" style="left:507.5px;top:504.5px;width:51.3px;height:16.8px;background:#353a43;border-radius:4px"></div>
<div class="t" style="left:333.15px;width:400px;text-align:center;top:508.57px;font-size:11.8px;color:#eef0f3;font-weight:bold;">100%</div>
<div class="a" style="left:507px;top:533.5px;width:53.5px;height:17px;background:#353a43;border-radius:4px"></div>
<div class="t" style="left:333.75px;width:400px;text-align:center;top:537.67px;font-size:11.8px;color:#eef0f3;font-weight:bold;">Center</div>
<div class="a" style="left:600.5px;top:410.8px;width:339px;height:38.7px;border-radius:8px;background:#24272d;box-shadow:0 0 0 1px rgba(120,127,137,.3), 0 1px 0 rgba(150,157,167,.45)"></div>
<svg class="a" style="left:0;top:0" width="1540" height="850"><defs>
<linearGradient id="bg1" x1="0" y1="0" x2="0" y2="1"><stop offset="0" stop-color="#c9cdd5"/><stop offset=".6" stop-color="#9ca1aa"/><stop offset="1" stop-color="#24272d"/></linearGradient>
<linearGradient id="bgw" x1="0" y1="0" x2="0" y2="1"><stop offset="0" stop-color="#f4f5f7"/><stop offset="1" stop-color="#555a62"/></linearGradient>
<linearGradient id="bgp" x1="0" y1="0" x2="0" y2="1"><stop offset="0" stop-color="#a99ffb"/><stop offset=".6" stop-color="#8a7ee0"/><stop offset="1" stop-color="#2c2c3a"/></linearGradient>
</defs><rect x="620.60" y="421" width="2.1" height="27.5" rx="1" fill="url(#bg1)" opacity="0.25"/><rect x="627.32" y="421" width="2.1" height="27.5" rx="1" fill="url(#bg1)" opacity="0.43"/><rect x="634.04" y="421" width="2.1" height="27.5" rx="1" fill="url(#bg1)" opacity="0.61"/><rect x="640.76" y="421" width="2.1" height="27.5" rx="1" fill="url(#bg1)" opacity="0.79"/><rect x="647.48" y="421" width="2.1" height="27.5" rx="1" fill="url(#bg1)" opacity="0.97"/><rect x="654.20" y="421" width="2.1" height="27.5" rx="1" fill="url(#bg1)" opacity="1.00"/><rect x="660.92" y="421" width="2.1" height="27.5" rx="1" fill="url(#bg1)" opacity="1.00"/><rect x="667.64" y="421" width="2.1" height="27.5" rx="1" fill="url(#bg1)" opacity="1.00"/><rect x="674.36" y="421" width="2.1" height="27.5" rx="1" fill="url(#bg1)" opacity="1.00"/><rect x="681.08" y="421" width="2.1" height="27.5" rx="1" fill="url(#bg1)" opacity="1.00"/><rect x="687.80" y="421" width="2.1" height="27.5" rx="1" fill="url(#bg1)" opacity="1.00"/><rect x="694.52" y="421" width="2.1" height="27.5" rx="1" fill="url(#bg1)" opacity="1.00"/><rect x="701.24" y="421" width="2.1" height="27.5" rx="1" fill="url(#bg1)" opacity="1.00"/><rect x="707.96" y="421" width="2.1" height="27.5" rx="1" fill="url(#bg1)" opacity="1.00"/><rect x="714.68" y="421" width="2.1" height="27.5" rx="1" fill="url(#bg1)" opacity="1.00"/><rect x="721.40" y="421" width="2.1" height="27.5" rx="1" fill="url(#bg1)" opacity="1.00"/><rect x="728.12" y="421" width="2.1" height="27.5" rx="1" fill="url(#bg1)" opacity="1.00"/><rect x="734.84" y="421" width="2.1" height="27.5" rx="1" fill="url(#bg1)" opacity="1.00"/><rect x="741.56" y="421" width="2.1" height="27.5" rx="1" fill="url(#bg1)" opacity="1.00"/><rect x="748.30" y="436.6" width="2.1" height="12" rx="1" fill="url(#bg1)"/><rect x="755.08" y="436.6" width="2.1" height="12" rx="1" fill="url(#bg1)"/><rect x="761.86" y="436.6" width="2.1" height="12" rx="1" fill="url(#bg1)"/><rect x="768.64" y="436.6" width="2.1" height="12" rx="1" fill="url(#bgw)"/><rect x="775.42" y="436.6" width="2.1" height="12" rx="1" fill="url(#bgp)"/><rect x="782.20" y="436.6" width="2.1" height="12" rx="1" fill="url(#bgp)"/><rect x="788.98" y="436.6" width="2.1" height="12" rx="1" fill="url(#bgp)"/><rect x="794.90" y="421" width="2.1" height="27.5" rx="1" fill="url(#bgp)"/><rect x="801.65" y="421" width="2.1" height="27.5" rx="1" fill="url(#bgp)"/><rect x="808.40" y="421" width="2.1" height="27.5" rx="1" fill="url(#bgp)"/><rect x="815.15" y="421" width="2.1" height="27.5" rx="1" fill="url(#bgp)"/><rect x="821.90" y="421" width="2.1" height="27.5" rx="1" fill="url(#bgp)"/><rect x="828.65" y="421" width="2.1" height="27.5" rx="1" fill="url(#bgp)"/><rect x="835.40" y="421" width="2.1" height="27.5" rx="1" fill="url(#bgp)"/><rect x="842.15" y="421" width="2.1" height="27.5" rx="1" fill="url(#bgp)"/><rect x="848.90" y="421" width="2.1" height="27.5" rx="1" fill="url(#bgp)"/><rect x="855.65" y="421" width="2.1" height="27.5" rx="1" fill="url(#bgp)"/><rect x="862.40" y="421" width="2.1" height="27.5" rx="1" fill="url(#bgp)"/><rect x="869.15" y="421" width="2.1" height="27.5" rx="1" fill="url(#bgp)"/><rect x="876.00" y="421" width="2.1" height="27.5" rx="1" fill="url(#bg1)" opacity="1.00"/><rect x="882.72" y="421" width="2.1" height="27.5" rx="1" fill="url(#bg1)" opacity="0.87"/><rect x="889.44" y="421" width="2.1" height="27.5" rx="1" fill="url(#bg1)" opacity="0.74"/><rect x="896.16" y="421" width="2.1" height="27.5" rx="1" fill="url(#bg1)" opacity="0.61"/><rect x="902.88" y="421" width="2.1" height="27.5" rx="1" fill="url(#bg1)" opacity="0.48"/><rect x="909.60" y="421" width="2.1" height="27.5" rx="1" fill="url(#bg1)" opacity="0.35"/><rect x="916.32" y="421" width="2.1" height="27.5" rx="1" fill="url(#bg1)" opacity="0.22"/>
<path d="M703.7,448.5 H836.4 L815.5,474.5 Q812.7,477.7 808.5,477.7 H732.5 Q728.3,477.7 725.5,474.5 Z" fill="#24272d"/>
<g stroke="rgba(160,166,175,.16)" stroke-width="1"><line x1="639.4" y1="450" x2="639.4" y2="460"/><line x1="680.9" y1="450" x2="680.9" y2="460"/><line x1="860" y1="450" x2="860" y2="460"/><line x1="901.6" y1="450" x2="901.6" y2="460"/></g>
</svg>
<div class="t" style="left:571.00px;width:400px;text-align:center;top:415.23px;font-size:17.5px;color:#e8eaee;font-weight:normal;-webkit-text-stroke:0.35px #e8eaee;">C#</div>
<div class="t" style="left:570.00px;width:400px;text-align:center;top:456.84px;font-size:13.6px;color:#eceef2;font-weight:bold;">Retune</div>
<div class="t" style="left:600.00px;top:454.25px;font-size:9.8px;color:#868c95;font-weight:bold;">-100</div>
<div class="t" style="left:540.00px;width:400px;text-align:right;top:454.25px;font-size:9.8px;color:#868c95;font-weight:bold;">+100</div>
<div class="a" style="left:629.50px;top:460.90px;width:84px;height:84px">
<div class="a kb" style="left:18px;top:18px;width:48px;height:48px;box-shadow:0 4px 9px rgba(12,14,18,.5)"></div>
<svg class="a" style="left:0;top:0" width="84" height="84"><defs><linearGradient id="kb10" x1="0.3" y1="0" x2="0.7" y2="1"><stop offset="0" stop-color="#3b3f47"/><stop offset="1" stop-color="#2a2d33"/></linearGradient></defs><circle cx="42" cy="42" r="24" fill="url(#kb10)"/><circle cx="42" cy="42" r="23" fill="none" stroke="rgba(150,157,167,.68)" stroke-width="1"/></svg>
<div class="a" style="left:22.5px;top:22.5px;width:39px;height:39px;background:conic-gradient(from 0deg,#4a4f58 0deg,#626872 40deg,#474c55 95deg,#3a3e46 150deg,#585e67 215deg,#3e434b 280deg,#4a4f58 360deg);clip-path:path('M37.50,19.50 L37.49,20.21 L37.44,20.91 L37.38,21.62 L37.28,22.32 L37.15,23.01 L37.00,23.70 L36.82,24.39 L36.30,24.96 L35.53,25.42 L35.11,25.97 L35.02,26.66 L35.24,27.52 L35.20,28.30 L34.85,28.90 L34.47,29.50 L34.06,30.08 L33.64,30.64 L33.19,31.19 L32.72,31.72 L32.23,32.23 L31.72,32.72 L31.19,33.19 L30.64,33.64 L30.08,34.06 L29.50,34.47 L28.90,34.85 L28.30,35.20 L27.52,35.24 L26.66,35.02 L25.97,35.11 L25.42,35.53 L24.96,36.30 L24.39,36.82 L23.70,37.00 L23.01,37.15 L22.32,37.28 L21.62,37.38 L20.91,37.44 L20.21,37.49 L19.50,37.50 L18.79,37.49 L18.09,37.44 L17.38,37.38 L16.68,37.28 L15.99,37.15 L15.30,37.00 L14.61,36.82 L14.04,36.30 L13.58,35.53 L13.03,35.11 L12.34,35.02 L11.48,35.24 L10.70,35.20 L10.10,34.85 L9.50,34.47 L8.92,34.06 L8.36,33.64 L7.81,33.19 L7.28,32.72 L6.77,32.23 L6.28,31.72 L5.81,31.19 L5.36,30.64 L4.94,30.08 L4.53,29.50 L4.15,28.90 L3.80,28.30 L3.76,27.52 L3.98,26.66 L3.89,25.97 L3.47,25.42 L2.70,24.96 L2.18,24.39 L2.00,23.70 L1.85,23.01 L1.72,22.32 L1.62,21.62 L1.56,20.91 L1.51,20.21 L1.50,19.50 L1.51,18.79 L1.56,18.09 L1.62,17.38 L1.72,16.68 L1.85,15.99 L2.00,15.30 L2.18,14.61 L2.70,14.04 L3.47,13.58 L3.89,13.03 L3.98,12.34 L3.76,11.48 L3.80,10.70 L4.15,10.10 L4.53,9.50 L4.94,8.92 L5.36,8.36 L5.81,7.81 L6.28,7.28 L6.77,6.77 L7.28,6.28 L7.81,5.81 L8.36,5.36 L8.92,4.94 L9.50,4.53 L10.10,4.15 L10.70,3.80 L11.48,3.76 L12.34,3.98 L13.03,3.89 L13.58,3.47 L14.04,2.70 L14.61,2.18 L15.30,2.00 L15.99,1.85 L16.68,1.72 L17.38,1.62 L18.09,1.56 L18.79,1.51 L19.50,1.50 L20.21,1.51 L20.91,1.56 L21.62,1.62 L22.32,1.72 L23.01,1.85 L23.70,2.00 L24.39,2.18 L24.96,2.70 L25.42,3.47 L25.97,3.89 L26.66,3.98 L27.52,3.76 L28.30,3.80 L28.90,4.15 L29.50,4.53 L30.08,4.94 L30.64,5.36 L31.19,5.81 L31.72,6.28 L32.23,6.77 L32.72,7.28 L33.19,7.81 L33.64,8.36 L34.06,8.92 L34.47,9.50 L34.85,10.10 L35.20,10.70 L35.24,11.48 L35.02,12.34 L35.11,13.03 L35.53,13.58 L36.30,14.04 L36.82,14.61 L37.00,15.30 L37.15,15.99 L37.28,16.68 L37.38,17.38 L37.44,18.09 L37.49,18.79 Z')"></div>
<svg class="a" style="left:22.5px;top:22.5px" width="39" height="39"><defs><linearGradient id="kr10" x1="0.15" y1="0.1" x2="0.85" y2="0.9"><stop offset="0" stop-color="rgba(200,206,216,.55)"/><stop offset=".5" stop-color="rgba(90,95,105,.3)"/><stop offset="1" stop-color="rgba(140,125,240,.95)"/></linearGradient></defs><path d="M37.50,19.50 L37.49,20.21 L37.44,20.91 L37.38,21.62 L37.28,22.32 L37.15,23.01 L37.00,23.70 L36.82,24.39 L36.30,24.96 L35.53,25.42 L35.11,25.97 L35.02,26.66 L35.24,27.52 L35.20,28.30 L34.85,28.90 L34.47,29.50 L34.06,30.08 L33.64,30.64 L33.19,31.19 L32.72,31.72 L32.23,32.23 L31.72,32.72 L31.19,33.19 L30.64,33.64 L30.08,34.06 L29.50,34.47 L28.90,34.85 L28.30,35.20 L27.52,35.24 L26.66,35.02 L25.97,35.11 L25.42,35.53 L24.96,36.30 L24.39,36.82 L23.70,37.00 L23.01,37.15 L22.32,37.28 L21.62,37.38 L20.91,37.44 L20.21,37.49 L19.50,37.50 L18.79,37.49 L18.09,37.44 L17.38,37.38 L16.68,37.28 L15.99,37.15 L15.30,37.00 L14.61,36.82 L14.04,36.30 L13.58,35.53 L13.03,35.11 L12.34,35.02 L11.48,35.24 L10.70,35.20 L10.10,34.85 L9.50,34.47 L8.92,34.06 L8.36,33.64 L7.81,33.19 L7.28,32.72 L6.77,32.23 L6.28,31.72 L5.81,31.19 L5.36,30.64 L4.94,30.08 L4.53,29.50 L4.15,28.90 L3.80,28.30 L3.76,27.52 L3.98,26.66 L3.89,25.97 L3.47,25.42 L2.70,24.96 L2.18,24.39 L2.00,23.70 L1.85,23.01 L1.72,22.32 L1.62,21.62 L1.56,20.91 L1.51,20.21 L1.50,19.50 L1.51,18.79 L1.56,18.09 L1.62,17.38 L1.72,16.68 L1.85,15.99 L2.00,15.30 L2.18,14.61 L2.70,14.04 L3.47,13.58 L3.89,13.03 L3.98,12.34 L3.76,11.48 L3.80,10.70 L4.15,10.10 L4.53,9.50 L4.94,8.92 L5.36,8.36 L5.81,7.81 L6.28,7.28 L6.77,6.77 L7.28,6.28 L7.81,5.81 L8.36,5.36 L8.92,4.94 L9.50,4.53 L10.10,4.15 L10.70,3.80 L11.48,3.76 L12.34,3.98 L13.03,3.89 L13.58,3.47 L14.04,2.70 L14.61,2.18 L15.30,2.00 L15.99,1.85 L16.68,1.72 L17.38,1.62 L18.09,1.56 L18.79,1.51 L19.50,1.50 L20.21,1.51 L20.91,1.56 L21.62,1.62 L22.32,1.72 L23.01,1.85 L23.70,2.00 L24.39,2.18 L24.96,2.70 L25.42,3.47 L25.97,3.89 L26.66,3.98 L27.52,3.76 L28.30,3.80 L28.90,4.15 L29.50,4.53 L30.08,4.94 L30.64,5.36 L31.19,5.81 L31.72,6.28 L32.23,6.77 L32.72,7.28 L33.19,7.81 L33.64,8.36 L34.06,8.92 L34.47,9.50 L34.85,10.10 L35.20,10.70 L35.24,11.48 L35.02,12.34 L35.11,13.03 L35.53,13.58 L36.30,14.04 L36.82,14.61 L37.00,15.30 L37.15,15.99 L37.28,16.68 L37.38,17.38 L37.44,18.09 L37.49,18.79 Z" fill="none" stroke="url(#kr10)" stroke-width="1.1"/></svg>
<svg class="a" style="left:0;top:0" width="84" height="84"><defs><linearGradient id="ka10" gradientUnits="userSpaceOnUse" x1="58.0" y1="14.3" x2="64.6" y2="64.6"><stop offset="0" stop-color="#b9bec5"/><stop offset="1" stop-color="#80878f"/></linearGradient></defs><path d="M19.37,64.63 A32,32 0 0 1 58.00,14.29" fill="none" stroke="#eceef1" stroke-width="2.15" stroke-linecap="round"/><path d="M58.00,14.29 A32,32 0 0 1 64.63,64.63" fill="none" stroke="url(#ka10)" stroke-width="2.15" stroke-linecap="round"/><line x1="52.75" y1="23.38" x2="58.40" y2="13.59" stroke="#eceef1" stroke-width="2.15"/><line x1="45.10" y1="36.63" x2="48.60" y2="30.57" stroke="#eceef2" stroke-width="3.0" stroke-linecap="round"/></svg>
</div>
<div class="a" style="left:826.50px;top:461.00px;width:84px;height:84px">
<div class="a kb" style="left:18px;top:18px;width:48px;height:48px;box-shadow:0 4px 9px rgba(12,14,18,.5)"></div>
<svg class="a" style="left:0;top:0" width="84" height="84"><defs><linearGradient id="kb11" x1="0.3" y1="0" x2="0.7" y2="1"><stop offset="0" stop-color="#3b3f47"/><stop offset="1" stop-color="#2a2d33"/></linearGradient></defs><circle cx="42" cy="42" r="24" fill="url(#kb11)"/><circle cx="42" cy="42" r="23" fill="none" stroke="rgba(150,157,167,.68)" stroke-width="1"/></svg>
<div class="a" style="left:22.5px;top:22.5px;width:39px;height:39px;background:conic-gradient(from 0deg,#4a4f58 0deg,#626872 40deg,#474c55 95deg,#3a3e46 150deg,#585e67 215deg,#3e434b 280deg,#4a4f58 360deg);clip-path:path('M37.50,19.50 L37.49,20.21 L37.44,20.91 L37.38,21.62 L37.28,22.32 L37.15,23.01 L37.00,23.70 L36.82,24.39 L36.30,24.96 L35.53,25.42 L35.11,25.97 L35.02,26.66 L35.24,27.52 L35.20,28.30 L34.85,28.90 L34.47,29.50 L34.06,30.08 L33.64,30.64 L33.19,31.19 L32.72,31.72 L32.23,32.23 L31.72,32.72 L31.19,33.19 L30.64,33.64 L30.08,34.06 L29.50,34.47 L28.90,34.85 L28.30,35.20 L27.52,35.24 L26.66,35.02 L25.97,35.11 L25.42,35.53 L24.96,36.30 L24.39,36.82 L23.70,37.00 L23.01,37.15 L22.32,37.28 L21.62,37.38 L20.91,37.44 L20.21,37.49 L19.50,37.50 L18.79,37.49 L18.09,37.44 L17.38,37.38 L16.68,37.28 L15.99,37.15 L15.30,37.00 L14.61,36.82 L14.04,36.30 L13.58,35.53 L13.03,35.11 L12.34,35.02 L11.48,35.24 L10.70,35.20 L10.10,34.85 L9.50,34.47 L8.92,34.06 L8.36,33.64 L7.81,33.19 L7.28,32.72 L6.77,32.23 L6.28,31.72 L5.81,31.19 L5.36,30.64 L4.94,30.08 L4.53,29.50 L4.15,28.90 L3.80,28.30 L3.76,27.52 L3.98,26.66 L3.89,25.97 L3.47,25.42 L2.70,24.96 L2.18,24.39 L2.00,23.70 L1.85,23.01 L1.72,22.32 L1.62,21.62 L1.56,20.91 L1.51,20.21 L1.50,19.50 L1.51,18.79 L1.56,18.09 L1.62,17.38 L1.72,16.68 L1.85,15.99 L2.00,15.30 L2.18,14.61 L2.70,14.04 L3.47,13.58 L3.89,13.03 L3.98,12.34 L3.76,11.48 L3.80,10.70 L4.15,10.10 L4.53,9.50 L4.94,8.92 L5.36,8.36 L5.81,7.81 L6.28,7.28 L6.77,6.77 L7.28,6.28 L7.81,5.81 L8.36,5.36 L8.92,4.94 L9.50,4.53 L10.10,4.15 L10.70,3.80 L11.48,3.76 L12.34,3.98 L13.03,3.89 L13.58,3.47 L14.04,2.70 L14.61,2.18 L15.30,2.00 L15.99,1.85 L16.68,1.72 L17.38,1.62 L18.09,1.56 L18.79,1.51 L19.50,1.50 L20.21,1.51 L20.91,1.56 L21.62,1.62 L22.32,1.72 L23.01,1.85 L23.70,2.00 L24.39,2.18 L24.96,2.70 L25.42,3.47 L25.97,3.89 L26.66,3.98 L27.52,3.76 L28.30,3.80 L28.90,4.15 L29.50,4.53 L30.08,4.94 L30.64,5.36 L31.19,5.81 L31.72,6.28 L32.23,6.77 L32.72,7.28 L33.19,7.81 L33.64,8.36 L34.06,8.92 L34.47,9.50 L34.85,10.10 L35.20,10.70 L35.24,11.48 L35.02,12.34 L35.11,13.03 L35.53,13.58 L36.30,14.04 L36.82,14.61 L37.00,15.30 L37.15,15.99 L37.28,16.68 L37.38,17.38 L37.44,18.09 L37.49,18.79 Z')"></div>
<svg class="a" style="left:22.5px;top:22.5px" width="39" height="39"><defs><linearGradient id="kr11" x1="0.15" y1="0.1" x2="0.85" y2="0.9"><stop offset="0" stop-color="rgba(200,206,216,.55)"/><stop offset=".5" stop-color="rgba(90,95,105,.3)"/><stop offset="1" stop-color="rgba(140,125,240,.95)"/></linearGradient></defs><path d="M37.50,19.50 L37.49,20.21 L37.44,20.91 L37.38,21.62 L37.28,22.32 L37.15,23.01 L37.00,23.70 L36.82,24.39 L36.30,24.96 L35.53,25.42 L35.11,25.97 L35.02,26.66 L35.24,27.52 L35.20,28.30 L34.85,28.90 L34.47,29.50 L34.06,30.08 L33.64,30.64 L33.19,31.19 L32.72,31.72 L32.23,32.23 L31.72,32.72 L31.19,33.19 L30.64,33.64 L30.08,34.06 L29.50,34.47 L28.90,34.85 L28.30,35.20 L27.52,35.24 L26.66,35.02 L25.97,35.11 L25.42,35.53 L24.96,36.30 L24.39,36.82 L23.70,37.00 L23.01,37.15 L22.32,37.28 L21.62,37.38 L20.91,37.44 L20.21,37.49 L19.50,37.50 L18.79,37.49 L18.09,37.44 L17.38,37.38 L16.68,37.28 L15.99,37.15 L15.30,37.00 L14.61,36.82 L14.04,36.30 L13.58,35.53 L13.03,35.11 L12.34,35.02 L11.48,35.24 L10.70,35.20 L10.10,34.85 L9.50,34.47 L8.92,34.06 L8.36,33.64 L7.81,33.19 L7.28,32.72 L6.77,32.23 L6.28,31.72 L5.81,31.19 L5.36,30.64 L4.94,30.08 L4.53,29.50 L4.15,28.90 L3.80,28.30 L3.76,27.52 L3.98,26.66 L3.89,25.97 L3.47,25.42 L2.70,24.96 L2.18,24.39 L2.00,23.70 L1.85,23.01 L1.72,22.32 L1.62,21.62 L1.56,20.91 L1.51,20.21 L1.50,19.50 L1.51,18.79 L1.56,18.09 L1.62,17.38 L1.72,16.68 L1.85,15.99 L2.00,15.30 L2.18,14.61 L2.70,14.04 L3.47,13.58 L3.89,13.03 L3.98,12.34 L3.76,11.48 L3.80,10.70 L4.15,10.10 L4.53,9.50 L4.94,8.92 L5.36,8.36 L5.81,7.81 L6.28,7.28 L6.77,6.77 L7.28,6.28 L7.81,5.81 L8.36,5.36 L8.92,4.94 L9.50,4.53 L10.10,4.15 L10.70,3.80 L11.48,3.76 L12.34,3.98 L13.03,3.89 L13.58,3.47 L14.04,2.70 L14.61,2.18 L15.30,2.00 L15.99,1.85 L16.68,1.72 L17.38,1.62 L18.09,1.56 L18.79,1.51 L19.50,1.50 L20.21,1.51 L20.91,1.56 L21.62,1.62 L22.32,1.72 L23.01,1.85 L23.70,2.00 L24.39,2.18 L24.96,2.70 L25.42,3.47 L25.97,3.89 L26.66,3.98 L27.52,3.76 L28.30,3.80 L28.90,4.15 L29.50,4.53 L30.08,4.94 L30.64,5.36 L31.19,5.81 L31.72,6.28 L32.23,6.77 L32.72,7.28 L33.19,7.81 L33.64,8.36 L34.06,8.92 L34.47,9.50 L34.85,10.10 L35.20,10.70 L35.24,11.48 L35.02,12.34 L35.11,13.03 L35.53,13.58 L36.30,14.04 L36.82,14.61 L37.00,15.30 L37.15,15.99 L37.28,16.68 L37.38,17.38 L37.44,18.09 L37.49,18.79 Z" fill="none" stroke="url(#kr11)" stroke-width="1.1"/></svg>
<svg class="a" style="left:0;top:0" width="84" height="84"><defs><linearGradient id="ka11" gradientUnits="userSpaceOnUse" x1="58.0" y1="14.3" x2="64.6" y2="64.6"><stop offset="0" stop-color="#b9bec5"/><stop offset="1" stop-color="#80878f"/></linearGradient></defs><path d="M19.37,64.63 A32,32 0 0 1 58.00,14.29" fill="none" stroke="#eceef1" stroke-width="2.15" stroke-linecap="round"/><path d="M58.00,14.29 A32,32 0 0 1 64.63,64.63" fill="none" stroke="url(#ka11)" stroke-width="2.15" stroke-linecap="round"/><line x1="52.75" y1="23.38" x2="58.40" y2="13.59" stroke="#eceef1" stroke-width="2.15"/><line x1="45.10" y1="36.63" x2="48.60" y2="30.57" stroke="#eceef2" stroke-width="3.0" stroke-linecap="round"/></svg>
</div>
<div class="a kb" style="left:754.5px;top:495.5px;width:31px;height:31px;background:radial-gradient(circle at 45% 35%,#9a88ff,#7d5fe6);box-shadow:0 3px 6px rgba(20,20,40,.45)"></div>
<svg class="a" style="left:761.5px;top:502.5px;overflow:visible;" width="17" height="17" viewBox="0 0 17 17"><path d="M4.6,4.4 A6.2,6.2 0 1 0 12.4,4.4" fill="none" stroke="#e9e4ff" stroke-width="1.8" stroke-linecap="round"/><line x1="8.5" y1="1.8" x2="8.5" y2="8" stroke="#e9e4ff" stroke-width="1.8" stroke-linecap="round"/></svg>
<div class="t" style="left:471.50px;width:400px;text-align:center;top:539.93px;font-size:11.8px;color:#e6e8ec;font-weight:bold;">Amount</div>
<div class="t" style="left:570.00px;width:400px;text-align:center;top:539.93px;font-size:11.8px;color:#e6e8ec;font-weight:bold;">Glide</div>
<div class="t" style="left:668.50px;width:400px;text-align:center;top:539.93px;font-size:11.8px;color:#e6e8ec;font-weight:bold;">Speed</div>
<div class="a" style="left:959.5px;top:410.5px;width:356.5px;height:162px;border-radius:10px 10px 0 0;background:linear-gradient(#545d6a,#4a525e);box-shadow:inset 1px 0 0 rgba(130,137,147,.35), inset -1px 0 0 rgba(130,137,147,.35)"></div>
<div class="a" style="left:959.5px;top:410.5px;width:356.5px;height:38px;border-radius:10px 10px 0 0;background:#24272d;box-shadow:0 0 0 1px rgba(120,127,137,.35)"></div>
<svg class="a" style="left:969.0039999999999px;top:421.104px;overflow:visible;" width="18.592" height="18.592" viewBox="0 0 18.592 18.592"><circle cx="9.30" cy="9.30" r="7.30" fill="none" stroke="#8f83f2" stroke-width="1.8"/><line x1="9.30" y1="5.28" x2="9.30" y2="13.31" stroke="#8f83f2" stroke-width="2.1"/></svg>
<div class="t" style="left:938.80px;width:400px;text-align:center;top:423.58px;font-size:14px;color:#eceef2;font-weight:bold;">Spectrum</div>
<svg class="a" style="left:1276.5px;top:421px;overflow:visible;" width="30" height="18" viewBox="0 0 30 18"><path d="M0.30,9.20 L3.10,9.20 C4.20,9.20 4.20,5.80 5.30,5.80 C6.80,5.80 6.80,11.20 8.30,11.20 C10.00,11.20 10.00,0.60 11.70,0.60 C13.50,0.60 13.50,16.60 15.30,16.60 C17.20,16.60 17.20,5.40 19.10,5.40 C20.80,5.40 20.80,12.80 22.50,12.80 C23.70,12.80 23.70,9.20 24.90,9.20 L28.30,9.20" fill="none" stroke="#eceef2" stroke-width="2.1" stroke-linecap="round" stroke-linejoin="round"/></svg>
<svg class="a" style="left:0;top:0" width="1540" height="850"><g fill="#262a31"><circle cx="995.25" cy="469.20" r="1.1"/><circle cx="999.75" cy="469.20" r="1.1"/><circle cx="1004.25" cy="469.20" r="1.1"/><circle cx="1008.75" cy="469.20" r="1.1"/><circle cx="1013.25" cy="469.20" r="1.1"/><circle cx="1017.75" cy="469.20" r="1.1"/><circle cx="1022.25" cy="469.20" r="1.1"/><circle cx="1026.75" cy="469.20" r="1.1"/><circle cx="1031.25" cy="469.20" r="1.1"/><circle cx="1035.75" cy="469.20" r="1.1"/><circle cx="995.25" cy="473.75" r="1.1"/><circle cx="999.75" cy="473.75" r="1.1"/><circle cx="1004.25" cy="473.75" r="1.1"/><circle cx="1008.75" cy="473.75" r="1.1"/><circle cx="1013.25" cy="473.75" r="1.1"/><circle cx="1017.75" cy="473.75" r="1.1"/><circle cx="1022.25" cy="473.75" r="1.1"/><circle cx="1026.75" cy="473.75" r="1.1"/><circle cx="1031.25" cy="473.75" r="1.1"/><circle cx="1035.75" cy="473.75" r="1.1"/></g></svg>
<svg class="a" style="left:0;top:0" width="1540" height="850"><g fill="#262a31"><circle cx="1239.25" cy="469.20" r="1.1"/><circle cx="1243.75" cy="469.20" r="1.1"/><circle cx="1248.25" cy="469.20" r="1.1"/><circle cx="1252.75" cy="469.20" r="1.1"/><circle cx="1257.25" cy="469.20" r="1.1"/><circle cx="1261.75" cy="469.20" r="1.1"/><circle cx="1266.25" cy="469.20" r="1.1"/><circle cx="1270.75" cy="469.20" r="1.1"/><circle cx="1275.25" cy="469.20" r="1.1"/><circle cx="1279.75" cy="469.20" r="1.1"/><circle cx="1239.25" cy="473.75" r="1.1"/><circle cx="1243.75" cy="473.75" r="1.1"/><circle cx="1248.25" cy="473.75" r="1.1"/><circle cx="1252.75" cy="473.75" r="1.1"/><circle cx="1257.25" cy="473.75" r="1.1"/><circle cx="1261.75" cy="473.75" r="1.1"/><circle cx="1266.25" cy="473.75" r="1.1"/><circle cx="1270.75" cy="473.75" r="1.1"/><circle cx="1275.25" cy="473.75" r="1.1"/><circle cx="1279.75" cy="473.75" r="1.1"/></g></svg>
<div class="a" style="left:983.00px;top:482.80px;width:64.4px;height:64.4px">
<div class="a kb" style="left:15.600000000000001px;top:15.600000000000001px;width:33.2px;height:33.2px;box-shadow:0 3px 6px rgba(12,14,18,.5)"></div>
<svg class="a" style="left:0;top:0" width="64.4" height="64.4"><defs><linearGradient id="kb12" x1="0.3" y1="0" x2="0.7" y2="1"><stop offset="0" stop-color="#3c4048"/><stop offset="1" stop-color="#26292e"/></linearGradient></defs><circle cx="32.2" cy="32.2" r="16.6" fill="url(#kb12)" stroke="#8c929a" stroke-width="1.1"/></svg>
<div class="a" style="left:21.200000000000003px;top:21.200000000000003px;width:22px;height:22px;border-radius:50%;background:conic-gradient(from 0deg,#4a4f58 0deg,#626872 40deg,#474c55 95deg,#3a3e46 150deg,#585e67 215deg,#3e434b 280deg,#4a4f58 360deg)"></div>
<svg class="a" style="left:0;top:0" width="64.4" height="64.4"><defs><linearGradient id="kr12" x1="0.15" y1="0.1" x2="0.85" y2="0.9"><stop offset="0" stop-color="rgba(200,206,216,.5)"/><stop offset=".55" stop-color="rgba(110,115,125,.35)"/><stop offset="1" stop-color="rgba(135,122,235,.7)"/></linearGradient></defs><circle cx="32.2" cy="32.2" r="10.5" fill="none" stroke="url(#kr12)" stroke-width="1.1"/></svg>
<svg class="a" style="left:0;top:0" width="64.4" height="64.4"><defs><linearGradient id="ka12" gradientUnits="userSpaceOnUse" x1="43.3" y1="13.0" x2="47.9" y2="47.9"><stop offset="0" stop-color="#b9bec5"/><stop offset="1" stop-color="#80878f"/></linearGradient></defs><path d="M16.50,47.90 A22.2,22.2 0 0 1 43.30,12.97" fill="none" stroke="#eceef1" stroke-width="2.05" stroke-linecap="round"/><path d="M43.30,12.97 A22.2,22.2 0 0 1 47.90,47.90" fill="none" stroke="url(#ka12)" stroke-width="2.05" stroke-linecap="round"/><line x1="39.70" y1="19.21" x2="43.65" y2="12.37" stroke="#eceef1" stroke-width="2.05"/><line x1="35.00" y1="27.35" x2="37.30" y2="23.37" stroke="#eceef2" stroke-width="2.4" stroke-linecap="round"/></svg>
</div>
<div class="a" style="left:1095.30px;top:460.60px;width:84px;height:84px">
<div class="a kb" style="left:18px;top:18px;width:48px;height:48px;box-shadow:0 4px 9px rgba(12,14,18,.5)"></div>
<svg class="a" style="left:0;top:0" width="84" height="84"><defs><linearGradient id="kb13" x1="0.3" y1="0" x2="0.7" y2="1"><stop offset="0" stop-color="#3b3f47"/><stop offset="1" stop-color="#2a2d33"/></linearGradient></defs><circle cx="42" cy="42" r="24" fill="url(#kb13)"/><circle cx="42" cy="42" r="23" fill="none" stroke="rgba(150,157,167,.68)" stroke-width="1"/></svg>
<div class="a" style="left:22.5px;top:22.5px;width:39px;height:39px;background:conic-gradient(from 0deg,#4a4f58 0deg,#626872 40deg,#474c55 95deg,#3a3e46 150deg,#585e67 215deg,#3e434b 280deg,#4a4f58 360deg);clip-path:path('M37.50,19.50 L37.49,20.21 L37.44,20.91 L37.38,21.62 L37.28,22.32 L37.15,23.01 L37.00,23.70 L36.82,24.39 L36.30,24.96 L35.53,25.42 L35.11,25.97 L35.02,26.66 L35.24,27.52 L35.20,28.30 L34.85,28.90 L34.47,29.50 L34.06,30.08 L33.64,30.64 L33.19,31.19 L32.72,31.72 L32.23,32.23 L31.72,32.72 L31.19,33.19 L30.64,33.64 L30.08,34.06 L29.50,34.47 L28.90,34.85 L28.30,35.20 L27.52,35.24 L26.66,35.02 L25.97,35.11 L25.42,35.53 L24.96,36.30 L24.39,36.82 L23.70,37.00 L23.01,37.15 L22.32,37.28 L21.62,37.38 L20.91,37.44 L20.21,37.49 L19.50,37.50 L18.79,37.49 L18.09,37.44 L17.38,37.38 L16.68,37.28 L15.99,37.15 L15.30,37.00 L14.61,36.82 L14.04,36.30 L13.58,35.53 L13.03,35.11 L12.34,35.02 L11.48,35.24 L10.70,35.20 L10.10,34.85 L9.50,34.47 L8.92,34.06 L8.36,33.64 L7.81,33.19 L7.28,32.72 L6.77,32.23 L6.28,31.72 L5.81,31.19 L5.36,30.64 L4.94,30.08 L4.53,29.50 L4.15,28.90 L3.80,28.30 L3.76,27.52 L3.98,26.66 L3.89,25.97 L3.47,25.42 L2.70,24.96 L2.18,24.39 L2.00,23.70 L1.85,23.01 L1.72,22.32 L1.62,21.62 L1.56,20.91 L1.51,20.21 L1.50,19.50 L1.51,18.79 L1.56,18.09 L1.62,17.38 L1.72,16.68 L1.85,15.99 L2.00,15.30 L2.18,14.61 L2.70,14.04 L3.47,13.58 L3.89,13.03 L3.98,12.34 L3.76,11.48 L3.80,10.70 L4.15,10.10 L4.53,9.50 L4.94,8.92 L5.36,8.36 L5.81,7.81 L6.28,7.28 L6.77,6.77 L7.28,6.28 L7.81,5.81 L8.36,5.36 L8.92,4.94 L9.50,4.53 L10.10,4.15 L10.70,3.80 L11.48,3.76 L12.34,3.98 L13.03,3.89 L13.58,3.47 L14.04,2.70 L14.61,2.18 L15.30,2.00 L15.99,1.85 L16.68,1.72 L17.38,1.62 L18.09,1.56 L18.79,1.51 L19.50,1.50 L20.21,1.51 L20.91,1.56 L21.62,1.62 L22.32,1.72 L23.01,1.85 L23.70,2.00 L24.39,2.18 L24.96,2.70 L25.42,3.47 L25.97,3.89 L26.66,3.98 L27.52,3.76 L28.30,3.80 L28.90,4.15 L29.50,4.53 L30.08,4.94 L30.64,5.36 L31.19,5.81 L31.72,6.28 L32.23,6.77 L32.72,7.28 L33.19,7.81 L33.64,8.36 L34.06,8.92 L34.47,9.50 L34.85,10.10 L35.20,10.70 L35.24,11.48 L35.02,12.34 L35.11,13.03 L35.53,13.58 L36.30,14.04 L36.82,14.61 L37.00,15.30 L37.15,15.99 L37.28,16.68 L37.38,17.38 L37.44,18.09 L37.49,18.79 Z')"></div>
<svg class="a" style="left:22.5px;top:22.5px" width="39" height="39"><defs><linearGradient id="kr13" x1="0.15" y1="0.1" x2="0.85" y2="0.9"><stop offset="0" stop-color="rgba(200,206,216,.55)"/><stop offset=".5" stop-color="rgba(90,95,105,.3)"/><stop offset="1" stop-color="rgba(140,125,240,.95)"/></linearGradient></defs><path d="M37.50,19.50 L37.49,20.21 L37.44,20.91 L37.38,21.62 L37.28,22.32 L37.15,23.01 L37.00,23.70 L36.82,24.39 L36.30,24.96 L35.53,25.42 L35.11,25.97 L35.02,26.66 L35.24,27.52 L35.20,28.30 L34.85,28.90 L34.47,29.50 L34.06,30.08 L33.64,30.64 L33.19,31.19 L32.72,31.72 L32.23,32.23 L31.72,32.72 L31.19,33.19 L30.64,33.64 L30.08,34.06 L29.50,34.47 L28.90,34.85 L28.30,35.20 L27.52,35.24 L26.66,35.02 L25.97,35.11 L25.42,35.53 L24.96,36.30 L24.39,36.82 L23.70,37.00 L23.01,37.15 L22.32,37.28 L21.62,37.38 L20.91,37.44 L20.21,37.49 L19.50,37.50 L18.79,37.49 L18.09,37.44 L17.38,37.38 L16.68,37.28 L15.99,37.15 L15.30,37.00 L14.61,36.82 L14.04,36.30 L13.58,35.53 L13.03,35.11 L12.34,35.02 L11.48,35.24 L10.70,35.20 L10.10,34.85 L9.50,34.47 L8.92,34.06 L8.36,33.64 L7.81,33.19 L7.28,32.72 L6.77,32.23 L6.28,31.72 L5.81,31.19 L5.36,30.64 L4.94,30.08 L4.53,29.50 L4.15,28.90 L3.80,28.30 L3.76,27.52 L3.98,26.66 L3.89,25.97 L3.47,25.42 L2.70,24.96 L2.18,24.39 L2.00,23.70 L1.85,23.01 L1.72,22.32 L1.62,21.62 L1.56,20.91 L1.51,20.21 L1.50,19.50 L1.51,18.79 L1.56,18.09 L1.62,17.38 L1.72,16.68 L1.85,15.99 L2.00,15.30 L2.18,14.61 L2.70,14.04 L3.47,13.58 L3.89,13.03 L3.98,12.34 L3.76,11.48 L3.80,10.70 L4.15,10.10 L4.53,9.50 L4.94,8.92 L5.36,8.36 L5.81,7.81 L6.28,7.28 L6.77,6.77 L7.28,6.28 L7.81,5.81 L8.36,5.36 L8.92,4.94 L9.50,4.53 L10.10,4.15 L10.70,3.80 L11.48,3.76 L12.34,3.98 L13.03,3.89 L13.58,3.47 L14.04,2.70 L14.61,2.18 L15.30,2.00 L15.99,1.85 L16.68,1.72 L17.38,1.62 L18.09,1.56 L18.79,1.51 L19.50,1.50 L20.21,1.51 L20.91,1.56 L21.62,1.62 L22.32,1.72 L23.01,1.85 L23.70,2.00 L24.39,2.18 L24.96,2.70 L25.42,3.47 L25.97,3.89 L26.66,3.98 L27.52,3.76 L28.30,3.80 L28.90,4.15 L29.50,4.53 L30.08,4.94 L30.64,5.36 L31.19,5.81 L31.72,6.28 L32.23,6.77 L32.72,7.28 L33.19,7.81 L33.64,8.36 L34.06,8.92 L34.47,9.50 L34.85,10.10 L35.20,10.70 L35.24,11.48 L35.02,12.34 L35.11,13.03 L35.53,13.58 L36.30,14.04 L36.82,14.61 L37.00,15.30 L37.15,15.99 L37.28,16.68 L37.38,17.38 L37.44,18.09 L37.49,18.79 Z" fill="none" stroke="url(#kr13)" stroke-width="1.1"/></svg>
<svg class="a" style="left:0;top:0" width="84" height="84"><defs><linearGradient id="ka13" gradientUnits="userSpaceOnUse" x1="58.0" y1="14.3" x2="64.6" y2="64.6"><stop offset="0" stop-color="#b9bec5"/><stop offset="1" stop-color="#80878f"/></linearGradient></defs><path d="M19.37,64.63 A32,32 0 0 1 58.00,14.29" fill="none" stroke="#eceef1" stroke-width="2.15" stroke-linecap="round"/><path d="M58.00,14.29 A32,32 0 0 1 64.63,64.63" fill="none" stroke="url(#ka13)" stroke-width="2.15" stroke-linecap="round"/><line x1="52.75" y1="23.38" x2="58.40" y2="13.59" stroke="#eceef1" stroke-width="2.15"/><line x1="45.10" y1="36.63" x2="48.60" y2="30.57" stroke="#eceef2" stroke-width="3.0" stroke-linecap="round"/></svg>
</div>
<div class="a" style="left:1227.30px;top:482.80px;width:64.4px;height:64.4px">
<div class="a kb" style="left:15.600000000000001px;top:15.600000000000001px;width:33.2px;height:33.2px;box-shadow:0 3px 6px rgba(12,14,18,.5)"></div>
<svg class="a" style="left:0;top:0" width="64.4" height="64.4"><defs><linearGradient id="kb14" x1="0.3" y1="0" x2="0.7" y2="1"><stop offset="0" stop-color="#3c4048"/><stop offset="1" stop-color="#26292e"/></linearGradient></defs><circle cx="32.2" cy="32.2" r="16.6" fill="url(#kb14)" stroke="#8c929a" stroke-width="1.1"/></svg>
<div class="a" style="left:21.200000000000003px;top:21.200000000000003px;width:22px;height:22px;border-radius:50%;background:conic-gradient(from 0deg,#4a4f58 0deg,#626872 40deg,#474c55 95deg,#3a3e46 150deg,#585e67 215deg,#3e434b 280deg,#4a4f58 360deg)"></div>
<svg class="a" style="left:0;top:0" width="64.4" height="64.4"><defs><linearGradient id="kr14" x1="0.15" y1="0.1" x2="0.85" y2="0.9"><stop offset="0" stop-color="rgba(200,206,216,.5)"/><stop offset=".55" stop-color="rgba(110,115,125,.35)"/><stop offset="1" stop-color="rgba(135,122,235,.7)"/></linearGradient></defs><circle cx="32.2" cy="32.2" r="10.5" fill="none" stroke="url(#kr14)" stroke-width="1.1"/></svg>
<svg class="a" style="left:0;top:0" width="64.4" height="64.4"><defs><linearGradient id="ka14" gradientUnits="userSpaceOnUse" x1="43.3" y1="13.0" x2="47.9" y2="47.9"><stop offset="0" stop-color="#b9bec5"/><stop offset="1" stop-color="#80878f"/></linearGradient></defs><path d="M16.50,47.90 A22.2,22.2 0 0 1 43.30,12.97" fill="none" stroke="#eceef1" stroke-width="2.05" stroke-linecap="round"/><path d="M43.30,12.97 A22.2,22.2 0 0 1 47.90,47.90" fill="none" stroke="url(#ka14)" stroke-width="2.05" stroke-linecap="round"/><line x1="39.70" y1="19.21" x2="43.65" y2="12.37" stroke="#eceef1" stroke-width="2.05"/><line x1="35.00" y1="27.35" x2="37.30" y2="23.37" stroke="#eceef2" stroke-width="2.4" stroke-linecap="round"/></svg>
</div>
<div class="t" style="left:815.20px;width:400px;text-align:center;top:541.63px;font-size:11.8px;color:#e6e8ec;font-weight:bold;">Tilt</div>
<div class="t" style="left:937.30px;width:400px;text-align:center;top:539.93px;font-size:11.8px;color:#e6e8ec;font-weight:bold;">Shift</div>
<div class="t" style="left:1059.50px;width:400px;text-align:center;top:541.63px;font-size:11.8px;color:#e6e8ec;font-weight:bold;">Scale</div>
<div class="mx" style="left:213.5px;top:576.5px;width:18px;height:78.5px;border-radius:9px"></div>
<div class="t" style="left:21.20px;width:400px;text-align:center;top:610.55px;font-size:12.3px;color:#e6e8ec;font-weight:bold;transform:rotate(-90deg);transform-origin:200px 4.4px;">Matrix</div>
<div class="mx" style="left:235.8px;top:577px;width:210px;height:78px"></div>
<div class="a" style="left:250.80px;top:578.00px;width:64.4px;height:64.4px">
<div class="a kb" style="left:15.600000000000001px;top:15.600000000000001px;width:33.2px;height:33.2px;box-shadow:0 3px 6px rgba(12,14,18,.5)"></div>
<svg class="a" style="left:0;top:0" width="64.4" height="64.4"><defs><linearGradient id="kb15" x1="0.3" y1="0" x2="0.7" y2="1"><stop offset="0" stop-color="#545962"/><stop offset="1" stop-color="#30333a"/></linearGradient></defs><circle cx="32.2" cy="32.2" r="16.6" fill="url(#kb15)" stroke="#8c929a" stroke-width="1.1"/></svg>
<div class="a" style="left:21.200000000000003px;top:21.200000000000003px;width:22px;height:22px;border-radius:50%;background:conic-gradient(from 0deg,#4a4f58 0deg,#626872 40deg,#474c55 95deg,#3a3e46 150deg,#585e67 215deg,#3e434b 280deg,#4a4f58 360deg)"></div>
<svg class="a" style="left:0;top:0" width="64.4" height="64.4"><defs><linearGradient id="kr15" x1="0.15" y1="0.1" x2="0.85" y2="0.9"><stop offset="0" stop-color="rgba(200,206,216,.5)"/><stop offset=".55" stop-color="rgba(110,115,125,.35)"/><stop offset="1" stop-color="rgba(135,122,235,.7)"/></linearGradient></defs><circle cx="32.2" cy="32.2" r="10.5" fill="none" stroke="url(#kr15)" stroke-width="1.1"/></svg>
<svg class="a" style="left:0;top:0" width="64.4" height="64.4"><defs><linearGradient id="ka15" gradientUnits="userSpaceOnUse" x1="43.3" y1="13.0" x2="47.9" y2="47.9"><stop offset="0" stop-color="#b9bec5"/><stop offset="1" stop-color="#80878f"/></linearGradient></defs><path d="M16.50,47.90 A22.2,22.2 0 0 1 43.30,12.97" fill="none" stroke="#eceef1" stroke-width="2.05" stroke-linecap="round"/><path d="M43.30,12.97 A22.2,22.2 0 0 1 47.90,47.90" fill="none" stroke="url(#ka15)" stroke-width="2.05" stroke-linecap="round"/><line x1="39.70" y1="19.21" x2="43.65" y2="12.37" stroke="#eceef1" stroke-width="2.05"/><line x1="35.00" y1="27.35" x2="37.30" y2="23.37" stroke="#eceef2" stroke-width="2.4" stroke-linecap="round"/></svg>
</div>
<div class="a" style="left:352.60px;top:577.80px;width:64.4px;height:64.4px">
<div class="a kb" style="left:15.600000000000001px;top:15.600000000000001px;width:33.2px;height:33.2px;box-shadow:0 3px 6px rgba(12,14,18,.5)"></div>
<svg class="a" style="left:0;top:0" width="64.4" height="64.4"><defs><linearGradient id="kb16" x1="0.3" y1="0" x2="0.7" y2="1"><stop offset="0" stop-color="#545962"/><stop offset="1" stop-color="#30333a"/></linearGradient></defs><circle cx="32.2" cy="32.2" r="16.6" fill="url(#kb16)" stroke="#8c929a" stroke-width="1.1"/></svg>
<div class="a" style="left:21.200000000000003px;top:21.200000000000003px;width:22px;height:22px;border-radius:50%;background:conic-gradient(from 0deg,#4a4f58 0deg,#626872 40deg,#474c55 95deg,#3a3e46 150deg,#585e67 215deg,#3e434b 280deg,#4a4f58 360deg)"></div>
<svg class="a" style="left:0;top:0" width="64.4" height="64.4"><defs><linearGradient id="kr16" x1="0.15" y1="0.1" x2="0.85" y2="0.9"><stop offset="0" stop-color="rgba(200,206,216,.5)"/><stop offset=".55" stop-color="rgba(110,115,125,.35)"/><stop offset="1" stop-color="rgba(135,122,235,.7)"/></linearGradient></defs><circle cx="32.2" cy="32.2" r="10.5" fill="none" stroke="url(#kr16)" stroke-width="1.1"/></svg>
<svg class="a" style="left:0;top:0" width="64.4" height="64.4"><defs><linearGradient id="ka16" gradientUnits="userSpaceOnUse" x1="43.3" y1="13.0" x2="47.9" y2="47.9"><stop offset="0" stop-color="#b9bec5"/><stop offset="1" stop-color="#80878f"/></linearGradient></defs><path d="M16.50,47.90 A22.2,22.2 0 0 1 43.30,12.97" fill="none" stroke="#eceef1" stroke-width="2.05" stroke-linecap="round"/><path d="M43.30,12.97 A22.2,22.2 0 0 1 47.90,47.90" fill="none" stroke="url(#ka16)" stroke-width="2.05" stroke-linecap="round"/><line x1="39.70" y1="19.21" x2="43.65" y2="12.37" stroke="#eceef1" stroke-width="2.05"/><line x1="35.00" y1="27.35" x2="37.30" y2="23.37" stroke="#eceef2" stroke-width="2.4" stroke-linecap="round"/></svg>
</div>
<div class="t" style="left:82.80px;width:400px;text-align:center;top:637.16px;font-size:11.6px;color:#e6e8ec;font-weight:bold;">Macro 1</div>
<div class="t" style="left:184.50px;width:400px;text-align:center;top:637.16px;font-size:11.6px;color:#e6e8ec;font-weight:bold;">Macro 2</div>
<div class="a kb" style="left:315.2px;top:583.0px;width:18.4px;height:18.4px;background:#9d90f6;box-shadow:0 0 0 2.4px #5b5f68"></div>
<svg class="a" style="left:318.4px;top:588.2px;overflow:visible;" width="12" height="8" viewBox="0 0 12 8"><path d="M5.2,0.6 V7.4 L0.6,4 Z M6.8,0.6 V7.4 L11.4,4 Z" fill="#2a2b33"/></svg>
<div class="a kb" style="left:416.8px;top:583.0px;width:18.4px;height:18.4px;background:#9d90f6;box-shadow:0 0 0 2.4px #5b5f68"></div>
<svg class="a" style="left:420px;top:588.2px;overflow:visible;" width="12" height="8" viewBox="0 0 12 8"><path d="M5.2,0.6 V7.4 L0.6,4 Z M6.8,0.6 V7.4 L11.4,4 Z" fill="#2a2b33"/></svg>
<div class="mx" style="left:450.8px;top:577px;width:638.5px;height:78px;overflow:hidden"></div>
<svg class="a" style="left:0;top:0" width="1540" height="850"><defs><linearGradient id="mg" x1="0" y1="0" x2="0" y2="1"><stop offset="0" stop-color="#6d7480"/><stop offset="1" stop-color="#4d535d"/></linearGradient>
<linearGradient id="mp" x1="0" y1="0" x2="0" y2="1"><stop offset="0" stop-color="#8c80e8" stop-opacity=".95"/><stop offset="1" stop-color="#5a5f75" stop-opacity=".0"/></linearGradient><clipPath id="mxc"><rect x="452" y="578" width="636" height="76" rx="9"/></clipPath></defs>
<g clip-path="url(#mxc)">
<rect x="665" y="600" width="105" height="55" fill="url(#mg)"/>
<path d="M665,603 L721,621 L770,625 V655 H665 Z" fill="url(#mp)"/>
<path d="M665,603 L721,621 L770,625" fill="none" stroke="#9284f2" stroke-width="1.6"/>
<rect x="984" y="600" width="105" height="55" fill="url(#mg)"/>
<path d="M984,603 L1040,621 L1089,625 V655 H984 Z" fill="url(#mp)"/>
<path d="M984,603 L1040,621 L1089,625" fill="none" stroke="#9284f2" stroke-width="1.6"/>
</g>
<g stroke="#555b64" stroke-width="1.5">
<line x1="451" y1="599.5" x2="1089" y2="599.5"/>
<line x1="557.5" y1="577" x2="557.5" y2="655"/><line x1="664" y1="577" x2="664" y2="655"/><line x1="770.5" y1="577" x2="770.5" y2="655"/><line x1="877" y1="577" x2="877" y2="655"/><line x1="983.5" y1="577" x2="983.5" y2="655"/>
</g>
<g fill="none" stroke="#777c85" stroke-width="1.6" stroke-linejoin="round" stroke-linecap="round">
<path d="M489.5,635.5 L495.5,622 L499.5,628.5 L510,628.5 L520,635.5"/>
<path d="M595.5,636.5 L601.5,623 L605.5,629.5 L616,629.5 L626,636.5"/>
<path d="M810,627 C810,618 816,618 817,627 C818,636 821,636 824,627 C826,619 830,619 831,627 C832,635 836,636 838,629"/>
<path d="M912,621 C915,624 918,629 921,634 C921,628 922,624 924,620 C926,624 928,629 931,634 C931,628 932,624 933.5,620 L942,633"/><circle cx="921" cy="634" r="1.3" fill="#777c85"/><circle cx="924" cy="620.5" r="1.3" fill="#777c85"/><circle cx="931" cy="634" r="1.3" fill="#777c85"/><circle cx="933.5" cy="620.5" r="1.3" fill="#777c85"/>
</g>
</svg>
<div class="a kb" style="left:455.3px;top:581.3px;width:14.4px;height:14.4px;background:#9d90f6;box-shadow:0 0 0 1.2px #5b5f68"></div>
<svg class="a" style="left:456.5px;top:584.5px;overflow:visible;" width="12" height="8" viewBox="0 0 12 8"><path d="M5.2,0.6 V7.4 L0.6,4 Z M6.8,0.6 V7.4 L11.4,4 Z" fill="#2a2b33"/></svg>
<div class="t" style="left:478.00px;top:583.60px;font-size:12px;color:#eceef2;font-weight:bold;">Env</div>
<div class="t" style="left:152.00px;width:400px;text-align:right;top:583.60px;font-size:12px;color:#eceef2;font-weight:bold;">1</div>
<div class="a kb" style="left:561.8px;top:581.3px;width:14.4px;height:14.4px;background:#9d90f6;box-shadow:0 0 0 1.2px #5b5f68"></div>
<svg class="a" style="left:563px;top:584.5px;overflow:visible;" width="12" height="8" viewBox="0 0 12 8"><path d="M5.2,0.6 V7.4 L0.6,4 Z M6.8,0.6 V7.4 L11.4,4 Z" fill="#2a2b33"/></svg>
<div class="t" style="left:584.50px;top:583.60px;font-size:12px;color:#eceef2;font-weight:bold;">Env</div>
<div class="t" style="left:258.50px;width:400px;text-align:right;top:583.60px;font-size:12px;color:#eceef2;font-weight:bold;">2</div>
<div class="a kb" style="left:668.3px;top:581.3px;width:14.4px;height:14.4px;background:#9d90f6;box-shadow:0 0 0 1.2px #5b5f68"></div>
<svg class="a" style="left:669.5px;top:584.5px;overflow:visible;" width="12" height="8" viewBox="0 0 12 8"><path d="M5.2,0.6 V7.4 L0.6,4 Z M6.8,0.6 V7.4 L11.4,4 Z" fill="#2a2b33"/></svg>
<div class="t" style="left:691.00px;top:583.60px;font-size:12px;color:#eceef2;font-weight:bold;">LFO</div>
<div class="t" style="left:365.00px;width:400px;text-align:right;top:583.60px;font-size:12px;color:#eceef2;font-weight:bold;">3</div>
<div class="a kb" style="left:774.8px;top:581.3px;width:14.4px;height:14.4px;background:#9d90f6;box-shadow:0 0 0 1.2px #5b5f68"></div>
<svg class="a" style="left:776px;top:584.5px;overflow:visible;" width="12" height="8" viewBox="0 0 12 8"><path d="M5.2,0.6 V7.4 L0.6,4 Z M6.8,0.6 V7.4 L11.4,4 Z" fill="#2a2b33"/></svg>
<div class="t" style="left:797.50px;top:583.60px;font-size:12px;color:#eceef2;font-weight:bold;">LFO</div>
<div class="t" style="left:471.50px;width:400px;text-align:right;top:583.60px;font-size:12px;color:#eceef2;font-weight:bold;">4</div>
<div class="a kb" style="left:881.3px;top:581.3px;width:14.4px;height:14.4px;background:#9d90f6;box-shadow:0 0 0 1.2px #5b5f68"></div>
<svg class="a" style="left:882.5px;top:584.5px;overflow:visible;" width="12" height="8" viewBox="0 0 12 8"><path d="M5.2,0.6 V7.4 L0.6,4 Z M6.8,0.6 V7.4 L11.4,4 Z" fill="#2a2b33"/></svg>
<div class="t" style="left:904.00px;top:583.60px;font-size:12px;color:#eceef2;font-weight:bold;">Curves</div>
<div class="t" style="left:578.00px;width:400px;text-align:right;top:583.60px;font-size:12px;color:#eceef2;font-weight:bold;">5</div>
<div class="a kb" style="left:987.8px;top:581.3px;width:14.4px;height:14.4px;background:#9d90f6;box-shadow:0 0 0 1.2px #5b5f68"></div>
<svg class="a" style="left:989px;top:584.5px;overflow:visible;" width="12" height="8" viewBox="0 0 12 8"><path d="M5.2,0.6 V7.4 L0.6,4 Z M6.8,0.6 V7.4 L11.4,4 Z" fill="#2a2b33"/></svg>
<div class="t" style="left:1010.50px;top:583.60px;font-size:12px;color:#eceef2;font-weight:bold;">Curves</div>
<div class="t" style="left:683.50px;width:400px;text-align:right;top:583.60px;font-size:12px;color:#eceef2;font-weight:bold;">6</div>
<div class="mx" style="left:1094px;top:577px;width:232px;height:78px"></div>
<div class="t" style="left:1112.00px;top:597.43px;font-size:11.8px;color:#e6e8ec;font-weight:bold;">Dry</div>
<div class="a" style="left:1143px;top:599.8px;width:134.5px;height:7px;border-radius:4px;background:#555a64"></div>
<div class="a" style="left:1143px;top:599.8px;width:84px;height:7px;border-radius:4px 0 0 4px;background:linear-gradient(90deg,#a9adb8,#c5c9d2)"></div>
<div class="a" style="left:1225px;top:593.5px;width:4.6px;height:20px;border-radius:2.3px;background:#f1f2f5"></div>
<div class="t" style="left:916.00px;width:400px;text-align:right;top:597.43px;font-size:11.8px;color:#eceef2;font-weight:bold;">100%</div>
<svg class="a" style="left:1120px;top:620px;overflow:visible;" width="20" height="16" viewBox="0 0 20 16"><path d="M0.8,0 V12 C0.8,13.8 2,15 3.8,15 H19" fill="none" stroke="rgba(140,146,156,.5)" stroke-width="1.2"/></svg>
<div class="t" style="left:982.50px;width:400px;text-align:center;top:627.63px;font-size:11.8px;color:#e6e8ec;font-weight:bold;">Retune</div>
<div class="a" style="left:1218.5px;top:624px;width:42.5px;height:18px;background:#4a4f59;border-radius:4px"></div>
<div class="t" style="left:1039.75px;width:400px;text-align:center;top:628.67px;font-size:11.8px;color:#eef0f3;font-weight:bold;">Off</div>
<div class="a" style="left:213.5px;top:659.5px;width:232.5px;height:158.3px;border-radius:9px;background:linear-gradient(#5f6875,#4b525e);box-shadow:0 0 0 1px rgba(125,132,143,.6)"></div>
<div class="a" style="left:213.5px;top:659.5px;width:232.5px;height:33px;border-radius:9px 9px 0 0;background:#24272d"></div>
<div class="a" style="left:329px;top:659.5px;width:1px;height:159px;background:rgba(120,127,137,.45)"></div>
<div class="t" style="left:71.50px;width:400px;text-align:center;top:669.98px;font-size:14px;color:#eceef2;font-weight:bold;">Input</div>
<div class="t" style="left:187.50px;width:400px;text-align:center;top:669.98px;font-size:14px;color:#eceef2;font-weight:bold;">Pitch Range</div>
<div class="t" style="left:227.20px;top:708.23px;font-size:11.8px;color:#e6e8ec;font-weight:bold;">Gain</div>
<div class="a" style="left:262.8px;top:704.3px;width:57.5px;height:17.4px;background:#353a43;border-radius:4px"></div>
<div class="t" style="left:91.55px;width:400px;text-align:center;top:708.67px;font-size:11.8px;color:#eef0f3;font-weight:bold;">-24.0 dB</div>
<div class="a" style="left:228px;top:740px;width:90px;height:1px;background:linear-gradient(90deg,rgba(140,147,157,0),rgba(140,147,157,.45) 30%,rgba(140,147,157,.45) 70%,rgba(140,147,157,0))"></div>
<div class="t" style="left:227.20px;top:761.93px;font-size:11.8px;color:#e6e8ec;font-weight:bold;">Gate</div>
<div class="a" style="left:262.8px;top:758.2px;width:57.5px;height:17.4px;background:#353a43;border-radius:4px"></div>
<div class="t" style="left:91.55px;width:400px;text-align:center;top:762.57px;font-size:11.8px;color:#eef0f3;font-weight:bold;">100%</div>
<svg class="a" style="left:238.5px;top:783.5px;overflow:visible;" width="18" height="14" viewBox="0 0 18 14"><path d="M0.8,0 V10.5 C0.8,12 1.8,13 3.3,13 H17" fill="none" stroke="rgba(140,146,156,.5)" stroke-width="1.2"/></svg>
<div class="a" style="left:262.8px;top:785.2px;width:57.5px;height:17.4px;background:#353a43;border-radius:4px"></div>
<div class="t" style="left:91.55px;width:400px;text-align:center;top:789.57px;font-size:11.8px;color:#eef0f3;font-weight:bold;">Fast</div>
<div class="a" style="left:339.5px;top:781.5px;width:97.5px;height:24px;border-radius:7px;background:#30343b"></div>
<div class="a kb" style="left:345.8px;top:708.1px;width:11px;height:11px;border:1.3px solid #c3c7ce"></div>
<div class="t" style="left:362.70px;top:709.23px;font-size:11.8px;color:#eceef2;font-weight:bold;">Full</div>
<div class="a kb" style="left:345.8px;top:734.9px;width:11px;height:11px;border:1.3px solid #c3c7ce"></div>
<div class="t" style="left:362.70px;top:736.03px;font-size:11.8px;color:#eceef2;font-weight:bold;">High</div>
<div class="a kb" style="left:345.5px;top:761.4000000000001px;width:11.6px;height:11.6px;background:#a79cff"></div>
<div class="t" style="left:362.70px;top:762.83px;font-size:11.8px;color:#eceef2;font-weight:bold;">Mid</div>
<div class="a kb" style="left:345.8px;top:788.5px;width:11px;height:11px;border:1.3px solid #c3c7ce"></div>
<div class="t" style="left:362.70px;top:789.63px;font-size:11.8px;color:#eceef2;font-weight:bold;">Bass</div>
<div class="a" style="left:450.8px;top:659.5px;width:638.5px;height:159.5px;border-radius:9px;background:#23272e"></div>
<div class="a" style="left:451.4px;top:659.5px;width:86.8px;height:158.5px;border-radius:8px 3px 8px 8px;background:linear-gradient(#636c79,#4b525e);box-shadow:inset 0 0 0 1px rgba(145,152,163,.6)"></div>
<div class="a" style="left:455.4px;top:809.6px;width:78.8px;height:4.3px;border-radius:2.2px;background:#a599ff"></div>
<div class="a" style="left:543.1px;top:659.5px;width:86.6px;height:158.5px;border-radius:3px 3px 8px 8px;background:linear-gradient(#636c79,#4b525e);box-shadow:inset 0 0 0 1px rgba(145,152,163,.6)"></div>
<div class="a" style="left:547.1px;top:809.6px;width:78.6px;height:4.3px;border-radius:2.2px;background:#a599ff"></div>
<div class="a" style="left:635px;top:659.5px;width:87.0px;height:158.5px;border-radius:3px 3px 8px 8px;background:linear-gradient(#9e93fc,#8a7fe0 30%,#6d65ad 65%,#50546e);box-shadow:inset 0 0 0 1px rgba(145,152,163,.6)"></div>
<div class="a" style="left:639px;top:809.6px;width:79.0px;height:4.3px;border-radius:2.2px;background:#a599ff"></div>
<div class="a" style="left:726.1px;top:659.5px;width:87.1px;height:158.5px;border-radius:3px 3px 8px 8px;background:linear-gradient(#636c79,#4b525e);box-shadow:inset 0 0 0 1px rgba(145,152,163,.6)"></div>
<div class="a" style="left:730.1px;top:809.6px;width:79.1px;height:4.3px;border-radius:2.2px;background:#a599ff"></div>
<div class="a" style="left:818.6px;top:659.5px;width:86.8px;height:158.5px;border-radius:3px 3px 8px 8px;background:linear-gradient(#636c79,#4b525e);box-shadow:inset 0 0 0 1px rgba(145,152,163,.6)"></div>
<div class="a" style="left:822.6px;top:809.6px;width:78.8px;height:4.3px;border-radius:2.2px;background:#a599ff"></div>
<div class="a" style="left:910.7px;top:659.5px;width:86.8px;height:158.5px;border-radius:3px 3px 8px 8px;background:linear-gradient(#636c79,#4b525e);box-shadow:inset 0 0 0 1px rgba(145,152,163,.6)"></div>
<div class="a" style="left:914.7px;top:809.6px;width:78.8px;height:4.3px;border-radius:2.2px;background:#a599ff"></div>
<div class="a" style="left:1002.9px;top:659.5px;width:85.6px;height:158.5px;border-radius:3px 8px 8px 8px;background:linear-gradient(#636c79,#4b525e);box-shadow:inset 0 0 0 1px rgba(145,152,163,.6)"></div>
<div class="a" style="left:1006.9px;top:809.6px;width:77.6px;height:4.3px;border-radius:2.2px;background:#a599ff"></div>
<div class="a" style="left:512.5px;top:659.5px;width:56px;height:108.7px;border-radius:0 0 8px 8px;background:#23272e;box-shadow:0 0 0 1px rgba(140,147,157,.6)"></div>
<div class="a" style="left:516.9px;top:659.4px;width:47.2px;height:104.4px;border-radius:2px 2px 7px 7px;background:linear-gradient(#33363d,#2a2d33);box-shadow:inset 0 0 0 1px rgba(125,132,142,.5)"></div>
<div class="a" style="left:521.3px;top:754.7px;width:38.3px;height:4.4px;border-radius:2.2px;background:#a599ff"></div>
<div class="a" style="left:603.7px;top:659.5px;width:56px;height:108.7px;border-radius:0 0 8px 8px;background:#23272e;box-shadow:0 0 0 1px rgba(140,147,157,.6)"></div>
<div class="a" style="left:608.1px;top:659.4px;width:47.2px;height:104.4px;border-radius:2px 2px 7px 7px;background:linear-gradient(#33363d,#2a2d33);box-shadow:inset 0 0 0 1px rgba(125,132,142,.5)"></div>
<div class="a" style="left:612.5px;top:754.7px;width:38.3px;height:4.4px;border-radius:2.2px;background:#a599ff"></div>
<div class="a" style="left:787.5px;top:659.5px;width:56px;height:108.7px;border-radius:0 0 8px 8px;background:#23272e;box-shadow:0 0 0 1px rgba(140,147,157,.6)"></div>
<div class="a" style="left:791.9px;top:659.4px;width:47.2px;height:104.4px;border-radius:2px 2px 7px 7px;background:linear-gradient(#33363d,#2a2d33);box-shadow:inset 0 0 0 1px rgba(125,132,142,.5)"></div>
<div class="a" style="left:796.3px;top:754.7px;width:38.3px;height:4.4px;border-radius:2.2px;background:#a599ff"></div>
<div class="a" style="left:796.3px;top:747px;width:38.3px;height:4px;border-radius:2px;background:rgba(165,153,255,.55)"></div>
<div class="a" style="left:796.3px;top:738.5px;width:38.3px;height:4px;border-radius:2px;background:rgba(165,153,255,.28)"></div>
<div class="a" style="left:796.3px;top:729.5px;width:38.3px;height:4px;border-radius:2px;background:rgba(165,153,255,.1)"></div>
<div class="a" style="left:879.6px;top:659.5px;width:56px;height:108.7px;border-radius:0 0 8px 8px;background:#23272e;box-shadow:0 0 0 1px rgba(140,147,157,.6)"></div>
<div class="a" style="left:884.0px;top:659.4px;width:47.2px;height:104.4px;border-radius:2px 2px 7px 7px;background:linear-gradient(#33363d,#2a2d33);box-shadow:inset 0 0 0 1px rgba(125,132,142,.5)"></div>
<div class="a" style="left:888.4px;top:754.7px;width:38.3px;height:4.4px;border-radius:2.2px;background:#a599ff"></div>
<div class="a" style="left:971.8px;top:659.5px;width:56px;height:108.7px;border-radius:0 0 8px 8px;background:#23272e;box-shadow:0 0 0 1px rgba(140,147,157,.6)"></div>
<div class="a" style="left:976.1999999999999px;top:659.4px;width:47.2px;height:104.4px;border-radius:2px 2px 7px 7px;background:linear-gradient(#33363d,#2a2d33);box-shadow:inset 0 0 0 1px rgba(125,132,142,.5)"></div>
<div class="a" style="left:980.5999999999999px;top:754.7px;width:38.3px;height:4.4px;border-radius:2.2px;background:#a599ff"></div>
<div class="t" style="left:340.80px;width:400px;text-align:center;top:675.41px;font-size:13.2px;color:#eceef2;font-weight:bold;">C#</div>
<div class="a" style="left:1094px;top:659.5px;width:232px;height:158.5px;border-radius:10px;background:linear-gradient(#616a77,#4b535f);box-shadow:0 0 0 1px rgba(125,132,143,.6)"></div>
<svg class="a" style="left:0;top:0" width="1540" height="850"><g fill="#262a31"><circle cx="1120.25" cy="703.50" r="1.1"/><circle cx="1124.75" cy="703.50" r="1.1"/><circle cx="1120.25" cy="708.00" r="1.1"/><circle cx="1124.75" cy="708.00" r="1.1"/><circle cx="1120.25" cy="712.50" r="1.1"/><circle cx="1124.75" cy="712.50" r="1.1"/><circle cx="1120.25" cy="717.00" r="1.1"/><circle cx="1124.75" cy="717.00" r="1.1"/><circle cx="1120.25" cy="721.50" r="1.1"/><circle cx="1124.75" cy="721.50" r="1.1"/><circle cx="1120.25" cy="726.00" r="1.1"/><circle cx="1124.75" cy="726.00" r="1.1"/><circle cx="1120.25" cy="730.50" r="1.1"/><circle cx="1124.75" cy="730.50" r="1.1"/><circle cx="1120.25" cy="735.00" r="1.1"/><circle cx="1124.75" cy="735.00" r="1.1"/><circle cx="1120.25" cy="739.50" r="1.1"/><circle cx="1124.75" cy="739.50" r="1.1"/><circle cx="1120.25" cy="744.00" r="1.1"/><circle cx="1124.75" cy="744.00" r="1.1"/><circle cx="1120.25" cy="748.50" r="1.1"/><circle cx="1124.75" cy="748.50" r="1.1"/><circle cx="1120.25" cy="753.00" r="1.1"/><circle cx="1124.75" cy="753.00" r="1.1"/></g></svg>
<svg class="a" style="left:0;top:0" width="1540" height="850"><g fill="#262a31"><circle cx="1295.75" cy="703.50" r="1.1"/><circle cx="1300.25" cy="703.50" r="1.1"/><circle cx="1295.75" cy="708.00" r="1.1"/><circle cx="1300.25" cy="708.00" r="1.1"/><circle cx="1295.75" cy="712.50" r="1.1"/><circle cx="1300.25" cy="712.50" r="1.1"/><circle cx="1295.75" cy="717.00" r="1.1"/><circle cx="1300.25" cy="717.00" r="1.1"/><circle cx="1295.75" cy="721.50" r="1.1"/><circle cx="1300.25" cy="721.50" r="1.1"/><circle cx="1295.75" cy="726.00" r="1.1"/><circle cx="1300.25" cy="726.00" r="1.1"/><circle cx="1295.75" cy="730.50" r="1.1"/><circle cx="1300.25" cy="730.50" r="1.1"/><circle cx="1295.75" cy="735.00" r="1.1"/><circle cx="1300.25" cy="735.00" r="1.1"/><circle cx="1295.75" cy="739.50" r="1.1"/><circle cx="1300.25" cy="739.50" r="1.1"/><circle cx="1295.75" cy="744.00" r="1.1"/><circle cx="1300.25" cy="744.00" r="1.1"/><circle cx="1295.75" cy="748.50" r="1.1"/><circle cx="1300.25" cy="748.50" r="1.1"/><circle cx="1295.75" cy="753.00" r="1.1"/><circle cx="1300.25" cy="753.00" r="1.1"/></g></svg>
<div class="t" style="left:1010.50px;width:400px;text-align:center;top:689.97px;font-size:47.5px;color:#eceef2;font-weight:bold;">C#</div>
<div class="t" style="left:1010.00px;width:400px;text-align:center;top:748.78px;font-size:14px;color:#e8eaee;font-weight:bold;">Major Penta.</div>
<svg class="a" style="left:1262px;top:680px;overflow:visible;" width="13" height="16" viewBox="0 0 13 16"><path d="M3.5,7 V4.5 C3.5,2.3 5,1 6.8,1 C8.6,1 10,2.3 10,4.2" fill="none" stroke="#c8ccd3" stroke-width="1.7"/><rect x="1" y="7" width="11.5" height="8.2" rx="1.5" fill="#c8ccd3"/><circle cx="6.75" cy="10.6" r="1.3" fill="#4f555f"/></svg>
<div class="a" style="left:1112px;top:783.5px;width:196px;height:1px;background:linear-gradient(90deg,rgba(140,147,157,0),rgba(140,147,157,.45) 30%,rgba(140,147,157,.45) 70%,rgba(140,147,157,0))"></div>
<div class="t" style="left:789.50px;width:400px;text-align:right;top:795.63px;font-size:11.8px;color:#e6e8ec;font-weight:bold;">Tuning</div>
<div class="a" style="left:1198.5px;top:792px;width:71.5px;height:17.2px;background:#353a43;border-radius:4px"></div>
<div class="t" style="left:1034.25px;width:400px;text-align:center;top:796.27px;font-size:11.8px;color:#eef0f3;font-weight:bold;">440.00 Hz</div>
<svg class="a" style="left:583px;top:90px;overflow:visible;" width="18" height="18" viewBox="0 0 18 18"><path d="M3.6,2 C3.6,0.5 6.2,0.5 6.2,2 V7 C6.6,6 8.8,6.1 9,7.3 C9.3,6.4 11.4,6.5 11.6,7.7 C11.9,7 14,7.1 14.2,8.3 C14.6,7.7 16.4,8 16.4,9.1 V12 C16.4,14.5 15.2,16 14.2,17.2 H7.4 C6.4,15.8 4.4,13.4 1.3,11 C0.3,10.2 1.1,8.5 2.5,9 L3.6,9.6 Z" fill="#fff" stroke="#0c0c0e" stroke-width="1.1" stroke-linejoin="round"/><g stroke="#0c0c0e" stroke-width="1"><line x1="8.6" y1="11" x2="8.6" y2="14.2"/><line x1="10.5" y1="11" x2="10.5" y2="14.2"/><line x1="12.4" y1="11" x2="12.4" y2="14.2"/></g></svg>
</body></html>
